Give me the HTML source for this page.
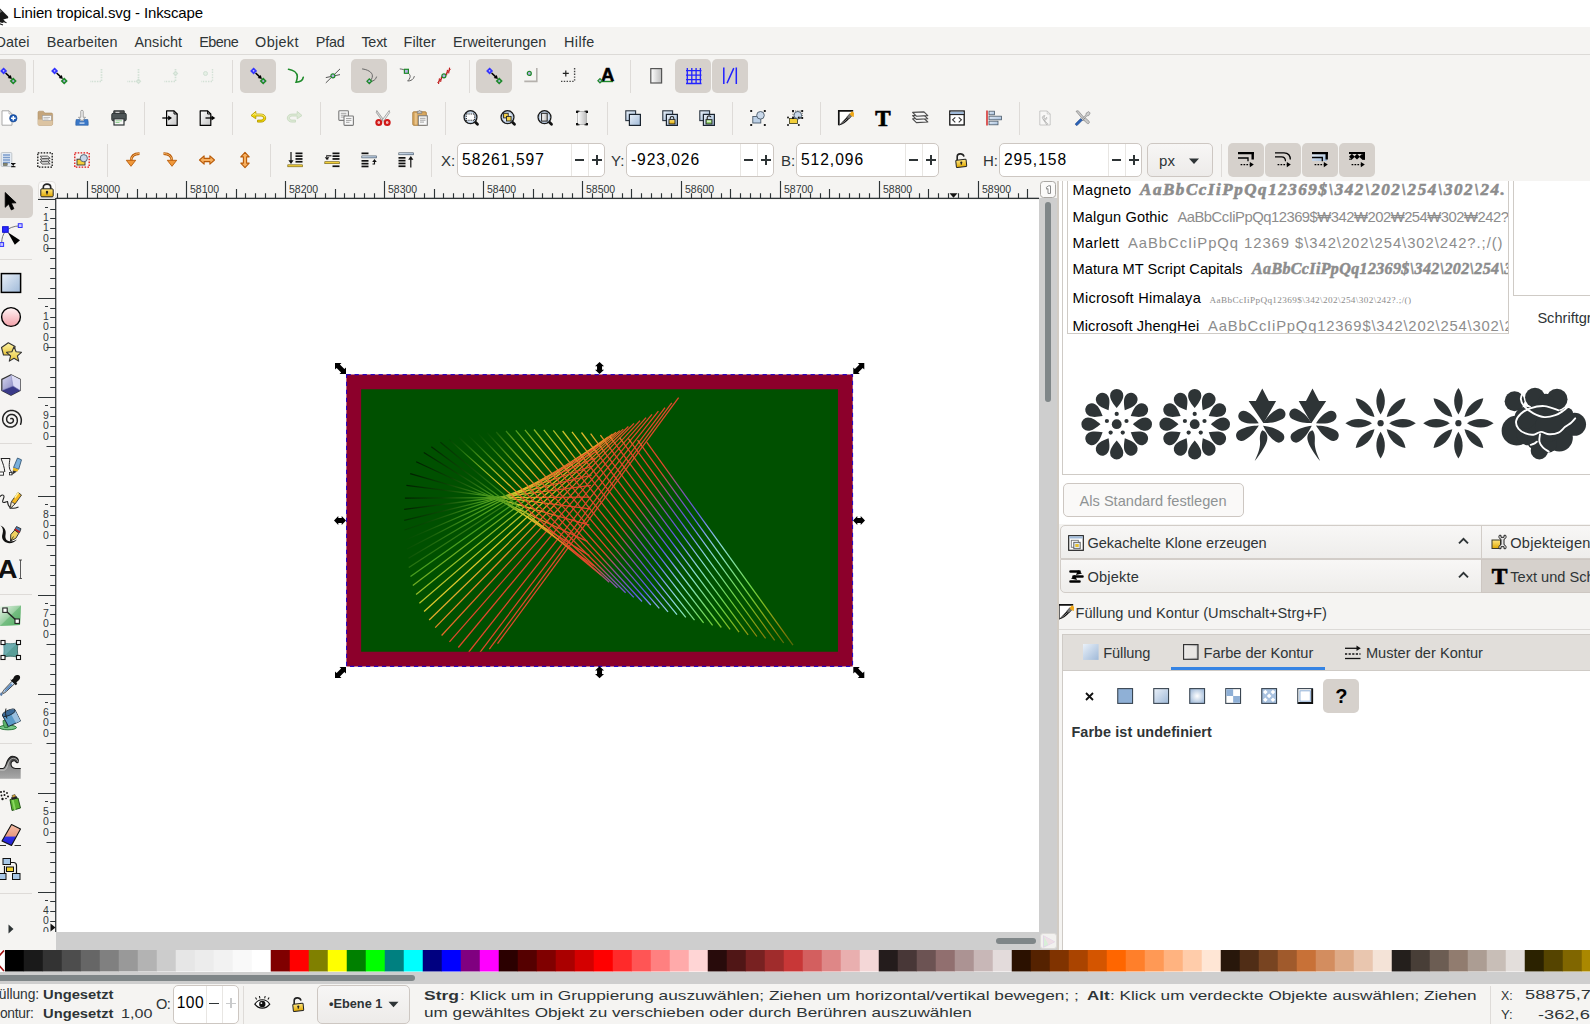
<!DOCTYPE html>
<html><head><meta charset="utf-8"><title>Linien tropical.svg - Inkscape</title>
<style>
html,body{margin:0;padding:0;}
body{width:1590px;height:1024px;overflow:hidden;position:relative;background:#f5f4f2;font-family:"Liberation Sans",sans-serif;}
.b{position:absolute;display:block;}
.t{position:absolute;white-space:nowrap;display:block;}
svg{overflow:visible}
</style></head><body>
<div class="b" style="left:0.00px;top:0.00px;width:1590.00px;height:27.00px;background:#fff"></div>
<div class="b" style="left:0.00px;top:54.00px;width:1590.00px;height:1.00px;background:#dcdad7"></div>
<svg class="b" style="left:-15.00px;top:4.00px;" width="24" height="22" viewBox="0 0 24 22"><path d="M12 1.500L23 12.500c.8 1-.2 2-1.200 2l-3.500 1 2 2-3 1.500-3.500-1-2.500 2.500-4-2.500L2 17c-1.500-.5-2-2-.8-3.200z" fill="#1a1a1a"/><path d="M12 2.500l5 5-2 1.500-2-1-2.500 1.500-1.500-2z" fill="#fff" opacity=".35"/><path d="M18.500 17.500l3 1.200M14 19.500l4 1.500" stroke="#222" stroke-width="1.200"/></svg>
<span class="t" style="left:13.00px;top:5.40px;font-size:15.00px;line-height:15.00px;letter-spacing:-0.114px;color:#000;">Linien tropical.svg - Inkscape</span>
<span class="t" style="left:-4.60px;top:34.51px;font-size:14.40px;line-height:14.40px;letter-spacing:0.114px;color:#2e3436;">Datei</span>
<span class="t" style="left:46.70px;top:34.51px;font-size:14.40px;line-height:14.40px;letter-spacing:0.132px;color:#2e3436;">Bearbeiten</span>
<span class="t" style="left:134.40px;top:34.51px;font-size:14.40px;line-height:14.40px;letter-spacing:0.065px;color:#2e3436;">Ansicht</span>
<span class="t" style="left:199.20px;top:34.51px;font-size:14.40px;line-height:14.40px;letter-spacing:-0.491px;color:#2e3436;">Ebene</span>
<span class="t" style="left:255.10px;top:34.51px;font-size:14.40px;line-height:14.40px;letter-spacing:0.344px;color:#2e3436;">Objekt</span>
<span class="t" style="left:315.70px;top:34.51px;font-size:14.40px;line-height:14.40px;letter-spacing:-0.159px;color:#2e3436;">Pfad</span>
<span class="t" style="left:361.40px;top:34.51px;font-size:14.40px;line-height:14.40px;letter-spacing:-0.230px;color:#2e3436;">Text</span>
<span class="t" style="left:403.60px;top:34.51px;font-size:14.40px;line-height:14.40px;letter-spacing:0.031px;color:#2e3436;">Filter</span>
<span class="t" style="left:452.90px;top:34.51px;font-size:14.40px;line-height:14.40px;letter-spacing:0.054px;color:#2e3436;">Erweiterungen</span>
<span class="t" style="left:564.00px;top:34.51px;font-size:14.40px;line-height:14.40px;letter-spacing:0.396px;color:#2e3436;">Hilfe</span>
<div class="b" style="left:1058.60px;top:181.00px;width:4.00px;height:344.00px;background:#fff"></div><div class="b" style="left:1060.00px;top:181.00px;width:530.00px;height:345.00px;background:#fff"></div><div class="b" style="left:1062.00px;top:181.00px;width:1.00px;height:294.00px;background:#cfcbc6"></div><div class="b" style="left:1062.00px;top:474.00px;width:528.00px;height:1.00px;background:#cfcbc6"></div><div class="b" style="left:1067.00px;top:176.00px;width:442.00px;height:158.00px;border:1px solid #cfcbc6;box-sizing:border-box;background:#fff"></div><div class="b" style="left:1513.00px;top:176.00px;width:90.00px;height:120.00px;border:1px solid #cfcbc6;box-sizing:border-box;background:#fff"></div><div class="b" style="left:1059.00px;top:170.00px;width:531.00px;height:11.00px;background:#f5f4f2"></div><div class="b" style="left:1067px;top:176px;width:441px;height:157px;overflow:hidden"><span class="t" style="left:5.50px;top:7.04px;font-size:14.60px;line-height:14.60px;letter-spacing:0.301px;color:#000;">Magneto</span><span class="t" style="left:5.50px;top:33.84px;font-size:14.60px;line-height:14.60px;letter-spacing:0.139px;color:#000;">Malgun Gothic</span><span class="t" style="left:5.50px;top:60.04px;font-size:14.60px;line-height:14.60px;letter-spacing:0.343px;color:#000;">Marlett</span><span class="t" style="left:5.50px;top:85.94px;font-size:14.60px;line-height:14.60px;letter-spacing:0.067px;color:#000;">Matura MT Script Capitals</span><span class="t" style="left:5.50px;top:115.14px;font-size:14.60px;line-height:14.60px;letter-spacing:0.246px;color:#000;">Microsoft Himalaya</span><span class="t" style="left:5.50px;top:142.84px;font-size:14.60px;line-height:14.60px;letter-spacing:0.105px;color:#000;">Microsoft JhengHei</span><span class="t" style="left:73.00px;top:5.21px;font-size:17.00px;line-height:17.00px;letter-spacing:1.550px;font-weight:bold;font-family:'Liberation Serif',serif;color:#8c8c8c;font-style:italic;-webkit-text-stroke:.6px #8c8c8c;">AaBbCcIiPpQq12369$\342\202\254\302\24.</span><span class="t" style="left:110.40px;top:33.67px;font-size:14.80px;line-height:14.80px;letter-spacing:-0.497px;color:#8c8c8c;">AaBbCcIiPpQq12369$₩342₩202₩254₩302₩242?</span><span class="t" style="left:61.00px;top:59.87px;font-size:14.80px;line-height:14.80px;letter-spacing:0.956px;color:#8c8c8c;">AaBbCcIiPpQq 12369 $\342\202\254\302\242?.;/()</span><span class="t" style="left:185.00px;top:85.46px;font-size:16.00px;line-height:16.00px;letter-spacing:0.367px;font-weight:bold;font-family:'Liberation Serif',serif;color:#8c8c8c;font-style:italic;-webkit-text-stroke:.5px #8c8c8c;">AaBbCcIiPpQq12369$\342\202\254\3</span><span class="t" style="left:142.60px;top:119.51px;font-size:9.20px;line-height:9.20px;letter-spacing:0.383px;font-family:'Liberation Serif',serif;color:#8c8c8c;">AaBbCcIiPpQq12369$\342\202\254\302\242?.;/()</span><span class="t" style="left:141.00px;top:142.67px;font-size:14.80px;line-height:14.80px;letter-spacing:0.807px;color:#8c8c8c;">AaBbCcIiPpQq12369$\342\202\254\302\242?</span></div><span class="t" style="left:1537.40px;top:310.54px;font-size:14.60px;line-height:14.60px;color:#2e3436;">Schriftgröße</span><svg class="b" style="left:0.00px;top:0.00px;" width="1590" height="480" viewBox="0 0 1590 480"><g transform="translate(1116.7,424.2)" fill="#2e3436"><path d="M0 -16.2 C-3.3 -20.402 -6.6 -24.222 -6.6 -28.7 A6.6 6.6 0 0 1 6.6 -28.7 C6.6 -24.222 3.3 -20.402 0 -16.2Z" transform="rotate(0)"/><path d="M0 -16.2 C-3.3 -20.402 -6.6 -24.222 -6.6 -28.7 A6.6 6.6 0 0 1 6.6 -28.7 C6.6 -24.222 3.3 -20.402 0 -16.2Z" transform="rotate(30)"/><path d="M0 -16.2 C-3.3 -20.402 -6.6 -24.222 -6.6 -28.7 A6.6 6.6 0 0 1 6.6 -28.7 C6.6 -24.222 3.3 -20.402 0 -16.2Z" transform="rotate(60)"/><path d="M0 -16.2 C-3.3 -20.402 -6.6 -24.222 -6.6 -28.7 A6.6 6.6 0 0 1 6.6 -28.7 C6.6 -24.222 3.3 -20.402 0 -16.2Z" transform="rotate(90)"/><path d="M0 -16.2 C-3.3 -20.402 -6.6 -24.222 -6.6 -28.7 A6.6 6.6 0 0 1 6.6 -28.7 C6.6 -24.222 3.3 -20.402 0 -16.2Z" transform="rotate(120)"/><path d="M0 -16.2 C-3.3 -20.402 -6.6 -24.222 -6.6 -28.7 A6.6 6.6 0 0 1 6.6 -28.7 C6.6 -24.222 3.3 -20.402 0 -16.2Z" transform="rotate(150)"/><path d="M0 -16.2 C-3.3 -20.402 -6.6 -24.222 -6.6 -28.7 A6.6 6.6 0 0 1 6.6 -28.7 C6.6 -24.222 3.3 -20.402 0 -16.2Z" transform="rotate(180)"/><path d="M0 -16.2 C-3.3 -20.402 -6.6 -24.222 -6.6 -28.7 A6.6 6.6 0 0 1 6.6 -28.7 C6.6 -24.222 3.3 -20.402 0 -16.2Z" transform="rotate(210)"/><path d="M0 -16.2 C-3.3 -20.402 -6.6 -24.222 -6.6 -28.7 A6.6 6.6 0 0 1 6.6 -28.7 C6.6 -24.222 3.3 -20.402 0 -16.2Z" transform="rotate(240)"/><path d="M0 -16.2 C-3.3 -20.402 -6.6 -24.222 -6.6 -28.7 A6.6 6.6 0 0 1 6.6 -28.7 C6.6 -24.222 3.3 -20.402 0 -16.2Z" transform="rotate(270)"/><path d="M0 -16.2 C-3.3 -20.402 -6.6 -24.222 -6.6 -28.7 A6.6 6.6 0 0 1 6.6 -28.7 C6.6 -24.222 3.3 -20.402 0 -16.2Z" transform="rotate(300)"/><path d="M0 -16.2 C-3.3 -20.402 -6.6 -24.222 -6.6 -28.7 A6.6 6.6 0 0 1 6.6 -28.7 C6.6 -24.222 3.3 -20.402 0 -16.2Z" transform="rotate(330)"/><circle r="4.900"/><circle cx="0.00" cy="-10.30" r="2.100"/><circle cx="9.80" cy="-3.18" r="2.100"/><circle cx="6.05" cy="8.33" r="2.100"/><circle cx="-6.05" cy="8.33" r="2.100"/><circle cx="-9.80" cy="-3.18" r="2.100"/></g><g transform="translate(1194.7,424.2)" fill="#2e3436"><path d="M0 -16.2 C-3.3 -20.402 -6.6 -24.222 -6.6 -28.7 A6.6 6.6 0 0 1 6.6 -28.7 C6.6 -24.222 3.3 -20.402 0 -16.2Z" transform="rotate(0)"/><path d="M0 -16.2 C-3.3 -20.402 -6.6 -24.222 -6.6 -28.7 A6.6 6.6 0 0 1 6.6 -28.7 C6.6 -24.222 3.3 -20.402 0 -16.2Z" transform="rotate(30)"/><path d="M0 -16.2 C-3.3 -20.402 -6.6 -24.222 -6.6 -28.7 A6.6 6.6 0 0 1 6.6 -28.7 C6.6 -24.222 3.3 -20.402 0 -16.2Z" transform="rotate(60)"/><path d="M0 -16.2 C-3.3 -20.402 -6.6 -24.222 -6.6 -28.7 A6.6 6.6 0 0 1 6.6 -28.7 C6.6 -24.222 3.3 -20.402 0 -16.2Z" transform="rotate(90)"/><path d="M0 -16.2 C-3.3 -20.402 -6.6 -24.222 -6.6 -28.7 A6.6 6.6 0 0 1 6.6 -28.7 C6.6 -24.222 3.3 -20.402 0 -16.2Z" transform="rotate(120)"/><path d="M0 -16.2 C-3.3 -20.402 -6.6 -24.222 -6.6 -28.7 A6.6 6.6 0 0 1 6.6 -28.7 C6.6 -24.222 3.3 -20.402 0 -16.2Z" transform="rotate(150)"/><path d="M0 -16.2 C-3.3 -20.402 -6.6 -24.222 -6.6 -28.7 A6.6 6.6 0 0 1 6.6 -28.7 C6.6 -24.222 3.3 -20.402 0 -16.2Z" transform="rotate(180)"/><path d="M0 -16.2 C-3.3 -20.402 -6.6 -24.222 -6.6 -28.7 A6.6 6.6 0 0 1 6.6 -28.7 C6.6 -24.222 3.3 -20.402 0 -16.2Z" transform="rotate(210)"/><path d="M0 -16.2 C-3.3 -20.402 -6.6 -24.222 -6.6 -28.7 A6.6 6.6 0 0 1 6.6 -28.7 C6.6 -24.222 3.3 -20.402 0 -16.2Z" transform="rotate(240)"/><path d="M0 -16.2 C-3.3 -20.402 -6.6 -24.222 -6.6 -28.7 A6.6 6.6 0 0 1 6.6 -28.7 C6.6 -24.222 3.3 -20.402 0 -16.2Z" transform="rotate(270)"/><path d="M0 -16.2 C-3.3 -20.402 -6.6 -24.222 -6.6 -28.7 A6.6 6.6 0 0 1 6.6 -28.7 C6.6 -24.222 3.3 -20.402 0 -16.2Z" transform="rotate(300)"/><path d="M0 -16.2 C-3.3 -20.402 -6.6 -24.222 -6.6 -28.7 A6.6 6.6 0 0 1 6.6 -28.7 C6.6 -24.222 3.3 -20.402 0 -16.2Z" transform="rotate(330)"/><circle r="4.900"/><circle cx="0.00" cy="-10.30" r="2.100"/><circle cx="9.80" cy="-3.18" r="2.100"/><circle cx="6.05" cy="8.33" r="2.100"/><circle cx="-6.05" cy="8.33" r="2.100"/><circle cx="-9.80" cy="-3.18" r="2.100"/></g><g transform="translate(1261,424.2)" fill="#2e3436"><path d="M1.300 -35.800L7.800 -23.200h7.300L2.500 -1L-12.400 -23.200h7.200z"/><path d="M0 -2.5 C-2.75 -7.34 -5.5 -11.74 -5.5 -19 A5.5 5.5 0 0 1 5.5 -19 C5.5 -11.74 2.75 -7.34 0 -2.5Z" transform="rotate(-65)"/><path d="M0 -2.5 C-2.75 -7.89 -5.5 -12.79 -5.5 -21.5 A5.5 5.5 0 0 1 5.5 -21.5 C5.5 -12.79 2.75 -7.89 0 -2.5Z" transform="rotate(62)"/><path d="M0 -2.5 C-2.8 -8.11 -5.6 -13.21 -5.6 -22.4 A5.6 5.6 0 0 1 5.6 -22.4 C5.6 -13.21 2.8 -8.11 0 -2.5Z" transform="rotate(-120)"/><path d="M0 -2.5 C-2.75 -8 -5.5 -13 -5.5 -22 A5.5 5.5 0 0 1 5.5 -22 C5.5 -13 2.75 -8 0 -2.5Z" transform="rotate(126)"/><path d="M1.500 6c4 1.500 5.800 5.500 4.500 10.500-1.300 5-6 12.500-12.300 20.300 3.800-8 5.800-14 5.300-20-.4-4.500.3-9.300 2.500-10.800z"/></g><g transform="translate(1313.8,424.2) scale(-1,1)" fill="#2e3436"><path d="M1.300 -35.800L7.800 -23.200h7.300L2.500 -1L-12.400 -23.200h7.200z"/><path d="M0 -2.5 C-2.75 -7.34 -5.5 -11.74 -5.5 -19 A5.5 5.5 0 0 1 5.5 -19 C5.5 -11.74 2.75 -7.34 0 -2.5Z" transform="rotate(-65)"/><path d="M0 -2.5 C-2.75 -7.89 -5.5 -12.79 -5.5 -21.5 A5.5 5.5 0 0 1 5.5 -21.5 C5.5 -12.79 2.75 -7.89 0 -2.5Z" transform="rotate(62)"/><path d="M0 -2.5 C-2.8 -8.11 -5.6 -13.21 -5.6 -22.4 A5.6 5.6 0 0 1 5.6 -22.4 C5.6 -13.21 2.8 -8.11 0 -2.5Z" transform="rotate(-120)"/><path d="M0 -2.5 C-2.75 -8 -5.5 -13 -5.5 -22 A5.5 5.5 0 0 1 5.5 -22 C5.5 -13 2.75 -8 0 -2.5Z" transform="rotate(126)"/><path d="M1.500 6c4 1.500 5.800 5.500 4.500 10.500-1.300 5-6 12.500-12.300 20.300 3.800-8 5.800-14 5.300-20-.4-4.500.3-9.300 2.500-10.800z"/></g><g transform="translate(1380.6,423.2)" fill="#2e3436"><path d="M0 -8.6 C-6 -17.91 -5.28 -27.885 0 -35.2 C5.28 -27.885 6 -17.91 0 -8.6Z" transform="rotate(0)"/><path d="M0 -8.6 C-6 -17.91 -5.28 -27.885 0 -35.2 C5.28 -27.885 6 -17.91 0 -8.6Z" transform="rotate(45)"/><path d="M0 -8.6 C-6 -17.91 -5.28 -27.885 0 -35.2 C5.28 -27.885 6 -17.91 0 -8.6Z" transform="rotate(90)"/><path d="M0 -8.6 C-6 -17.91 -5.28 -27.885 0 -35.2 C5.28 -27.885 6 -17.91 0 -8.6Z" transform="rotate(135)"/><path d="M0 -8.6 C-6 -17.91 -5.28 -27.885 0 -35.2 C5.28 -27.885 6 -17.91 0 -8.6Z" transform="rotate(180)"/><path d="M0 -8.6 C-6 -17.91 -5.28 -27.885 0 -35.2 C5.28 -27.885 6 -17.91 0 -8.6Z" transform="rotate(225)"/><path d="M0 -8.6 C-6 -17.91 -5.28 -27.885 0 -35.2 C5.28 -27.885 6 -17.91 0 -8.6Z" transform="rotate(270)"/><path d="M0 -8.6 C-6 -17.91 -5.28 -27.885 0 -35.2 C5.28 -27.885 6 -17.91 0 -8.6Z" transform="rotate(315)"/><circle r="3.100"/></g><g transform="translate(1458.4,423.2)" fill="#2e3436"><path d="M0 -8.6 C-6 -17.91 -5.28 -27.885 0 -35.2 C5.28 -27.885 6 -17.91 0 -8.6Z" transform="rotate(0)"/><path d="M0 -8.6 C-6 -17.91 -5.28 -27.885 0 -35.2 C5.28 -27.885 6 -17.91 0 -8.6Z" transform="rotate(45)"/><path d="M0 -8.6 C-6 -17.91 -5.28 -27.885 0 -35.2 C5.28 -27.885 6 -17.91 0 -8.6Z" transform="rotate(90)"/><path d="M0 -8.6 C-6 -17.91 -5.28 -27.885 0 -35.2 C5.28 -27.885 6 -17.91 0 -8.6Z" transform="rotate(135)"/><path d="M0 -8.6 C-6 -17.91 -5.28 -27.885 0 -35.2 C5.28 -27.885 6 -17.91 0 -8.6Z" transform="rotate(180)"/><path d="M0 -8.6 C-6 -17.91 -5.28 -27.885 0 -35.2 C5.28 -27.885 6 -17.91 0 -8.6Z" transform="rotate(225)"/><path d="M0 -8.6 C-6 -17.91 -5.28 -27.885 0 -35.2 C5.28 -27.885 6 -17.91 0 -8.6Z" transform="rotate(270)"/><path d="M0 -8.6 C-6 -17.91 -5.28 -27.885 0 -35.2 C5.28 -27.885 6 -17.91 0 -8.6Z" transform="rotate(315)"/><circle r="3.100"/></g><g transform="translate(1340,380) scale(0.157233)"><circle cx="1110" cy="135" r="63" fill="#2e3436"/><circle cx="1122" cy="322" r="94" fill="#2e3436"/><circle cx="1200" cy="335" r="80" fill="#2e3436"/><circle cx="1395" cy="368" r="86" fill="#2e3436"/><circle cx="1492" cy="282" r="73" fill="#2e3436"/><circle cx="1240" cy="112" r="63" fill="#2e3436"/><circle cx="1380" cy="122" r="67" fill="#2e3436"/><circle cx="1300" cy="240" r="110" fill="#2e3436"/><circle cx="1268" cy="450" r="55" fill="#2e3436"/><circle cx="1320" cy="405" r="60" fill="#2e3436"/><circle cx="1445" cy="215" r="38" fill="#2e3436"/><circle cx="1180" cy="240" r="70" fill="#2e3436"/><circle cx="1310" cy="140" r="52" fill="#2e3436"/><circle cx="1420" cy="255" r="62" fill="#2e3436"/><circle cx="1240" cy="390" r="50" fill="#2e3436"/><circle cx="1330" cy="300" r="90" fill="#2e3436"/><path d="M1168 68C1165.0 76.7 1149.3 103.3 1150 120C1150.7 136.7 1158.7 152.7 1172 168C1185.3 183.3 1208.7 200.7 1230 212C1251.3 223.3 1276.7 234.0 1300 236C1323.3 238.0 1350.0 230.7 1370 224C1390.0 217.3 1407.0 204.7 1420 196C1433.0 187.3 1443.3 176.0 1448 172" fill="none" stroke="#fff" stroke-width="12" stroke-linecap="round" stroke-linejoin="round"/><path d="M1392 193C1376.7 188.5 1330.3 168.2 1300 166C1269.7 163.8 1235.0 171.8 1210 180C1185.0 188.2 1165.0 201.3 1150 215C1135.0 228.7 1122.5 246.2 1120 262C1117.5 277.8 1125.0 297.0 1135 310C1145.0 323.0 1164.2 333.7 1180 340C1195.8 346.3 1213.7 349.7 1230 348C1246.3 346.3 1261.3 330.5 1278 330C1294.7 329.5 1311.3 344.2 1330 345C1348.7 345.8 1373.0 342.8 1390 335C1407.0 327.2 1418.7 308.5 1432 298C1445.3 287.5 1459.3 281.0 1470 272C1480.7 263.0 1491.7 248.7 1496 244" fill="none" stroke="#fff" stroke-width="12" stroke-linecap="round" stroke-linejoin="round"/><path d="M1272 345C1271.3 352.8 1265.0 378.2 1268 392C1271.0 405.8 1280.0 417.3 1290 428C1300.0 438.7 1321.7 451.3 1328 456" fill="none" stroke="#fff" stroke-width="12" stroke-linecap="round" stroke-linejoin="round"/><path d="M1213 412C1216.7 410.8 1228.5 408.3 1235 405C1241.5 401.7 1249.2 394.2 1252 392" fill="none" stroke="#fff" stroke-width="12" stroke-linecap="round" stroke-linejoin="round"/></g></svg><div class="b" style="left:1062.50px;top:483.00px;width:181.00px;height:33.50px;border:1px solid #cdc7c2;border-radius:5px;box-sizing:border-box;background:#faf9f8"></div><span class="t" style="left:1079.50px;top:494.04px;font-size:14.60px;line-height:14.60px;letter-spacing:0.012px;color:#8f9394;">Als Standard festlegen</span><div class="b" style="left:1058.60px;top:524.00px;width:532.00px;height:426.00px;background:#f5f4f2"></div><div class="b" style="left:1059.50px;top:525.00px;width:422.00px;height:33.50px;background:linear-gradient(#f8f7f6,#eeedeb);border:1px solid #d2cdc8;box-sizing:border-box;border-radius:5px 0 0 0"></div><div class="b" style="left:1481.00px;top:525.00px;width:120.00px;height:33.50px;background:linear-gradient(#f8f7f6,#eeedeb);border:1px solid #d2cdc8;box-sizing:border-box;"></div><div class="b" style="left:1059.50px;top:559.00px;width:422.00px;height:33.50px;background:linear-gradient(#f8f7f6,#eeedeb);border:1px solid #d2cdc8;box-sizing:border-box;border-radius:0 0 0 5px"></div><div class="b" style="left:1481.00px;top:559.00px;width:120.00px;height:33.50px;background:#d6d1cc;border:1px solid #cdc7c2;box-sizing:border-box"></div><svg class="b" style="left:1067.50px;top:534.50px;" width="16" height="16" viewBox="0 0 16 16"><rect x=".7" y=".7" width="14.600" height="14.600" fill="#fff" stroke="#222" stroke-width="1.200"/><rect x="1.300" y="1.300" width="13.400" height="2.200" fill="#9fb9d8"/><rect x="3.300" y="5.300" width="7" height="7" fill="none" stroke="#777" stroke-width=".9"/><rect x="5.800" y="7.300" width="6.400" height="6.400" fill="#dfe8f2" stroke="#555" stroke-width=".9"/><rect x="7.300" y="9" width="3.400" height="3" fill="#e8c030"/></svg><span class="t" style="left:1087.40px;top:535.64px;font-size:14.60px;line-height:14.60px;letter-spacing:-0.033px;color:#2e3436;">Gekachelte Klone erzeugen</span><svg class="b" style="left:1068.50px;top:568.50px;" width="15" height="15" viewBox="0 0 15 15"><path d="M1.500 2.500h9M4.500 7.500h9M1.500 12.500h9" stroke="#000" stroke-width="2.600" stroke-linecap="round"/><path d="M9 1l4 3.500-6 1.500zM6 6l-4 3.500 6 1.500z" fill="#000"/></svg><span class="t" style="left:1087.40px;top:569.64px;font-size:14.60px;line-height:14.60px;letter-spacing:0.186px;color:#2e3436;">Objekte</span><svg class="b" style="left:1458.00px;top:537.30px;" width="11" height="7.5" viewBox="0 0 11 7.5"><path d="M1 6.300L5.500 1.800l4.500 4.500" fill="none" stroke="#2e3436" stroke-width="1.900"/></svg><svg class="b" style="left:1458.00px;top:571.30px;" width="11" height="7.5" viewBox="0 0 11 7.5"><path d="M1 6.300L5.500 1.800l4.500 4.500" fill="none" stroke="#2e3436" stroke-width="1.900"/></svg><svg class="b" style="left:1490.50px;top:533.50px;" width="17" height="17" viewBox="0 0 17 17"><rect x="1" y="6" width="8.500" height="8.500" fill="url(#gLk)" stroke="#3a3a2a" stroke-width="1"/><path d="M8.300 1.300c-.9 1.700-.2 3.400 1.700 4v5.400c-1.900.6-2.600 2.300-1.700 4l1.700 0v-2h3v2l1.700 0c.9-1.700.2-3.400-1.700-4V5.300c1.900-.6 2.600-2.300 1.700-4l-1.700 0v2h-3v-2z" fill="#e4e4e4" stroke="#222" stroke-width="1" stroke-linejoin="round"/></svg><span class="t" style="left:1510.30px;top:535.64px;font-size:14.60px;line-height:14.60px;letter-spacing:0.218px;color:#2e3436;">Objekteigens</span><svg class="b" style="left:1490.50px;top:567.50px;" width="17" height="17" viewBox="0 0 17 17"><text x="8.500" y="16" text-anchor="middle" font-family="Liberation Serif" font-weight="bold" font-size="23.500" fill="#000" stroke="#000" stroke-width=".7">T</text></svg><span class="t" style="left:1510.30px;top:569.64px;font-size:14.60px;line-height:14.60px;color:#2e3436;">Text und Schriftart</span><svg class="b" width="0" height="0" style="left:0;top:0"><defs>
<linearGradient id="gB" x1="0" y1="0" x2="1" y2="1"><stop offset="0" stop-color="#eaf1f9"/><stop offset="1" stop-color="#9fb9d8"/></linearGradient>
<linearGradient id="gG" x1="0" y1="0" x2="1" y2="1"><stop offset="0" stop-color="#ffffff"/><stop offset="1" stop-color="#c4c4c4"/></linearGradient>
<linearGradient id="gGh" x1="0" y1="0" x2="1" y2="0"><stop offset="0" stop-color="#ffffff"/><stop offset="1" stop-color="#bdbdbd"/></linearGradient>
<linearGradient id="gP" x1="0" y1="0" x2="0" y2="1"><stop offset="0" stop-color="#fff5f5"/><stop offset="1" stop-color="#f3a0a8"/></linearGradient>
<linearGradient id="gY" x1="0" y1="0" x2="0" y2="1"><stop offset="0" stop-color="#fff6a8"/><stop offset="1" stop-color="#e8c43a"/></linearGradient>
<linearGradient id="gO" x1="0" y1="0" x2="0" y2="1"><stop offset="0" stop-color="#f7b56a"/><stop offset="1" stop-color="#d9701a"/></linearGradient>
<linearGradient id="gGr" x1="0" y1="0" x2="1" y2="1"><stop offset="0" stop-color="#e8f5e8"/><stop offset="1" stop-color="#4aa85a"/></linearGradient>
<radialGradient id="gR" cx="0.5" cy="0.5" r="0.6"><stop offset="0" stop-color="#ffffff"/><stop offset="1" stop-color="#9fb9d8"/></radialGradient>
<linearGradient id="gBx" x1="0" y1="0" x2="1" y2="1"><stop offset="0" stop-color="#d8d8f0"/><stop offset="1" stop-color="#6a6ab0"/></linearGradient>
<linearGradient id="gLk" x1="0" y1="0" x2="0" y2="1"><stop offset="0" stop-color="#ffe680"/><stop offset="1" stop-color="#e0a800"/></linearGradient>
<linearGradient id="gEr" x1="0" y1="0" x2="0" y2="1"><stop offset="0" stop-color="#f7c0a8"/><stop offset="0.55" stop-color="#e89a80"/><stop offset="0.6" stop-color="#3030e8"/><stop offset="1" stop-color="#2020d0"/></linearGradient>
</defs></svg><svg class="b" style="left:1058.00px;top:604.00px;" width="16" height="16" viewBox="0 0 16 16"><defs><linearGradient id="gFi" x1="0" y1="1" x2="1" y2="0"><stop offset="0" stop-color="#000"/><stop offset=".5" stop-color="#fff"/></linearGradient></defs><path d="M.8.800h14.400L.8 15.200z" fill="#fff"/><path d="M.8 15.200V.8h14.400" fill="none" stroke="#111" stroke-width="1.700"/><path d="M.8 15.500L9.200 6.800l2 2C8.500 12.200 5.200 14.500.8 15.500z" fill="#111"/><path d="M3.500 13.500C6 12 8 10.300 9.800 8.200" stroke="#999" stroke-width=".8" fill="none"/><path d="M8.800 7.200l2.900-3.400 2.200 2-2.900 3.300z" fill="#777" stroke="#222" stroke-width=".6"/><path d="M11.500 4l2.500-2.700 2 1.400-.2 4.300-2.200-.8z" fill="#f0a818"/></svg><span class="t" style="left:1075.50px;top:605.64px;font-size:14.60px;line-height:14.60px;letter-spacing:0.018px;color:#2e3436;">Füllung und Kontur (Umschalt+Strg+F)</span><div class="b" style="left:1059.00px;top:628.50px;width:531.00px;height:1.00px;background:#dcdad7"></div><div class="b" style="left:1062.00px;top:634.00px;width:528.00px;height:316.00px;background:#fff;border-left:1px solid #cfcbc6;border-top:1px solid #cfcbc6;box-sizing:border-box"></div><div class="b" style="left:1063.00px;top:635.00px;width:527.00px;height:36.00px;background:#e1deda;border-bottom:1px solid #cfcbc6;box-sizing:border-box"></div><div class="b" style="left:1171.30px;top:666.50px;width:153.80px;height:3.80px;background:#3584e4"></div><svg class="b" style="left:1083.00px;top:644.20px;" width="15.6" height="15.9" viewBox="0 0 15.6 15.9"><rect width="15.600" height="15.900" fill="url(#gB)"/></svg><span class="t" style="left:1103.30px;top:646.04px;font-size:14.60px;line-height:14.60px;letter-spacing:-0.138px;color:#2e3436;">Füllung</span><svg class="b" style="left:1183.20px;top:644.20px;" width="15.6" height="15.9" viewBox="0 0 15.6 15.9"><rect x=".6" y=".6" width="14.400" height="14.700" fill="url(#gGh)" stroke="#333" stroke-width="1.200"/><rect x="2.200" y="2.200" width="11.200" height="11.500" fill="#e9e7e4"/></svg><span class="t" style="left:1203.50px;top:646.04px;font-size:14.60px;line-height:14.60px;letter-spacing:-0.039px;color:#2e3436;">Farbe der Kontur</span><svg class="b" style="left:1344.80px;top:644.20px;" width="16" height="16" viewBox="0 0 16 16"><path d="M0 4.300h12" stroke="#111" stroke-width="1.300"/><path d="M15.800 4.300L11.500 1.500v5.600z" fill="#111"/><path d="M0 10h15.500" stroke="#111" stroke-width="1.300" stroke-dasharray="2.200 1.400"/><path d="M0 14.500h15.500" stroke="#111" stroke-width="1.300"/></svg><span class="t" style="left:1365.90px;top:646.04px;font-size:14.60px;line-height:14.60px;letter-spacing:0.018px;color:#2e3436;">Muster der Kontur</span><svg class="b" style="left:1085.00px;top:691.50px;" width="9" height="9" viewBox="0 0 9 9"><path d="M1 1l7 7M8 1l-7 7" stroke="#111" stroke-width="1.800"/></svg><svg class="b" style="left:1116.90px;top:688.00px;" width="16.3" height="16" viewBox="0 0 16 16"><rect x=".6" y=".6" width="14.800" height="14.800" fill="#8fb0d6" stroke="#3a4652" stroke-width="1.100"/></svg><svg class="b" style="left:1152.90px;top:688.00px;" width="16.3" height="16" viewBox="0 0 16 16"><rect x=".6" y=".6" width="14.800" height="14.800" fill="url(#gB)" stroke="#3a4652" stroke-width="1.100"/></svg><svg class="b" style="left:1189.30px;top:688.00px;" width="16.3" height="16" viewBox="0 0 16 16"><rect x=".6" y=".6" width="14.800" height="14.800" fill="url(#gR)" stroke="#3a4652" stroke-width="1.100"/></svg><svg class="b" style="left:1224.90px;top:688.00px;" width="16.3" height="16" viewBox="0 0 16 16"><rect x=".6" y=".6" width="14.800" height="14.800" fill="#fff" stroke="#3a4652" stroke-width="1.100"/><rect x="1.200" y="1.200" width="6.800" height="6.800" fill="#8fb0d6"/><rect x="8" y="8" width="6.800" height="6.800" fill="#8fb0d6"/></svg><svg class="b" style="left:1260.90px;top:688.00px;" width="16.3" height="16" viewBox="0 0 16 16"><rect x=".6" y=".6" width="14.800" height="14.800" fill="#a9c2e0" stroke="#3a4652" stroke-width="1.100"/><path d="M4.2 1.8l2.300 2.300-2.300 2.300-2.300-2.300z" fill="#fff"/><path d="M4.2 9.4l2.300 2.300-2.300 2.300-2.300-2.300z" fill="#fff"/><path d="M11.8 1.8l2.300 2.300-2.300 2.300-2.300-2.300z" fill="#fff"/><path d="M11.8 9.4l2.300 2.300-2.300 2.300-2.300-2.300z" fill="#fff"/><path d="M8 5.600l2.300 2.300L8 10.200 5.700 7.900z" fill="#fff"/></svg><svg class="b" style="left:1297.00px;top:688.00px;" width="16.3" height="16" viewBox="0 0 16 16"><rect x=".6" y=".6" width="14.800" height="14.800" fill="#fff" stroke="#3a4652" stroke-width="1.100"/><rect x="2.800" y="2.800" width="10.400" height="10.400" fill="none" stroke="#8fb0d6" stroke-width="1"/><path d="M15 1v14H1" fill="none" stroke="#111" stroke-width="1.800"/></svg><div class="b" style="left:1323.40px;top:679.40px;width:35.70px;height:33.20px;background:#d6d1cc;border-radius:5px"></div><span class="t" style="left:1335.30px;top:686.37px;font-size:20.00px;line-height:20.00px;font-weight:bold;color:#000;">?</span><span class="t" style="left:1071.40px;top:725.11px;font-size:14.40px;line-height:14.40px;letter-spacing:0.101px;font-weight:bold;color:#2e3436;">Farbe ist undefiniert</span>
<div class="b" style="left:-10.00px;top:59.00px;width:36.00px;height:34.00px;background:#d6d1cc;border-radius:5px"></div>
<div class="b" style="left:33.00px;top:60.00px;width:1.00px;height:33.00px;background:#dedbd8"></div>
<div class="b" style="left:240.00px;top:59.00px;width:36.00px;height:34.00px;background:#d6d1cc;border-radius:5px"></div>
<div class="b" style="left:351.00px;top:59.00px;width:36.00px;height:34.00px;background:#d6d1cc;border-radius:5px"></div>
<div class="b" style="left:476.00px;top:59.00px;width:36.00px;height:34.00px;background:#d6d1cc;border-radius:5px"></div>
<div class="b" style="left:675.00px;top:59.00px;width:35.70px;height:34.00px;background:#d6d1cc;border-radius:5px"></div>
<div class="b" style="left:712.10px;top:59.00px;width:35.80px;height:34.00px;background:#d6d1cc;border-radius:5px"></div>
<div class="b" style="left:232.00px;top:60.00px;width:1.00px;height:33.00px;background:#dedbd8"></div>
<div class="b" style="left:468.50px;top:60.00px;width:1.00px;height:33.00px;background:#dedbd8"></div>
<div class="b" style="left:630.00px;top:60.00px;width:1.00px;height:33.00px;background:#dedbd8"></div>
<svg class="b" style="left:0.00px;top:68.00px;" width="16" height="16" viewBox="0 0 16 16"><path d="M3.6 0.6l2.3 2.3l-2.3 2.3l-2.3 -2.3z" fill="#c4c0ff" stroke="#3434ff" stroke-width="1.7"/><path d="M5.600 5l4.600 4.400" stroke="#000" stroke-width="1.600"/><path d="M11.900 11.100l-4.200-1 3.100-3.200z" fill="#000"/><path d="M13.2 10.6l2.4 2.4l-2.4 2.4l-2.4 -2.4z" fill="#b9b0e8" stroke="#1e8a2a" stroke-width="1.6"/></svg>
<svg class="b" style="left:51.00px;top:68.00px;" width="16" height="16" viewBox="0 0 16 16"><path d="M3.6 0.6l2.3 2.3l-2.3 2.3l-2.3 -2.3z" fill="#c4c0ff" stroke="#3434ff" stroke-width="1.7"/><path d="M5.600 5l4.600 4.400" stroke="#000" stroke-width="1.600"/><path d="M11.900 11.100l-4.200-1 3.100-3.200z" fill="#000"/><path d="M13.2 10.6l2.4 2.4l-2.4 2.4l-2.4 -2.4z" fill="#b9b0e8" stroke="#1e8a2a" stroke-width="1.6"/></svg>
<svg class="b" style="left:88.00px;top:68.00px;" width="16" height="16" viewBox="0 0 16 16"><path d="M13.500 1v12.500H2" fill="none" stroke="#d2e0d5" stroke-width="1.700" stroke-dasharray="1.500 1.100"/></svg>
<svg class="b" style="left:125.00px;top:68.00px;" width="16" height="16" viewBox="0 0 16 16"><path d="M13.500 1v12.500H2" fill="none" stroke="#d2e0d5" stroke-width="1.700" stroke-dasharray="1.500 1.100"/><path d="M13.5 11.3l2 2l-2 2l-2 -2z" fill="#e4efe4" stroke="#d2e0d5" stroke-width="1.2"/></svg>
<svg class="b" style="left:162.00px;top:68.00px;" width="16" height="16" viewBox="0 0 16 16"><path d="M13.500 1v12.500H2" fill="none" stroke="#d2e0d5" stroke-width="1.700" stroke-dasharray="1.500 1.100"/><path d="M13.5 3.5l2 2l-2 2l-2 -2z" fill="#e4efe4" stroke="#d2e0d5" stroke-width="1.2"/></svg>
<svg class="b" style="left:199.00px;top:68.00px;" width="16" height="16" viewBox="0 0 16 16"><path d="M13.500 1v12.500H2" fill="none" stroke="#d2e0d5" stroke-width="1.400" stroke-dasharray="1.400 1.200"/><circle cx="6.500" cy="5.500" r="2" fill="#e4efe4" stroke="#d2e0d5"/></svg>
<svg class="b" style="left:250.00px;top:68.00px;" width="16" height="16" viewBox="0 0 16 16"><path d="M3.6 0.6l2.3 2.3l-2.3 2.3l-2.3 -2.3z" fill="#c4c0ff" stroke="#3434ff" stroke-width="1.7"/><path d="M5.600 5l4.600 4.400" stroke="#000" stroke-width="1.600"/><path d="M11.900 11.100l-4.200-1 3.100-3.200z" fill="#000"/><path d="M13.2 10.6l2.4 2.4l-2.4 2.4l-2.4 -2.4z" fill="#b9b0e8" stroke="#1e8a2a" stroke-width="1.6"/></svg>
<svg class="b" style="left:287.00px;top:68.00px;" width="16" height="16" viewBox="0 0 16 16"><path d="M1.5 1.3C6 2 10.3 4.6 10.3 8.6c0 2.4-.5 4-1.2 5.6 3.2 0 6.6-1.6 7.2-5" fill="none" stroke="#1e8a2a" stroke-width="1.6" stroke-linecap="round"/></svg>
<svg class="b" style="left:324.00px;top:68.00px;" width="16" height="16" viewBox="0 0 16 16"><path d="M1.8 14.9L16 .9M1.8 9.6L16 6.6" stroke="#555" stroke-width="1" fill="none"/><circle cx="8.9" cy="7.8" r="2" fill="#b9b0e8" stroke="#1e8a2a" stroke-width="1.2"/></svg>
<svg class="b" style="left:361.00px;top:68.00px;" width="16" height="16" viewBox="0 0 16 16"><path d="M1.1.9c5 .6 10.3 3 10.3 7 0 2.400-1.2 4-3 5.500 3.5.3 6.600-1.600 7.200-4.800" fill="none" stroke="#666" stroke-width="1"/><path d="M8.3 10.9l2.3 2.3l-2.3 2.3l-2.3 -2.3z" fill="#b9b0e8" stroke="#1e8a2a" stroke-width="1.3"/></svg>
<svg class="b" style="left:398.00px;top:68.00px;" width="16" height="16" viewBox="0 0 16 16"><path d="M1.800.9c3 .3 5 .8 6.600 2.400 2.500 2.600 4.500 3.500 3.500 6.500-.5 1.500-1.500 2.600-2.300 3.200 3.200.2 6.200-1.700 6.800-4.900" fill="none" stroke="#666" stroke-width="1"/><rect x="6.400" y="1.300" width="4" height="4" fill="#b9b0e8" stroke="#1e8a2a" stroke-width="1.2"/></svg>
<svg class="b" style="left:435.00px;top:68.00px;" width="16" height="16" viewBox="0 0 16 16"><path d="M2.500 14.900L15.600.9" stroke="#c01818" stroke-width="1"/><path d="M3.500 16l1-5.600M5.600 13.900l1-5.600M11.500 7.400l1-5.600M13.600 5.300l1-5.600" stroke="#c01818" stroke-width="1.100"/><circle cx="8.900" cy="7.800" r="2" fill="#b9b0e8" stroke="#1e8a2a" stroke-width="1.200"/></svg>
<svg class="b" style="left:486.00px;top:68.00px;" width="16" height="16" viewBox="0 0 16 16"><path d="M3.6 0.6l2.3 2.3l-2.3 2.3l-2.3 -2.3z" fill="#c4c0ff" stroke="#3434ff" stroke-width="1.7"/><path d="M5.600 5l4.600 4.400" stroke="#000" stroke-width="1.600"/><path d="M11.900 11.100l-4.200-1 3.100-3.200z" fill="#000"/><path d="M13.2 10.6l2.4 2.4l-2.4 2.4l-2.4 -2.4z" fill="#b9b0e8" stroke="#1e8a2a" stroke-width="1.6"/></svg>
<svg class="b" style="left:523.00px;top:68.00px;" width="16" height="16" viewBox="0 0 16 16"><path d="M13.800 0v13.400H1.300" fill="none" stroke="#b5b1ad" stroke-width="1.600"/><circle cx="6.300" cy="5.400" r="2" fill="#b9b0e8" stroke="#1e8a2a" stroke-width="1.200"/></svg>
<svg class="b" style="left:560.00px;top:68.00px;" width="16" height="16" viewBox="0 0 16 16"><path d="M14.600 0v13.400M1 13.400h13.600" fill="none" stroke="#444" stroke-width="1.400" stroke-dasharray="1.400 1.400"/><path d="M5.800 2.400v6M2.800 5.400h6" stroke="#222" stroke-width="1.200"/></svg>
<svg class="b" style="left:597.00px;top:68.00px;" width="16" height="16" viewBox="0 0 16 16"><path d="M2 13.500h14" stroke="#1e8a2a" stroke-width="1.400"/><text x="4" y="13.300" font-family="Liberation Sans" font-weight="bold" font-size="18.500" fill="#000" stroke="#000" stroke-width=".5">A</text><path d="M3 10.6l2.1 2.1l-2.1 2.1l-2.1 -2.1z" fill="#b9b0e8" stroke="#1e8a2a" stroke-width="1.2"/></svg>
<svg class="b" style="left:648.00px;top:68.00px;" width="16" height="16" viewBox="0 0 16 16"><rect x="2.800" y=".6" width="10.800" height="14.400" fill="url(#gGh)" stroke="#555" stroke-width="1.200"/></svg>
<svg class="b" style="left:685.00px;top:68.00px;" width="16" height="16" viewBox="0 0 16 16"><path d="M2.300 0v16M6.800 0v16M11.100 0v16M15.400 0v16M1 2.600h15.500M1 7.200h15.500M1 11.700h15.500M1 15.500h15.500" stroke="#2222ff" stroke-width="1.300" fill="none"/></svg>
<svg class="b" style="left:722.00px;top:68.00px;" width="16" height="16" viewBox="0 0 16 16"><path d="M1.800 -.4v16.400M14.300 -.4v16.400M5 15.200L11.800.1" stroke="#2222ff" stroke-width="1.500" fill="none"/></svg>
<div class="b" style="left:144.00px;top:102.00px;width:1.00px;height:33.00px;background:#dedbd8"></div>
<div class="b" style="left:232.00px;top:102.00px;width:1.00px;height:33.00px;background:#dedbd8"></div>
<div class="b" style="left:320.00px;top:102.00px;width:1.00px;height:33.00px;background:#dedbd8"></div>
<div class="b" style="left:445.00px;top:102.00px;width:1.00px;height:33.00px;background:#dedbd8"></div>
<div class="b" style="left:607.00px;top:102.00px;width:1.00px;height:33.00px;background:#dedbd8"></div>
<div class="b" style="left:732.00px;top:102.00px;width:1.00px;height:33.00px;background:#dedbd8"></div>
<div class="b" style="left:820.00px;top:102.00px;width:1.00px;height:33.00px;background:#dedbd8"></div>
<div class="b" style="left:1019.00px;top:102.00px;width:1.00px;height:33.00px;background:#dedbd8"></div>
<svg class="b" style="left:0.50px;top:110.00px;" width="16" height="16" viewBox="0 0 16 16"><path d="M1 0.8h7l3 3v11.4h-10z" fill="#fff" stroke="#a9a9a9" stroke-width="1" stroke-linejoin="round"/><path d="M8 0.8v3h3" fill="none" stroke="#a9a9a9" stroke-width="0.8"/><circle cx="12.300" cy="8.300" r="3.700" fill="#1c5bb8" stroke="#123f85" stroke-width=".6"/><path d="M12.300 6v4.600M10 8.300h4.600" stroke="#fff" stroke-width="1.500"/></svg>
<svg class="b" style="left:37.00px;top:110.00px;" width="16" height="16" viewBox="0 0 16 16"><path d="M1 2.500c0-.8.500-1.300 1.300-1.300h4l1.500 1.800h6.500c.8 0 1.300.5 1.300 1.300v9.700c0 .8-.5 1.300-1.300 1.300H2.300c-.8 0-1.300-.5-1.300-1.300z" fill="#c4a57c" stroke="#b09066" stroke-width=".6"/><rect x="5.300" y="5.600" width="9" height="5" fill="#f4f4f4" stroke="#999" stroke-width=".5"/><path d="M6.500 7.500h6.500M6.500 9h5" stroke="#aaa" stroke-width=".7"/><path d="M1 9.500h4l1 1.500h9.600v3c0 .8-.5 1.300-1.300 1.300H2.300c-.8 0-1.300-.5-1.300-1.300z" fill="#dcc4a2"/></svg>
<svg class="b" style="left:74.00px;top:110.00px;" width="16" height="16" viewBox="0 0 16 16"><path d="M6.800 1.300c0-.6.500-1 1.200-1s1.200.4 1.200 1v6h2.300L8 10.800 4.500 7.300h2.300z" fill="#f4f4f4" stroke="#8a8a8a" stroke-width=".8" stroke-linejoin="round"/><path d="M2.200 9.500h3.500l.8 1.800h3l.8-1.800h3.500l.4 2.500v3.300H1.800V12z" fill="#3a78c8" stroke="#2a5ca0" stroke-width=".6"/><rect x="5.500" y="12.500" width="5" height="1.200" fill="#dfe9f7"/></svg>
<svg class="b" style="left:111.00px;top:110.00px;" width="16" height="16" viewBox="0 0 16 16"><path d="M2.800.8h10.400v3H2.800z" fill="#555" stroke="#2e3436" stroke-width="1"/><rect x=".8" y="3.300" width="14.400" height="7.500" rx="1.200" fill="#4d5456" stroke="#2e3436" stroke-width="1"/><rect x="4.500" y="1.800" width="4" height="1.200" fill="#ccc"/><rect x="3" y="8.800" width="10" height="6.200" fill="#f6f6f6" stroke="#2e3436" stroke-width="1.200"/><path d="M4.500 10.800h6.500M4.500 12.500h4" stroke="#7fc97f" stroke-width=".8"/></svg>
<svg class="b" style="left:162.00px;top:110.00px;" width="16" height="16" viewBox="0 0 16 16"><path d="M4.6 0.8h7.4l3.2 3.2v11.4h-10.6z" fill="url(#gG)" stroke="#000" stroke-width="1.2" stroke-linejoin="round"/><path d="M12 0.8v3.2h3.2" fill="none" stroke="#000" stroke-width="0.96"/><path d="M.3 8h6.500" stroke="#000" stroke-width="1.300"/><path d="M10 8L6.200 5.400v5.200z" fill="#000"/></svg>
<svg class="b" style="left:199.00px;top:110.00px;" width="16" height="16" viewBox="0 0 16 16"><path d="M1.2 0.8h7.4l3.2 3.2v11.4h-10.6z" fill="url(#gG)" stroke="#000" stroke-width="1.2" stroke-linejoin="round"/><path d="M8.6 0.8v3.2h3.2" fill="none" stroke="#000" stroke-width="0.96"/><path d="M6.500 8h6.800" stroke="#000" stroke-width="1.300"/><path d="M16.300 8l-3.800-2.600v5.200z" fill="#000"/></svg>
<svg class="b" style="left:250.00px;top:110.00px;" width="16" height="16" viewBox="0 0 16 16"><path d="M1 5.500L5.800 1.400v2.700h5.200c2.800 0 4.700 1.700 4.700 4s-2 4-4.700 4H7.500v-2h3.500c1.500 0 2.500-.8 2.500-2s-1-2.100-2.500-2.100H5.800v2.800z" fill="#edd400" stroke="#b59a00" stroke-width=".9" stroke-linejoin="round"/><path d="M2.600 5.400L5.200 3.200v1.600h5.800c2.200 0 3.600 1.200 3.900 2.600" stroke="#fff7a8" stroke-width=".7" fill="none"/></svg>
<svg class="b" style="left:287.00px;top:110.00px;" width="16" height="16" viewBox="0 0 16 16"><g opacity=".28"><path d="M15 5.500L10.200 1.400v2.700H5c-2.800 0-4.700 1.700-4.700 4s2 4 4.700 4h3.500v-2H5c-1.500 0-2.500-.8-2.500-2S3.500 6 5 6h5.200v2.800z" fill="#9fd08a" stroke="#5a9a4a" stroke-width=".9" stroke-linejoin="round"/></g></svg>
<svg class="b" style="left:338.00px;top:110.00px;" width="16" height="16" viewBox="0 0 16 16"><rect x=".8" y=".8" width="9.600" height="9.600" rx=".8" fill="#f8f8f8" stroke="#7a7a7a" stroke-width="1.100"/><path d="M2.800 3.300h5.600M2.800 5.200h5.600M2.800 7.100h3.500" stroke="#9a9a9a" stroke-width=".9"/><rect x="6" y="6" width="9.400" height="9.400" rx=".8" fill="#f8f8f8" stroke="#7a7a7a" stroke-width="1.100"/><path d="M8 8.500h5.400M8 10.400h5.400M8 12.300h3.500" stroke="#9a9a9a" stroke-width=".9"/></svg>
<svg class="b" style="left:375.00px;top:110.00px;" width="16" height="16" viewBox="0 0 16 16"><path d="M1.800.5l7 9.500-1.500 1.200L1.300 2.500z" fill="#d8d8d8" stroke="#8a8a8a" stroke-width=".7"/><path d="M14.200.5l-7 9.500 1.500 1.200 6-8.700z" fill="#eeeeee" stroke="#8a8a8a" stroke-width=".7"/><circle cx="3.800" cy="12.500" r="2.400" fill="none" stroke="#d01818" stroke-width="2.200"/><circle cx="12.200" cy="12.500" r="2.400" fill="none" stroke="#d01818" stroke-width="2.200"/><circle cx="3.800" cy="12.500" r=".9" fill="#f3b0b0"/><circle cx="12.200" cy="12.500" r=".9" fill="#f3b0b0"/></svg>
<svg class="b" style="left:412.00px;top:110.00px;" width="16" height="16" viewBox="0 0 16 16"><rect x=".8" y="1.800" width="13.500" height="13.500" rx="1" fill="#d9a860" stroke="#a87a3a" stroke-width=".9"/><rect x="2.800" y="3" width="2" height="11.500" fill="#e9c48a"/><path d="M5.300 1.300h1.300c0-1 1.900-1 1.900 0h1.300v2H5.300z" fill="#c8c8c8" stroke="#777" stroke-width=".7"/><rect x="6.300" y="5.800" width="9" height="9.500" fill="#f8f8f8" stroke="#777" stroke-width="1"/><path d="M8 8.300h5.500M8 10.200h5.500M8 12.100h4" stroke="#9a9a9a" stroke-width=".9"/></svg>
<svg class="b" style="left:463.00px;top:110.00px;" width="16" height="16" viewBox="0 0 16 16"><path d="M12 11.800l2.500 2.400" stroke="#111" stroke-width="2.800" stroke-linecap="round"/><circle cx="7.500" cy="7.200" r="6.400" fill="#dfe8f2" stroke="#1a1a1a" stroke-width="1.400"/><circle cx="7.500" cy="7.200" r="5.300" fill="none" stroke="#9fb6d0" stroke-width=".8"/><rect x="3.300" y="4" width="8.400" height="6.200" fill="#fff" stroke="#111" stroke-width="1.100" stroke-dasharray="1.100 1.100"/></svg>
<svg class="b" style="left:500.00px;top:110.00px;" width="16" height="16" viewBox="0 0 16 16"><path d="M12 11.800l2.500 2.400" stroke="#111" stroke-width="2.800" stroke-linecap="round"/><circle cx="7.500" cy="7.200" r="6.400" fill="#dfe8f2" stroke="#1a1a1a" stroke-width="1.400"/><circle cx="7.500" cy="7.200" r="5.300" fill="none" stroke="#9fb6d0" stroke-width=".8"/><rect x="3.600" y="3.300" width="4.600" height="4.600" fill="#f5d34a" stroke="#222" stroke-width=".9"/><rect x="6.500" y="6.400" width="4.600" height="4.600" fill="#f5d34a" stroke="#222" stroke-width=".9"/></svg>
<svg class="b" style="left:537.00px;top:110.00px;" width="16" height="16" viewBox="0 0 16 16"><path d="M12 11.800l2.500 2.400" stroke="#111" stroke-width="2.800" stroke-linecap="round"/><circle cx="7.500" cy="7.200" r="6.400" fill="#dfe8f2" stroke="#1a1a1a" stroke-width="1.400"/><circle cx="7.500" cy="7.200" r="5.300" fill="none" stroke="#9fb6d0" stroke-width=".8"/><rect x="4.600" y="3.300" width="5.600" height="7.800" fill="url(#gGh)" stroke="#222" stroke-width="1"/></svg>
<svg class="b" style="left:574.00px;top:110.00px;" width="16" height="16" viewBox="0 0 16 16"><rect x="3.600" y="1.600" width="8.800" height="12.800" fill="url(#gGh)" stroke="#aaa" stroke-width=".8"/><path d="M2 3.2h0v0" fill="none" stroke="#111" stroke-width="1.500"/><rect x="2" y="0.8" width="2.200" height="2.200" fill="#111"/><path d="M14 3.2h0v0" fill="none" stroke="#111" stroke-width="1.500"/><rect x="11.8" y="0.8" width="2.200" height="2.200" fill="#111"/><path d="M2 12.8h0v0" fill="none" stroke="#111" stroke-width="1.500"/><rect x="2" y="13" width="2.200" height="2.200" fill="#111"/><path d="M14 12.8h0v0" fill="none" stroke="#111" stroke-width="1.500"/><rect x="11.8" y="13" width="2.200" height="2.200" fill="#111"/><path d="M2.500 1.200h3M10.500 1.200h3M2.500 14.800h3M10.500 14.800h3" stroke="#111" stroke-width="1"/></svg>
<svg class="b" style="left:625.00px;top:110.00px;" width="16" height="16" viewBox="0 0 16 16"><rect x=".8" y=".8" width="9.800" height="9.800" fill="url(#gB)" stroke="#2a3440" stroke-width="1.100"/><rect x="4.400" y="4.400" width="11" height="11" fill="url(#gB)" stroke="#1a2430" stroke-width="1.200"/></svg>
<svg class="b" style="left:662.00px;top:110.00px;" width="16" height="16" viewBox="0 0 16 16"><rect x=".8" y=".8" width="9.800" height="9.800" fill="url(#gB)" stroke="#2a3440" stroke-width="1.100"/><rect x="4.400" y="4.400" width="11" height="11" fill="url(#gB)" stroke="#1a2430" stroke-width="1.200"/><path d="M8.200 9.800V8.300c0-2.400 3.600-2.400 3.600 0v1.500" fill="none" stroke="#222" stroke-width="1.100"/><rect x="7" y="9.600" width="6" height="4.400" fill="url(#gLk)" stroke="#222" stroke-width=".9"/></svg>
<svg class="b" style="left:699.00px;top:110.00px;" width="16" height="16" viewBox="0 0 16 16"><rect x=".8" y=".8" width="9.800" height="9.800" fill="url(#gB)" stroke="#2a3440" stroke-width="1.100"/><rect x="4.400" y="4.400" width="11" height="11" fill="url(#gB)" stroke="#1a2430" stroke-width="1.200"/><path d="M8.200 9.800V7.600c0-2.200 3.600-2.200 3.600-.4" fill="none" stroke="#222" stroke-width="1.100"/><rect x="7" y="9.600" width="6" height="4.400" fill="#8fd06a" stroke="#222" stroke-width=".9"/><rect x="8" y="10.600" width="4" height="1.200" fill="#e8f8d8"/></svg>
<svg class="b" style="left:750.00px;top:110.00px;" width="16" height="16" viewBox="0 0 16 16"><rect x="2.800" y="6.500" width="8" height="6.500" fill="#bcd0e6" stroke="#4a5a6a" stroke-width=".9"/><circle cx="10.500" cy="5.300" r="3.800" fill="#c9d8ea" stroke="#4a5a6a" stroke-width=".9"/><rect x="0.25" y="0.05" width="1.9" height="1.9" fill="#111"/><rect x="13.85" y="0.05" width="1.9" height="1.9" fill="#111"/><rect x="0.25" y="14.05" width="1.9" height="1.9" fill="#111"/><rect x="13.85" y="14.05" width="1.9" height="1.9" fill="#111"/></svg>
<svg class="b" style="left:787.00px;top:110.00px;" width="16" height="16" viewBox="0 0 16 16"><rect x="2.500" y="8.500" width="8" height="5" fill="#f3cf3a" stroke="#4a4a2a" stroke-width=".9"/><circle cx="10.800" cy="5.300" r="3.800" fill="#c9d8ea" stroke="#4a5a6a" stroke-width=".9"/><rect x="5.05" y="0.05" width="1.9" height="1.9" fill="#111"/><rect x="14.25" y="0.05" width="1.9" height="1.9" fill="#111"/><rect x="5.05" y="7.05" width="1.9" height="1.9" fill="#111"/><rect x="14.25" y="7.05" width="1.9" height="1.9" fill="#111"/><rect x="0.15" y="6.65" width="1.7" height="1.7" fill="#111"/><rect x="10.95" y="6.65" width="1.7" height="1.7" fill="#111"/><rect x="0.15" y="14.15" width="1.7" height="1.7" fill="#111"/><rect x="10.95" y="14.15" width="1.7" height="1.7" fill="#111"/><path d="M6 1h9.200v7H6z" fill="none" stroke="#111" stroke-width=".7" stroke-dasharray="1 1.200"/></svg>
<svg class="b" style="left:838.00px;top:110.00px;" width="16" height="16" viewBox="0 0 16 16"><defs><linearGradient id="gFi" x1="0" y1="1" x2="1" y2="0"><stop offset="0" stop-color="#000"/><stop offset=".5" stop-color="#fff"/></linearGradient></defs><path d="M.8.800h14.400L.8 15.200z" fill="#fff"/><path d="M.8 15.200V.8h14.400" fill="none" stroke="#111" stroke-width="1.700"/><path d="M.8 15.500L9.200 6.800l2 2C8.500 12.200 5.200 14.500.8 15.500z" fill="#111"/><path d="M3.500 13.500C6 12 8 10.300 9.800 8.200" stroke="#999" stroke-width=".8" fill="none"/><path d="M8.800 7.200l2.900-3.400 2.200 2-2.900 3.300z" fill="#777" stroke="#222" stroke-width=".6"/><path d="M11.500 4l2.500-2.700 2 1.400-.2 4.300-2.200-.8z" fill="#f0a818"/></svg>
<svg class="b" style="left:875.00px;top:110.00px;" width="16" height="16" viewBox="0 0 16 16"><text x="8" y="15.500" text-anchor="middle" font-family="Liberation Serif" font-weight="bold" font-size="23" fill="#000" stroke="#000" stroke-width=".7">T</text></svg>
<svg class="b" style="left:912.00px;top:110.00px;" width="16" height="16" viewBox="0 0 16 16"><path d="M.6 8.8l11.400-.5 3.800 3.700-11.400.6z" fill="#f6f6f6" stroke="#4a4a4a" stroke-width="1.100" stroke-linejoin="round"/><path d="M.6 5.6l11.400-.5 3.800 3.700-11.400.6z" fill="#f6f6f6" stroke="#4a4a4a" stroke-width="1.100" stroke-linejoin="round"/><path d="M.6 2.4l11.400-.5 3.800 3.700-11.400.6z" fill="#f6f6f6" stroke="#4a4a4a" stroke-width="1.100" stroke-linejoin="round"/></svg>
<svg class="b" style="left:949.00px;top:110.00px;" width="16" height="16" viewBox="0 0 16 16"><rect x=".8" y="1" width="14.400" height="14" fill="#fff" stroke="#111" stroke-width="1.300"/><rect x="1.500" y="1.700" width="13" height="2.600" fill="#9fb9d8"/><path d="M.8 4.600h14.400" stroke="#111" stroke-width="1"/><path d="M6.300 7.300L3.600 9.800l2.700 2.500M9.700 7.300l2.700 2.500-2.700 2.500" fill="none" stroke="#333" stroke-width="1.100"/></svg>
<svg class="b" style="left:986.00px;top:110.00px;" width="16" height="16" viewBox="0 0 16 16"><path d="M1 .5v15" stroke="#d01818" stroke-width="1.400"/><rect x="3" y="1.200" width="5.500" height="3.600" fill="url(#gB)" stroke="#4a5a6a" stroke-width=".8"/><rect x="3" y="6.200" width="12.500" height="3.600" fill="url(#gB)" stroke="#4a5a6a" stroke-width=".8"/><rect x="3" y="11.200" width="9" height="3.600" fill="url(#gB)" stroke="#4a5a6a" stroke-width=".8"/></svg>
<svg class="b" style="left:1036.60px;top:110.00px;" width="16" height="16" viewBox="0 0 16 16"><g opacity=".6"><path d="M2.8 1h7.4l3 3v11h-10.4z" fill="#fafafa" stroke="#999" stroke-width="0.8" stroke-linejoin="round"/><path d="M10.2 1v3h3" fill="none" stroke="#999" stroke-width="0.64"/><path d="M6 9c-1.500-1.500 0-3.800 2-3.300L6.800 7l.4 1.200 1.200.4L9.700 7.300c.6 2-1.500 3.600-3.200 2.300l4.300 4.300-1 1z" fill="#ddd" stroke="#777" stroke-width=".7"/></g></svg>
<svg class="b" style="left:1074.00px;top:110.00px;" width="16" height="16" viewBox="0 0 16 16"><path d="M2 1.200l2.200-.5 7.500 8.800-1.500 1.500z" fill="#c8c8c8" stroke="#777" stroke-width=".6"/><path d="M9.300 9.800l2-2 3.800 3.500c1.200 1.200-.8 3.200-2 2z" fill="#c8c8c8" stroke="#777" stroke-width=".6"/><path d="M14.800 1.600l-2.600 1.500-.2 1.700-4.800 4.800 1 1 4.800-4.800 1.700-.2L16.200 3z" fill="#d0d0d0" stroke="#777" stroke-width=".6"/><path d="M6.600 8.600l1.700 1.700-5 5c-.8.800-2.500-.9-1.700-1.700z" fill="#2a62b8" stroke="#1a3f80" stroke-width=".6"/></svg>
<div class="b" style="left:107.00px;top:144.00px;width:1.00px;height:33.00px;background:#dedbd8"></div>
<div class="b" style="left:269.50px;top:144.00px;width:1.00px;height:33.00px;background:#dedbd8"></div>
<div class="b" style="left:431.00px;top:144.00px;width:1.00px;height:33.00px;background:#dedbd8"></div>
<div class="b" style="left:1220.50px;top:144.00px;width:1.00px;height:33.00px;background:#dedbd8"></div>
<svg class="b" style="left:0.00px;top:152.00px;" width="16" height="16" viewBox="0 0 16 16"><path d="M1.200 1.500c0-.6.400-1 1-1h8.600c.6 0 1 .4 1 1v12c0 .6-.4 1-1 1H2.200c-.6 0-1-.4-1-1z" fill="#e4ebf4" stroke="#b8bcc0" stroke-width=".8"/><path d="M3 3h7M3 5.500h7M3 8h7M3 10.500h7" stroke="#7a9ccc" stroke-width="1.600"/><rect x="3.200" y="11.200" width="4" height="2.400" fill="#8a8a6a" stroke="#555" stroke-width=".5"/><path d="M11 11.500h4.500M11 14.800h4.500M12.200 11.500l2.100 3.300M14.300 11.500l-2.100 3.300" stroke="#111" stroke-width="1.100"/></svg>
<svg class="b" style="left:37.00px;top:152.00px;" width="16" height="16" viewBox="0 0 16 16"><rect x=".8" y=".8" width="14.400" height="14.400" fill="none" stroke="#111" stroke-width="1.300" stroke-dasharray="1.600 1.300"/><path d="M3.200 9.8l7.400-.1 2.600 2.200-8 .2z" fill="#f4f4f4" stroke="#555" stroke-width="1" stroke-linejoin="round"/><path d="M3.200 7l7.400-.1 2.600 2.200-8 .2z" fill="#f4f4f4" stroke="#555" stroke-width="1" stroke-linejoin="round"/><path d="M3.200 4.2l7.400-.1 2.600 2.200-8 .2z" fill="#f4f4f4" stroke="#555" stroke-width="1" stroke-linejoin="round"/></svg>
<svg class="b" style="left:74.00px;top:152.00px;" width="16" height="16" viewBox="0 0 16 16"><rect x=".8" y=".8" width="14.400" height="14.400" fill="none" stroke="#e01010" stroke-width="1.300" stroke-dasharray="1.600 1.300"/><rect x="3" y="7.200" width="8" height="5.800" fill="#f3cf3a" stroke="#333" stroke-width=".9"/><circle cx="9.800" cy="6.200" r="3.600" fill="#c9d8ea" stroke="#4a5a6a" stroke-width=".9"/></svg>
<svg class="b" style="left:125.00px;top:152.00px;" width="16" height="16" viewBox="0 0 16 16"><path d="M14.500 1.600C9 1.600 6 4.500 6 9.200" fill="none" stroke="#b85a08" stroke-width="2.600"/><path d="M14.500 1.600C9 1.600 6 4.500 6 9.200" fill="none" stroke="#f7b86a" stroke-width="1"/><path d="M1.300 8.300h9.400L6 14.300z" fill="#f0983a" stroke="#b85a08" stroke-width=".9" stroke-linejoin="round"/></svg>
<svg class="b" style="left:162.00px;top:152.00px;" width="16" height="16" viewBox="0 0 16 16"><path d="M1.500 1.600C7 1.600 10 4.500 10 9.200" fill="none" stroke="#b85a08" stroke-width="2.600"/><path d="M1.500 1.600C7 1.600 10 4.500 10 9.200" fill="none" stroke="#f7b86a" stroke-width="1"/><path d="M5.300 8.300h9.400L10 14.300z" fill="#f0983a" stroke="#b85a08" stroke-width=".9" stroke-linejoin="round"/></svg>
<svg class="b" style="left:199.00px;top:152.00px;" width="16" height="16" viewBox="0 0 16 16"><path d="M.5 8l4.600-4.200v2.600h5.800V3.800L15.500 8l-4.600 4.200V9.600H5.100v2.600z" fill="#f7b060" stroke="#b85a08" stroke-width="1.100" stroke-linejoin="round"/></svg>
<svg class="b" style="left:236.50px;top:152.00px;" width="16" height="16" viewBox="0 0 16 16"><path d="M8 .3l4.200 4.600H9.600v6.200h2.600L8 15.700l-4.200-4.600h2.600V4.900H3.800z" fill="#f7b060" stroke="#b85a08" stroke-width="1.100" stroke-linejoin="round"/></svg>
<svg class="b" style="left:287.00px;top:152.00px;" width="16" height="16" viewBox="0 0 16 16"><rect x="8.5" y="0.5" width="7" height="1.700" fill="#111"/><rect x="8.5" y="3.3" width="7" height="1.700" fill="#111"/><rect x="8.5" y="6.1" width="7" height="1.700" fill="#111"/><rect x="8.5" y="8.9" width="7" height="1.700" fill="#111"/><path d="M4 0v9.500" stroke="#111" stroke-width="1.200"/><path d="M4 12L1.400 8.300h5.200z" fill="#111"/><rect x=".8" y="12.800" width="14.700" height="2" fill="#f3cf3a" stroke="#6a5a10" stroke-width=".6"/></svg>
<svg class="b" style="left:324.00px;top:152.00px;" width="16" height="16" viewBox="0 0 16 16"><rect x="8.5" y="0.5" width="7" height="1.700" fill="#111"/><rect x="8.5" y="3.3" width="7" height="1.700" fill="#111"/><rect x="8.5" y="6.1" width="7" height="1.700" fill="#111"/><rect x="8.5" y="13.4" width="7" height="1.700" fill="#111"/><path d="M2.500 3.800h5" stroke="#111" stroke-width="1.100"/><path d="M2.300 2.500v3l2 0v2.600M.8 5.300h4.500L3 8.300z" fill="#111" stroke="none"/><rect x=".8" y="9.700" width="14.700" height="2" fill="#f3cf3a" stroke="#6a5a10" stroke-width=".6"/></svg>
<svg class="b" style="left:361.00px;top:152.00px;" width="16" height="16" viewBox="0 0 16 16"><rect x="0.5" y="0.5" width="7" height="1.700" fill="#111"/><rect x="0.5" y="8" width="7" height="1.700" fill="#111"/><rect x="0.5" y="10.8" width="7" height="1.700" fill="#111"/><rect x="0.5" y="13.6" width="7" height="1.700" fill="#111"/><rect x=".8" y="3.900" width="14.700" height="2" fill="url(#gB)" stroke="#3a4a5a" stroke-width=".6"/><path d="M11.500 12h2v-2.500" fill="none" stroke="#111" stroke-width="1.100"/><path d="M13.500 7l2.300 3h-4.600z" fill="#111"/></svg>
<svg class="b" style="left:398.00px;top:152.00px;" width="16" height="16" viewBox="0 0 16 16"><rect x="0.5" y="5" width="7" height="1.700" fill="#111"/><rect x="0.5" y="7.8" width="7" height="1.700" fill="#111"/><rect x="0.5" y="10.6" width="7" height="1.700" fill="#111"/><rect x="0.5" y="13.4" width="7" height="1.700" fill="#111"/><rect x=".8" y=".8" width="14.700" height="2" fill="url(#gB)" stroke="#3a4a5a" stroke-width=".6"/><path d="M12.800 15.500V7" stroke="#111" stroke-width="1.200"/><path d="M12.800 4l2.600 3.700h-5.200z" fill="#111"/></svg>
<svg class="b" style="left:953.00px;top:152.00px;" width="16" height="16" viewBox="0 0 16 16"><path d="M4.200 8V4.600c0-3.400 5.600-3.600 6.600-.6" fill="none" stroke="#222" stroke-width="1.600" stroke-linecap="round"/><rect x="3" y="7.800" width="10.400" height="7.200" rx=".8" fill="url(#gLk)" stroke="#222" stroke-width="1" transform="rotate(-6 8 11)"/><circle cx="8.300" cy="10.600" r="1.100" fill="#222"/><path d="M8.300 10.600v2.200" stroke="#222" stroke-width="1.100"/></svg>
<div class="b" style="left:457.00px;top:143.00px;width:148.00px;height:34.00px;background:#fff;border:1px solid #cdc7c2;border-radius:5px;box-sizing:border-box"></div>
<div class="b" style="left:571.00px;top:144.00px;width:1.00px;height:32.00px;background:#e8e6e3"></div>
<div class="b" style="left:588.00px;top:144.00px;width:1.00px;height:32.00px;background:#e8e6e3"></div>
<div class="b" style="left:574.80px;top:159.30px;width:9.60px;height:1.60px;background:#2e3436"></div>
<div class="b" style="left:592.00px;top:159.30px;width:9.60px;height:1.60px;background:#2e3436"></div>
<div class="b" style="left:596.00px;top:155.30px;width:1.60px;height:9.60px;background:#2e3436"></div>
<span class="t" style="left:441.00px;top:152.80px;font-size:15.00px;line-height:15.00px;color:#2e3436;">X:</span>
<span class="t" style="left:462.00px;top:152.29px;font-size:15.60px;line-height:15.60px;letter-spacing:1.032px;color:#000;">58261,597</span>
<div class="b" style="left:626.00px;top:143.00px;width:148.00px;height:34.00px;background:#fff;border:1px solid #cdc7c2;border-radius:5px;box-sizing:border-box"></div>
<div class="b" style="left:740.00px;top:144.00px;width:1.00px;height:32.00px;background:#e8e6e3"></div>
<div class="b" style="left:757.00px;top:144.00px;width:1.00px;height:32.00px;background:#e8e6e3"></div>
<div class="b" style="left:743.80px;top:159.30px;width:9.60px;height:1.60px;background:#2e3436"></div>
<div class="b" style="left:761.00px;top:159.30px;width:9.60px;height:1.60px;background:#2e3436"></div>
<div class="b" style="left:765.00px;top:155.30px;width:1.60px;height:9.60px;background:#2e3436"></div>
<span class="t" style="left:611.00px;top:152.80px;font-size:15.00px;line-height:15.00px;color:#2e3436;">Y:</span>
<span class="t" style="left:631.00px;top:152.29px;font-size:15.60px;line-height:15.60px;letter-spacing:0.930px;color:#000;">-923,026</span>
<div class="b" style="left:796.00px;top:143.00px;width:143.00px;height:34.00px;background:#fff;border:1px solid #cdc7c2;border-radius:5px;box-sizing:border-box"></div>
<div class="b" style="left:905.00px;top:144.00px;width:1.00px;height:32.00px;background:#e8e6e3"></div>
<div class="b" style="left:922.00px;top:144.00px;width:1.00px;height:32.00px;background:#e8e6e3"></div>
<div class="b" style="left:908.80px;top:159.30px;width:9.60px;height:1.60px;background:#2e3436"></div>
<div class="b" style="left:926.00px;top:159.30px;width:9.60px;height:1.60px;background:#2e3436"></div>
<div class="b" style="left:930.00px;top:155.30px;width:1.60px;height:9.60px;background:#2e3436"></div>
<span class="t" style="left:781.00px;top:152.80px;font-size:15.00px;line-height:15.00px;color:#2e3436;">B:</span>
<span class="t" style="left:801.00px;top:152.29px;font-size:15.60px;line-height:15.60px;letter-spacing:0.947px;color:#000;">512,096</span>
<div class="b" style="left:999.00px;top:143.00px;width:143.00px;height:34.00px;background:#fff;border:1px solid #cdc7c2;border-radius:5px;box-sizing:border-box"></div>
<div class="b" style="left:1108.00px;top:144.00px;width:1.00px;height:32.00px;background:#e8e6e3"></div>
<div class="b" style="left:1125.00px;top:144.00px;width:1.00px;height:32.00px;background:#e8e6e3"></div>
<div class="b" style="left:1111.80px;top:159.30px;width:9.60px;height:1.60px;background:#2e3436"></div>
<div class="b" style="left:1129.00px;top:159.30px;width:9.60px;height:1.60px;background:#2e3436"></div>
<div class="b" style="left:1133.00px;top:155.30px;width:1.60px;height:9.60px;background:#2e3436"></div>
<span class="t" style="left:983.00px;top:152.80px;font-size:15.00px;line-height:15.00px;color:#2e3436;">H:</span>
<span class="t" style="left:1004.00px;top:152.29px;font-size:15.60px;line-height:15.60px;letter-spacing:0.947px;color:#000;">295,158</span>
<div class="b" style="left:1147.00px;top:143.00px;width:66.00px;height:34.00px;background:linear-gradient(#f7f6f5,#edebe9);border:1px solid #cdc7c2;border-radius:5px;box-sizing:border-box"></div>
<span class="t" style="left:1159.00px;top:152.80px;font-size:15.00px;line-height:15.00px;letter-spacing:0.079px;color:#2e3436;">px</span>
<svg class="b" style="left:1188.00px;top:157.00px;" width="12" height="8" viewBox="0 0 12 8"><path d="M1 1.5h10l-5 5.5z" fill="#2e3436"/></svg>
<div class="b" style="left:1228.00px;top:143.00px;width:36.00px;height:34.00px;background:#d6d1cc;border-radius:5px"></div>
<svg class="b" style="left:1238.00px;top:152.00px;" width="16" height="16" viewBox="0 0 16 16"><path d="M0 1.100h16M14.700 0v7.600" stroke="#000" stroke-width="2.400" fill="none"/><path d="M0 6h10v3.200" stroke="#000" stroke-width="1.300" fill="none"/><path d="M2.600 12.600h9" stroke="#000" stroke-width="1.300" stroke-dasharray="1.700 1.200"/><path d="M15.800 12.600L11.800 10v5.200z" fill="#000"/></svg>
<div class="b" style="left:1265.00px;top:143.00px;width:36.00px;height:34.00px;background:#d6d1cc;border-radius:5px"></div>
<svg class="b" style="left:1275.00px;top:152.00px;" width="16" height="16" viewBox="0 0 16 16"><path d="M0 .8h9c4.500 0 6.300 3 6.300 6.800" stroke="#000" stroke-width="1.300" fill="none"/><path d="M0 4.800h6.500c3 0 4 2 4 4.500" stroke="#000" stroke-width="1.200" fill="none"/><path d="M2.600 12.600h9" stroke="#000" stroke-width="1.300" stroke-dasharray="1.700 1.200"/><path d="M15.800 12.600L11.800 10v5.200z" fill="#000"/></svg>
<div class="b" style="left:1302.00px;top:143.00px;width:36.00px;height:34.00px;background:#d6d1cc;border-radius:5px"></div>
<svg class="b" style="left:1312.00px;top:152.00px;" width="16" height="16" viewBox="0 0 16 16"><rect x="0" y="1" width="15" height="8" fill="url(#gB)"/><path d="M0 1.100h16M14.700 0v7.600" stroke="#000" stroke-width="2.400" fill="none"/><path d="M0 5.500h10.300v3.800" stroke="#000" stroke-width="1.300" fill="none"/><path d="M2.600 12.600h9" stroke="#000" stroke-width="1.300" stroke-dasharray="1.700 1.200"/><path d="M15.800 12.600L11.800 10v5.200z" fill="#000"/></svg>
<div class="b" style="left:1339.00px;top:143.00px;width:36.00px;height:34.00px;background:#d6d1cc;border-radius:5px"></div>
<svg class="b" style="left:1349.00px;top:152.00px;" width="16" height="16" viewBox="0 0 16 16"><path d="M0 1h16M14.900 0v7.600" stroke="#000" stroke-width="2.200" fill="none"/><path d="M2.9 1.8l2.9 2.9l-2.9 2.9l-2.9 -2.9z" fill="#000" stroke="#000" stroke-width="0"/><path d="M8 1.8l2.9 2.9l-2.9 2.9l-2.9 -2.9z" fill="#000" stroke="#000" stroke-width="0"/><path d="M13.1 1.8l2.9 2.9l-2.9 2.9l-2.9 -2.9z" fill="#000" stroke="#000" stroke-width="0"/><path d="M0 7.200h3M13 7.200h3" stroke="#000" stroke-width="1"/><path d="M2.600 12.600h9" stroke="#000" stroke-width="1.300" stroke-dasharray="1.700 1.200"/><path d="M15.800 12.600L11.800 10v5.200z" fill="#000"/></svg>
<div class="b" style="left:-5.00px;top:184.70px;width:38.00px;height:33.00px;background:#d6d1cc;border-radius:5px"></div>
<div class="b" style="left:0.00px;top:259.00px;width:32.00px;height:1.00px;background:#dedbd8"></div>
<div class="b" style="left:0.00px;top:443.00px;width:32.00px;height:1.00px;background:#dedbd8"></div>
<div class="b" style="left:0.00px;top:593.50px;width:32.00px;height:1.00px;background:#dedbd8"></div>
<div class="b" style="left:0.00px;top:743.00px;width:32.00px;height:1.00px;background:#dedbd8"></div>
<div class="b" style="left:0.00px;top:893.00px;width:32.00px;height:1.00px;background:#dedbd8"></div>
<svg class="b" style="left:-1.00px;top:190.00px;" width="24" height="24" viewBox="0 0 24 24"><path d="M6.200 2.500v14.800l3.500-3.200 2.600 5.800 2.600-1.200-2.600-5.600 4.800-.3z" fill="#000" stroke="#000" stroke-width=".8" stroke-linejoin="round"/></svg>
<svg class="b" style="left:-1.00px;top:224.00px;" width="24" height="24" viewBox="0 0 24 24"><path d="M2.700 19C2.700 10 7 2.500 21 1.800" fill="none" stroke="#777" stroke-width="1"/><rect x="3.600" y="2.700" width="5.600" height="5.600" fill="#2828ff" stroke="#1010d0" stroke-width="1"/><rect x="19.300" y="-.3" width="3.800" height="3.800" fill="#c8c8ff" stroke="#3030ff" stroke-width="1"/><rect x=".8" y="18.600" width="3.800" height="3.800" fill="#c8c8ff" stroke="#3030ff" stroke-width="1"/><path d="M8.800 8.300l12.200 7.900-5.200 4.600z" fill="#000"/></svg>
<svg class="b" style="left:-1.00px;top:271.00px;" width="24" height="24" viewBox="0 0 24 24"><rect x="2.400" y="2.600" width="19.200" height="18.800" fill="url(#gB)" stroke="#000" stroke-width="1.500"/></svg>
<svg class="b" style="left:-1.00px;top:305.00px;" width="24" height="24" viewBox="0 0 24 24"><circle cx="12" cy="12" r="9.400" fill="url(#gP)" stroke="#000" stroke-width="1.400"/></svg>
<svg class="b" style="left:-1.00px;top:339.00px;" width="24" height="24" viewBox="0 0 24 24"><path d="M2.500 8.500l6.800-4.800 6.800 3.800-1.500 8.500H4.500z" fill="url(#gY)" stroke="#333" stroke-width="1.100" stroke-linejoin="round"/><path d="M15 7.800l2.100 5 5.400.5-4.100 3.500 1.300 5.300-4.700-2.800-4.700 2.800 1.300-5.300-4.100-3.500 5.400-.5z" fill="url(#gY)" stroke="#333" stroke-width="1.100" stroke-linejoin="round"/></svg>
<svg class="b" style="left:-1.00px;top:373.00px;" width="24" height="24" viewBox="0 0 24 24"><path d="M12 1.800l9.200 4.600v11L12 22.200 2.800 17.400v-11z" fill="url(#gBx)" stroke="#333" stroke-width="1.200" stroke-linejoin="round"/><path d="M12 1.800l9.200 4.600v11L14 13z" fill="#dcdcf4"/><path d="M2.800 17.400L14 13l7.200 4.400L12 22.200z" fill="#3a3a88"/><path d="M12 1.800L14 13M14 13l7.200 4.400M14 13L2.800 17.400" stroke="#8a8ac0" stroke-width=".6" fill="none"/></svg>
<svg class="b" style="left:-1.00px;top:407.00px;" width="24" height="24" viewBox="0 0 24 24"><path d="M11.8 11.6 L12.0 11.5 L12.2 11.4 L12.4 11.4 L12.7 11.4 L13.0 11.4 L13.3 11.5 L13.6 11.7 L13.8 11.9 L14.1 12.2 L14.2 12.5 L14.3 12.9 L14.4 13.3 L14.4 13.7 L14.3 14.2 L14.1 14.6 L13.9 15.0 L13.5 15.3 L13.1 15.7 L12.7 15.9 L12.2 16.1 L11.6 16.2 L11.0 16.2 L10.5 16.1 L9.9 15.9 L9.4 15.5 L8.9 15.1 L8.4 14.6 L8.1 14.1 L7.8 13.4 L7.7 12.7 L7.6 12.0 L7.7 11.3 L7.9 10.5 L8.3 9.8 L8.8 9.2 L9.3 8.6 L10.0 8.1 L10.8 7.8 L11.6 7.5 L12.5 7.4 L13.4 7.5 L14.3 7.7 L15.1 8.0 L15.9 8.5 L16.6 9.2 L17.3 9.9 L17.8 10.8 L18.1 11.7 L18.3 12.8 L18.3 13.8 L18.2 14.9 L17.9 15.9 L17.4 16.9 L16.7 17.8 L15.9 18.6 L14.9 19.2 L13.9 19.7 L12.7 20.0 L11.5 20.1 L10.3 20.1 L9.1 19.8 L8.0 19.3 L6.9 18.7 L5.9 17.8 L5.1 16.8 L4.4 15.6 L4.0 14.4 L3.7 13.1 L3.7 11.7 L3.9 10.3 L4.3 9.0 L4.9 7.7 L5.8 6.5 L6.8 5.5 L8.0 4.7 L9.4 4.0 L10.8 3.6 L12.4 3.5 L13.9 3.5 L15.4 3.9 L16.9 4.5 L18.3 5.3 L19.5 6.4 L20.5 7.6 L21.3 9.0 L21.9 10.6 L22.3 12.2 L22.3 13.9 L22.1 15.6 L21.6 17.3" fill="none" stroke="#222" stroke-width="1.500" stroke-linecap="round" stroke-linejoin="round"/></svg>
<svg class="b" style="left:-1.00px;top:455.00px;" width="24" height="24" viewBox="0 0 24 24"><path d="M2 3.500h9c-1 6-1.500 10.500 1.500 13.500" fill="none" stroke="#222" stroke-width="1"/><path d="M2 3.500c2 5 3.500 9 3.800 13.500" fill="none" stroke="#222" stroke-width="1"/><rect x=".5" y="17" width="4" height="3.200" fill="#fff" stroke="#222" stroke-width=".9"/><rect x="10.500" y="17.500" width="2.400" height="2.400" fill="#fff" stroke="#222" stroke-width=".8"/><path d="M14.500 12.500l4-9.500 4 1.800-2.800 9.500z" fill="#7ab0dc" stroke="#2a4a6a" stroke-width=".8"/><path d="M14.200 12.800l5.300 1.500-1 2.200-4.600-.8z" fill="#e8b820"/><path d="M13.900 15.500l4 .9-5 3.500z" fill="#333"/></svg>
<svg class="b" style="left:-1.00px;top:489.00px;" width="24" height="24" viewBox="0 0 24 24"><path d="M.5 8c3-3.500 5.500-2 4 1.500-1 2.500-1.500 4 .5 4 1.500 0 2-1 3.500-1 .5 5 3 9 11 5.500" fill="none" stroke="#222" stroke-width="1.100"/><path d="M11 19.500l1.500-7 6.500-9 3.500 2.500-6.500 9z" fill="#f5b820" stroke="#333" stroke-width=".9" stroke-linejoin="round"/><path d="M11 19.500l1.500-7 3.500 2.500z" fill="#f4e8d0" stroke="#333" stroke-width=".8"/><path d="M15 8l4-5 1.200 1-4 5.500z" fill="#fff2a0"/></svg>
<svg class="b" style="left:-1.00px;top:523.00px;" width="24" height="24" viewBox="0 0 24 24"><path d="M1.500 2.500c4 1.500 6 5 5 9.500-.6 3.200.8 5.800 4 6.200 2.200.3 5-.2 7.500-1.800-2.500 3.300-7 4.600-10.500 3.200C3.500 18 2.300 14.500 3.500 11 4.500 7.500 4 4.500 1.500 2.500z" fill="#111"/><path d="M11.500 18l.3-6.500 4-4.500 4 3.300-3 5z" fill="#f0d060" stroke="#222" stroke-width=".9" stroke-linejoin="round"/><path d="M11.500 18l3-4.500" stroke="#222" stroke-width=".8"/><path d="M15.500 7l2-3.500 4.500 2.200-1.500 4z" fill="#4a7ab0" stroke="#222" stroke-width=".8"/><path d="M16 6.200l4.800 3" stroke="#d01818" stroke-width="1.400"/></svg>
<svg class="b" style="left:-1.00px;top:557.00px;" width="24" height="24" viewBox="0 0 24 24"><text x="-1.500" y="21" font-family="Liberation Sans" font-weight="bold" font-size="26" fill="#111" textLength="20" lengthAdjust="spacingAndGlyphs">A</text><path d="M21.500 3v18.500M20 3h3M20 21.500h3" stroke="#333" stroke-width=".8" fill="none"/></svg>
<svg class="b" style="left:-1.00px;top:604.00px;" width="24" height="24" viewBox="0 0 24 24"><path d="M1 2.500l21-1-1 19.500-20 1z" fill="url(#gGr)"/><path d="M1 22L22 1.500 21 21z" fill="#5ab06a" opacity=".55"/><path d="M6.500 6.500l11.500 10.500" stroke="#222" stroke-width="1.500"/><rect x="3.800" y="4" width="4.400" height="4.400" fill="#fff" stroke="#222" stroke-width="1.100"/><rect x="16" y="15" width="4.400" height="4.400" fill="#fff" stroke="#222" stroke-width="1.100"/></svg>
<svg class="b" style="left:-1.00px;top:638.00px;" width="24" height="24" viewBox="0 0 24 24"><path d="M4 4.500c5 2 10 1.500 15.500 0-1.500 5-1.500 10 0 15-5-1.500-10-2-15.500 0 2-5 2-10 0-15z" fill="#5a9e98" stroke="#2a5a58" stroke-width=".8"/><path d="M4 4.500c5 2 10 1.500 15.500 0-4 3-9 8-15.500 15z" fill="#7ab8c0" opacity=".6"/><rect x="2" y="2.5" width="4" height="4" fill="#fff" stroke="#111" stroke-width="1.100"/><rect x="17.5" y="2.5" width="4" height="4" fill="#fff" stroke="#111" stroke-width="1.100"/><rect x="2" y="17.5" width="4" height="4" fill="#fff" stroke="#111" stroke-width="1.100"/><rect x="17.5" y="17.5" width="4" height="4" fill="#fff" stroke="#111" stroke-width="1.100"/></svg>
<svg class="b" style="left:-1.00px;top:673.00px;" width="24" height="24" viewBox="0 0 24 24"><path d="M3.800 20.500c-.8-1.500.8-3 1.500-4l8-8.500 2.500 2.500-8.500 8c-1 .8-2 1.800-3.500 2z" fill="#c8dcf0" stroke="#333" stroke-width=".9"/><path d="M5 19c1-3 5-6 7-8.500l1.500 1.500C11 14 8 18 5 19z" fill="#5a8ac0"/><path d="M12.500 7l1.800-1.500c.5-2.500 3-4.500 5.500-3.200 2.400 1.400 1.200 4.500-1 5.700l-1.500 1.800 1 1-1.500 1.500-5.800-5.800z" fill="#111"/><path d="M3.200 21.500c0 1.300-1.800 1.300-1.800 0 0-.8.900-2 .9-2s.9 1.200.9 2z" fill="#5a8ac0" stroke="#2a4a7a" stroke-width=".5"/></svg>
<svg class="b" style="left:-1.00px;top:707.00px;" width="24" height="24" viewBox="0 0 24 24"><ellipse cx="9" cy="20.500" rx="8.500" ry="2.300" fill="#7ac88a" stroke="#1a6a2a" stroke-width=".9"/><path d="M4 13.500c0 2.500.5 5 1.500 7h3.500c-1-2-1.200-4-1-7z" fill="#5ab06a" stroke="#1a6a2a" stroke-width=".7"/><path d="M3.500 8.500l12.500-5.500 5.500 11-12 5.500z" fill="#5a9ac8" stroke="#1a2a3a" stroke-width="1" stroke-linejoin="round"/><path d="M11 5.200l5-2.200 5.500 11-4.500 2z" fill="#9ac0e0"/><ellipse cx="9.700" cy="5.800" rx="6.800" ry="2.600" transform="rotate(-24 9.700 5.800)" fill="#3a6a98" stroke="#1a2a3a" stroke-width=".9"/><path d="M7 1.500c-1 3-.5 7 1 10" fill="none" stroke="#222" stroke-width="1"/></svg>
<svg class="b" style="left:-1.00px;top:755.00px;" width="24" height="24" viewBox="0 0 24 24"><defs><linearGradient id="gTw" x1="0" y1="0" x2="0" y2="1"><stop offset="0" stop-color="#2a2a2a"/><stop offset=".45" stop-color="#8a8a8a"/><stop offset="1" stop-color="#a8a8a8"/></linearGradient></defs><path d="M0 13.500h4c1.800 0 2.800-3 4-6.800C9.500 3 11.500 1.200 13.700 1.200c3.200 0 5.800 2.400 5.800 5 0 1.300-1.200 1.700-1.900 1.300-.9-.9-1.200-1.800-2.500-1.800-1.800 0-3.200 1.500-3.100 3.600.1 2.200 1.800 4 4.400 4.200h5.300V23.800H0z" fill="url(#gTw)"/><path d="M0 13.500h4c1.800 0 2.800-3 4-6.800C9.500 3 11.500 1.200 13.700 1.200c3.200 0 5.800 2.400 5.800 5 0 1.300-1.200 1.700-1.900 1.300-.9-.9-1.200-1.800-2.500-1.800-1.800 0-3.200 1.500-3.100 3.600.1 2.200 1.800 4 4.400 4.200h5.300" fill="none" stroke="#1a1a1a" stroke-width="1.100"/><path d="M.5 14.200h3.800c2.300-.3 3.300-3.300 4.500-7 1.300-3.300 3-4.800 4.900-4.800 2.600 0 4.600 1.800 4.900 3.700" fill="none" stroke="#f5f4f2" stroke-width=".7" opacity=".8" transform="translate(.6,.9)"/></svg>
<svg class="b" style="left:-1.00px;top:789.00px;" width="24" height="24" viewBox="0 0 24 24"><path d="M11 10.500l8-1.500 2.500 10-8.500 2.500z" fill="#5ab030" stroke="#1a4a10" stroke-width=".9" stroke-linejoin="round"/><path d="M13.500 10l2.500 11" stroke="#8ad860" stroke-width="1.800"/><path d="M12 8.500l5.500-1.500.8 2.500-5.500 1.500z" fill="#222"/><path d="M13 6.500l3-1 .6 2-3 1z" fill="#f0b830" stroke="#333" stroke-width=".6"/><circle cx="2" cy="3" r="1" fill="#111"/><circle cx="5" cy="2.5" r="0.9" fill="#111"/><circle cx="8" cy="4" r="0.9" fill="#111"/><circle cx="2.5" cy="6.5" r="0.9" fill="#111"/><circle cx="5.5" cy="6" r="1" fill="#111"/><circle cx="9" cy="7.5" r="1" fill="#111"/><circle cx="3.5" cy="10" r="1.2" fill="#111"/><circle cx="7" cy="9.5" r="0.8" fill="#111"/></svg>
<svg class="b" style="left:-1.00px;top:823.00px;" width="24" height="24" viewBox="0 0 24 24"><path d="M12.500 1.500l9 4.500-9 16.500-9.500-4.500z" fill="url(#gEr)" stroke="#111" stroke-width="1.100" stroke-linejoin="round" /><path d="M0 22.500h7M15.500 22.500h6.500" stroke="#333" stroke-width="1"/></svg>
<svg class="b" style="left:-1.00px;top:857.00px;" width="24" height="24" viewBox="0 0 24 24"><path d="M9 5.500h5.500c2 0 3 1 3 3V17M5.500 9v8" fill="none" stroke="#111" stroke-width="1.200"/><rect x="4" y="1.500" width="7.500" height="6" fill="#a8c8e8" stroke="#111" stroke-width="1"/><rect x="7.500" y="10" width="7" height="4.500" fill="#f0d030" stroke="#111" stroke-width="1"/><rect x="-.5" y="16.500" width="7.500" height="6" fill="#a8c8e8" stroke="#111" stroke-width="1"/><rect x="13.500" y="16.500" width="7.500" height="6" fill="#a8c8e8" stroke="#111" stroke-width="1"/></svg>
<svg class="b" style="left:8.00px;top:924.00px;" width="6" height="10" viewBox="0 0 6 10"><path d="M0.5 0.5l5 4.5-5 4.5z" fill="#2e3436"/></svg>
<div class="b" style="left:57.00px;top:200.00px;width:982.00px;height:732.00px;background:#fff"></div>
<div class="b" style="left:0;top:0;width:1058px;height:932px;overflow:hidden"><svg class="b" style="left:0.00px;top:0.00px;" width="1590" height="1024" viewBox="0 0 1590 1024"><path d="M57.5 193.2V198M67.5 193.2V198M77.5 193.2V198M87.5 181V198M97.5 193.2V198M107.5 193.2V198M117.5 193.2V198M127.5 193.2V198M137.5 189V198M146.5 193.2V198M156.5 193.2V198M166.5 193.2V198M176.5 193.2V198M186.5 181V198M196.5 193.2V198M206.5 193.2V198M216.5 193.2V198M226.5 193.2V198M236.5 189V198M245.5 193.2V198M255.5 193.2V198M265.5 193.2V198M275.5 193.2V198M285.5 181V198M295.5 193.2V198M305.5 193.2V198M315.5 193.2V198M325.5 193.2V198M335.5 189V198M344.5 193.2V198M354.5 193.2V198M364.5 193.2V198M374.5 193.2V198M384.5 181V198M394.5 193.2V198M404.5 193.2V198M414.5 193.2V198M424.5 193.2V198M434.5 189V198M443.5 193.2V198M453.5 193.2V198M463.5 193.2V198M473.5 193.2V198M483.5 181V198M493.5 193.2V198M503.5 193.2V198M513.5 193.2V198M523.5 193.2V198M533.5 189V198M542.5 193.2V198M552.5 193.2V198M562.5 193.2V198M572.5 193.2V198M582.5 181V198M592.5 193.2V198M602.5 193.2V198M612.5 193.2V198M622.5 193.2V198M631.5 189V198M641.5 193.2V198M651.5 193.2V198M661.5 193.2V198M671.5 193.2V198M681.5 181V198M691.5 193.2V198M701.5 193.2V198M711.5 193.2V198M721.5 193.2V198M730.5 189V198M740.5 193.2V198M750.5 193.2V198M760.5 193.2V198M770.5 193.2V198M780.5 181V198M790.5 193.2V198M800.5 193.2V198M810.5 193.2V198M820.5 193.2V198M829.5 189V198M839.5 193.2V198M849.5 193.2V198M859.5 193.2V198M869.5 193.2V198M879.5 181V198M889.5 193.2V198M899.5 193.2V198M909.5 193.2V198M919.5 193.2V198M928.5 189V198M938.5 193.2V198M948.5 193.2V198M958.5 193.2V198M968.5 193.2V198M978.5 181V198M988.5 193.2V198M998.5 193.2V198M1008.5 193.2V198M1018.5 193.2V198M1027.5 189V198" stroke="#2e3436" stroke-width="1.15" fill="none"/><rect x="56" y="197.700" width="983" height="1.300" fill="#2e3436"/><rect x="38" y="198.900" width="18" height="1.100" fill="#2e3436"/><path d="M50.2 209.5H56M50.2 218.5H56M50.2 228.5H56M50.2 238.5H56M46.5 248.5H56M50.2 258.5H56M50.2 268.5H56M50.2 278.5H56M50.2 288.5H56M38 298.5H56M50.2 308.5H56M50.2 317.5H56M50.2 327.5H56M50.2 337.5H56M46.5 347.5H56M50.2 357.5H56M50.2 367.5H56M50.2 377.5H56M50.2 387.5H56M38 397.5H56M50.2 407.5H56M50.2 416.5H56M50.2 426.5H56M50.2 436.5H56M46.5 446.5H56M50.2 456.5H56M50.2 466.5H56M50.2 476.5H56M50.2 486.5H56M38 496.5H56M50.2 506.5H56M50.2 515.5H56M50.2 525.5H56M50.2 535.5H56M46.5 545.5H56M50.2 555.5H56M50.2 565.5H56M50.2 575.5H56M50.2 585.5H56M38 595.5H56M50.2 605.5H56M50.2 614.5H56M50.2 624.5H56M50.2 634.5H56M46.5 644.5H56M50.2 654.5H56M50.2 664.5H56M50.2 674.5H56M50.2 684.5H56M38 694.5H56M50.2 703.5H56M50.2 713.5H56M50.2 723.5H56M50.2 733.5H56M46.5 743.5H56M50.2 753.5H56M50.2 763.5H56M50.2 773.5H56M50.2 783.5H56M38 793.5H56M50.2 802.5H56M50.2 812.5H56M50.2 822.5H56M50.2 832.5H56M46.5 842.5H56M50.2 852.5H56M50.2 862.5H56M50.2 872.5H56M50.2 882.5H56M38 892.5H56M50.2 901.5H56M50.2 911.5H56M50.2 921.5H56" stroke="#2e3436" stroke-width="1.15" fill="none"/><rect x="55.100" y="198" width="1.200" height="734" fill="#2e3436"/><path d="M949.500 193.300h8l-4 4.500z" fill="#111"/><path d="M50.500 923.500v8l5-4z" fill="#111"/></svg><span class="t" style="left:90.90px;top:182.98px;font-size:11.60px;line-height:11.60px;color:#33383a;transform:scaleX(0.9057);transform-origin:0 0;">58000</span><span class="t" style="left:189.88px;top:182.98px;font-size:11.60px;line-height:11.60px;color:#33383a;transform:scaleX(0.9057);transform-origin:0 0;">58100</span><span class="t" style="left:288.86px;top:182.98px;font-size:11.60px;line-height:11.60px;color:#33383a;transform:scaleX(0.9057);transform-origin:0 0;">58200</span><span class="t" style="left:387.84px;top:182.98px;font-size:11.60px;line-height:11.60px;color:#33383a;transform:scaleX(0.9057);transform-origin:0 0;">58300</span><span class="t" style="left:486.82px;top:182.98px;font-size:11.60px;line-height:11.60px;color:#33383a;transform:scaleX(0.9057);transform-origin:0 0;">58400</span><span class="t" style="left:585.80px;top:182.98px;font-size:11.60px;line-height:11.60px;color:#33383a;transform:scaleX(0.9057);transform-origin:0 0;">58500</span><span class="t" style="left:684.78px;top:182.98px;font-size:11.60px;line-height:11.60px;color:#33383a;transform:scaleX(0.9057);transform-origin:0 0;">58600</span><span class="t" style="left:783.76px;top:182.98px;font-size:11.60px;line-height:11.60px;color:#33383a;transform:scaleX(0.9057);transform-origin:0 0;">58700</span><span class="t" style="left:882.74px;top:182.98px;font-size:11.60px;line-height:11.60px;color:#33383a;transform:scaleX(0.9057);transform-origin:0 0;">58800</span><span class="t" style="left:981.72px;top:182.98px;font-size:11.60px;line-height:11.60px;color:#33383a;transform:scaleX(0.9057);transform-origin:0 0;">58900</span><div class="b" style="left:45.00px;top:207.20px;width:3.00px;height:1.10px;background:#33383a"></div><span class="t" style="left:43.20px;top:211.18px;font-size:11.60px;line-height:11.60px;color:#33383a;transform:scaleX(0.9000);transform-origin:0 0;">1</span><span class="t" style="left:43.20px;top:221.48px;font-size:11.60px;line-height:11.60px;color:#33383a;transform:scaleX(0.9000);transform-origin:0 0;">1</span><span class="t" style="left:43.20px;top:231.78px;font-size:11.60px;line-height:11.60px;color:#33383a;transform:scaleX(0.9000);transform-origin:0 0;">0</span><span class="t" style="left:43.20px;top:242.08px;font-size:11.60px;line-height:11.60px;color:#33383a;transform:scaleX(0.9000);transform-origin:0 0;">0</span><div class="b" style="left:45.00px;top:306.18px;width:3.00px;height:1.10px;background:#33383a"></div><span class="t" style="left:43.20px;top:310.16px;font-size:11.60px;line-height:11.60px;color:#33383a;transform:scaleX(0.9000);transform-origin:0 0;">1</span><span class="t" style="left:43.20px;top:320.46px;font-size:11.60px;line-height:11.60px;color:#33383a;transform:scaleX(0.9000);transform-origin:0 0;">0</span><span class="t" style="left:43.20px;top:330.76px;font-size:11.60px;line-height:11.60px;color:#33383a;transform:scaleX(0.9000);transform-origin:0 0;">0</span><span class="t" style="left:43.20px;top:341.06px;font-size:11.60px;line-height:11.60px;color:#33383a;transform:scaleX(0.9000);transform-origin:0 0;">0</span><div class="b" style="left:45.00px;top:405.16px;width:3.00px;height:1.10px;background:#33383a"></div><span class="t" style="left:43.20px;top:409.14px;font-size:11.60px;line-height:11.60px;color:#33383a;transform:scaleX(0.9000);transform-origin:0 0;">9</span><span class="t" style="left:43.20px;top:419.44px;font-size:11.60px;line-height:11.60px;color:#33383a;transform:scaleX(0.9000);transform-origin:0 0;">0</span><span class="t" style="left:43.20px;top:429.74px;font-size:11.60px;line-height:11.60px;color:#33383a;transform:scaleX(0.9000);transform-origin:0 0;">0</span><div class="b" style="left:45.00px;top:504.14px;width:3.00px;height:1.10px;background:#33383a"></div><span class="t" style="left:43.20px;top:508.12px;font-size:11.60px;line-height:11.60px;color:#33383a;transform:scaleX(0.9000);transform-origin:0 0;">8</span><span class="t" style="left:43.20px;top:518.42px;font-size:11.60px;line-height:11.60px;color:#33383a;transform:scaleX(0.9000);transform-origin:0 0;">0</span><span class="t" style="left:43.20px;top:528.72px;font-size:11.60px;line-height:11.60px;color:#33383a;transform:scaleX(0.9000);transform-origin:0 0;">0</span><div class="b" style="left:45.00px;top:603.12px;width:3.00px;height:1.10px;background:#33383a"></div><span class="t" style="left:43.20px;top:607.10px;font-size:11.60px;line-height:11.60px;color:#33383a;transform:scaleX(0.9000);transform-origin:0 0;">7</span><span class="t" style="left:43.20px;top:617.40px;font-size:11.60px;line-height:11.60px;color:#33383a;transform:scaleX(0.9000);transform-origin:0 0;">0</span><span class="t" style="left:43.20px;top:627.70px;font-size:11.60px;line-height:11.60px;color:#33383a;transform:scaleX(0.9000);transform-origin:0 0;">0</span><div class="b" style="left:45.00px;top:702.10px;width:3.00px;height:1.10px;background:#33383a"></div><span class="t" style="left:43.20px;top:706.08px;font-size:11.60px;line-height:11.60px;color:#33383a;transform:scaleX(0.9000);transform-origin:0 0;">6</span><span class="t" style="left:43.20px;top:716.38px;font-size:11.60px;line-height:11.60px;color:#33383a;transform:scaleX(0.9000);transform-origin:0 0;">0</span><span class="t" style="left:43.20px;top:726.68px;font-size:11.60px;line-height:11.60px;color:#33383a;transform:scaleX(0.9000);transform-origin:0 0;">0</span><div class="b" style="left:45.00px;top:801.08px;width:3.00px;height:1.10px;background:#33383a"></div><span class="t" style="left:43.20px;top:805.06px;font-size:11.60px;line-height:11.60px;color:#33383a;transform:scaleX(0.9000);transform-origin:0 0;">5</span><span class="t" style="left:43.20px;top:815.36px;font-size:11.60px;line-height:11.60px;color:#33383a;transform:scaleX(0.9000);transform-origin:0 0;">0</span><span class="t" style="left:43.20px;top:825.66px;font-size:11.60px;line-height:11.60px;color:#33383a;transform:scaleX(0.9000);transform-origin:0 0;">0</span><div class="b" style="left:45.00px;top:900.06px;width:3.00px;height:1.10px;background:#33383a"></div><span class="t" style="left:43.20px;top:904.04px;font-size:11.60px;line-height:11.60px;color:#33383a;transform:scaleX(0.9000);transform-origin:0 0;">4</span><span class="t" style="left:43.20px;top:914.34px;font-size:11.60px;line-height:11.60px;color:#33383a;transform:scaleX(0.9000);transform-origin:0 0;">0</span><span class="t" style="left:43.20px;top:924.64px;font-size:11.60px;line-height:11.60px;color:#33383a;transform:scaleX(0.9000);transform-origin:0 0;">0</span></div>
<svg class="b" style="left:0.00px;top:0.00px;" width="1060" height="940" viewBox="0 0 1060 940"><defs><linearGradient id="L0" gradientUnits="userSpaceOnUse" x1="497.5" y1="643.7" x2="678.6" y2="397.7"><stop offset="0.000" stop-color="rgb(226,72,42)"/><stop offset="0.100" stop-color="rgb(226,72,42)"/><stop offset="0.200" stop-color="rgb(226,72,42)"/><stop offset="0.300" stop-color="rgb(226,72,42)"/><stop offset="0.400" stop-color="rgb(226,72,42)"/><stop offset="0.500" stop-color="rgb(226,72,42)"/><stop offset="0.600" stop-color="rgb(226,72,42)"/><stop offset="0.700" stop-color="rgb(226,72,42)"/><stop offset="0.800" stop-color="rgb(226,72,42)"/><stop offset="0.900" stop-color="rgb(226,72,42)"/><stop offset="1.000" stop-color="rgb(226,72,42)"/></linearGradient><linearGradient id="L1" gradientUnits="userSpaceOnUse" x1="489.3" y1="649.2" x2="671.8" y2="402.8"><stop offset="0.000" stop-color="rgb(226,72,42)"/><stop offset="0.100" stop-color="rgb(226,72,42)"/><stop offset="0.200" stop-color="rgb(226,72,42)"/><stop offset="0.300" stop-color="rgb(226,72,42)"/><stop offset="0.400" stop-color="rgb(226,72,42)"/><stop offset="0.500" stop-color="rgb(226,72,42)"/><stop offset="0.600" stop-color="rgb(226,72,42)"/><stop offset="0.700" stop-color="rgb(226,72,42)"/><stop offset="0.800" stop-color="rgb(226,72,42)"/><stop offset="0.900" stop-color="rgb(226,72,42)"/><stop offset="1.000" stop-color="rgb(226,72,42)"/></linearGradient><linearGradient id="L2" gradientUnits="userSpaceOnUse" x1="479.9" y1="652.5" x2="665.0" y2="407.7"><stop offset="0.000" stop-color="rgb(226,72,42)"/><stop offset="0.100" stop-color="rgb(226,72,42)"/><stop offset="0.200" stop-color="rgb(226,72,42)"/><stop offset="0.300" stop-color="rgb(226,72,42)"/><stop offset="0.400" stop-color="rgb(226,72,42)"/><stop offset="0.500" stop-color="rgb(226,72,42)"/><stop offset="0.600" stop-color="rgb(226,72,42)"/><stop offset="0.700" stop-color="rgb(226,72,42)"/><stop offset="0.800" stop-color="rgb(226,72,42)"/><stop offset="0.900" stop-color="rgb(226,72,42)"/><stop offset="1.000" stop-color="rgb(226,72,42)"/></linearGradient><linearGradient id="L3" gradientUnits="userSpaceOnUse" x1="468.8" y1="652.0" x2="658.4" y2="411.2"><stop offset="0.000" stop-color="rgb(226,72,42)"/><stop offset="0.100" stop-color="rgb(226,72,42)"/><stop offset="0.200" stop-color="rgb(226,72,42)"/><stop offset="0.300" stop-color="rgb(226,72,42)"/><stop offset="0.400" stop-color="rgb(226,72,42)"/><stop offset="0.500" stop-color="rgb(226,72,42)"/><stop offset="0.600" stop-color="rgb(226,72,42)"/><stop offset="0.700" stop-color="rgb(226,72,42)"/><stop offset="0.800" stop-color="rgb(226,72,42)"/><stop offset="0.900" stop-color="rgb(226,72,42)"/><stop offset="1.000" stop-color="rgb(226,72,42)"/></linearGradient><linearGradient id="L4" gradientUnits="userSpaceOnUse" x1="458.3" y1="647.5" x2="652.0" y2="414.3"><stop offset="0.000" stop-color="rgb(226,72,42)"/><stop offset="0.100" stop-color="rgb(226,72,42)"/><stop offset="0.200" stop-color="rgb(226,72,42)"/><stop offset="0.300" stop-color="rgb(226,72,42)"/><stop offset="0.400" stop-color="rgb(226,72,42)"/><stop offset="0.500" stop-color="rgb(226,72,42)"/><stop offset="0.600" stop-color="rgb(226,72,42)"/><stop offset="0.700" stop-color="rgb(226,72,42)"/><stop offset="0.800" stop-color="rgb(226,72,42)"/><stop offset="0.900" stop-color="rgb(226,72,42)"/><stop offset="1.000" stop-color="rgb(226,72,42)"/></linearGradient><linearGradient id="L5" gradientUnits="userSpaceOnUse" x1="449.5" y1="641.9" x2="646.0" y2="417.7"><stop offset="0.000" stop-color="rgb(226,72,42)"/><stop offset="0.100" stop-color="rgb(226,72,42)"/><stop offset="0.200" stop-color="rgb(226,72,42)"/><stop offset="0.300" stop-color="rgb(226,72,42)"/><stop offset="0.400" stop-color="rgb(226,72,42)"/><stop offset="0.500" stop-color="rgb(226,72,42)"/><stop offset="0.600" stop-color="rgb(226,72,42)"/><stop offset="0.700" stop-color="rgb(226,72,42)"/><stop offset="0.800" stop-color="rgb(226,72,42)"/><stop offset="0.900" stop-color="rgb(226,72,42)"/><stop offset="1.000" stop-color="rgb(226,72,42)"/></linearGradient><linearGradient id="L6" gradientUnits="userSpaceOnUse" x1="441.6" y1="635.5" x2="640.0" y2="420.6"><stop offset="0.000" stop-color="rgb(229,105,41)"/><stop offset="0.100" stop-color="rgb(229,105,41)"/><stop offset="0.200" stop-color="rgb(229,105,41)"/><stop offset="0.300" stop-color="rgb(229,105,41)"/><stop offset="0.400" stop-color="rgb(229,105,41)"/><stop offset="0.500" stop-color="rgb(229,105,41)"/><stop offset="0.600" stop-color="rgb(228,98,41)"/><stop offset="0.700" stop-color="rgb(227,91,41)"/><stop offset="0.800" stop-color="rgb(227,85,41)"/><stop offset="0.900" stop-color="rgb(226,78,41)"/><stop offset="1.000" stop-color="rgb(226,72,42)"/></linearGradient><linearGradient id="L7" gradientUnits="userSpaceOnUse" x1="435.2" y1="627.6" x2="634.0" y2="423.4"><stop offset="0.000" stop-color="rgb(232,138,40)"/><stop offset="0.100" stop-color="rgb(232,138,40)"/><stop offset="0.200" stop-color="rgb(232,138,40)"/><stop offset="0.300" stop-color="rgb(232,138,40)"/><stop offset="0.400" stop-color="rgb(232,138,40)"/><stop offset="0.500" stop-color="rgb(232,138,40)"/><stop offset="0.600" stop-color="rgb(230,124,40)"/><stop offset="0.700" stop-color="rgb(229,111,40)"/><stop offset="0.800" stop-color="rgb(228,98,41)"/><stop offset="0.900" stop-color="rgb(227,85,41)"/><stop offset="1.000" stop-color="rgb(226,72,42)"/></linearGradient><linearGradient id="L8" gradientUnits="userSpaceOnUse" x1="429.2" y1="620.0" x2="628.4" y2="426.5"><stop offset="0.000" stop-color="rgb(227,169,42)"/><stop offset="0.100" stop-color="rgb(227,169,42)"/><stop offset="0.200" stop-color="rgb(227,169,42)"/><stop offset="0.300" stop-color="rgb(227,169,42)"/><stop offset="0.400" stop-color="rgb(227,169,42)"/><stop offset="0.500" stop-color="rgb(227,169,42)"/><stop offset="0.600" stop-color="rgb(230,150,40)"/><stop offset="0.700" stop-color="rgb(231,131,40)"/><stop offset="0.800" stop-color="rgb(229,111,40)"/><stop offset="0.900" stop-color="rgb(227,91,41)"/><stop offset="1.000" stop-color="rgb(226,72,42)"/></linearGradient><linearGradient id="L9" gradientUnits="userSpaceOnUse" x1="424.1" y1="611.5" x2="623.3" y2="429.1"><stop offset="0.000" stop-color="rgb(222,200,44)"/><stop offset="0.100" stop-color="rgb(222,200,44)"/><stop offset="0.200" stop-color="rgb(222,200,44)"/><stop offset="0.300" stop-color="rgb(222,200,44)"/><stop offset="0.400" stop-color="rgb(222,200,44)"/><stop offset="0.500" stop-color="rgb(222,200,44)"/><stop offset="0.600" stop-color="rgb(225,177,42)"/><stop offset="0.700" stop-color="rgb(229,154,41)"/><stop offset="0.800" stop-color="rgb(231,131,40)"/><stop offset="0.900" stop-color="rgb(229,107,40)"/><stop offset="1.000" stop-color="rgb(227,83,41)"/></linearGradient><linearGradient id="L10" gradientUnits="userSpaceOnUse" x1="419.4" y1="603.3" x2="619.8" y2="430.6"><stop offset="0.000" stop-color="rgb(186,195,42)"/><stop offset="0.100" stop-color="rgb(186,195,42)"/><stop offset="0.200" stop-color="rgb(186,195,42)"/><stop offset="0.300" stop-color="rgb(186,195,42)"/><stop offset="0.400" stop-color="rgb(186,195,42)"/><stop offset="0.500" stop-color="rgb(186,195,42)"/><stop offset="0.600" stop-color="rgb(223,191,43)"/><stop offset="0.700" stop-color="rgb(227,167,41)"/><stop offset="0.800" stop-color="rgb(231,144,40)"/><stop offset="0.900" stop-color="rgb(230,119,40)"/><stop offset="1.000" stop-color="rgb(228,94,41)"/></linearGradient><linearGradient id="L11" gradientUnits="userSpaceOnUse" x1="416.1" y1="594.5" x2="616.0" y2="432.3"><stop offset="0.000" stop-color="rgb(150,190,40)"/><stop offset="0.100" stop-color="rgb(150,190,40)"/><stop offset="0.200" stop-color="rgb(150,190,40)"/><stop offset="0.300" stop-color="rgb(150,190,40)"/><stop offset="0.400" stop-color="rgb(150,190,40)"/><stop offset="0.500" stop-color="rgb(150,190,40)"/><stop offset="0.600" stop-color="rgb(207,198,43)"/><stop offset="0.700" stop-color="rgb(225,181,42)"/><stop offset="0.800" stop-color="rgb(229,156,41)"/><stop offset="0.900" stop-color="rgb(231,131,40)"/><stop offset="1.000" stop-color="rgb(229,105,41)"/></linearGradient><linearGradient id="L12" gradientUnits="userSpaceOnUse" x1="412.8" y1="585.5" x2="612.5" y2="434.0"><stop offset="0.000" stop-color="rgb(112,174,35)"/><stop offset="0.100" stop-color="rgb(112,174,35)"/><stop offset="0.200" stop-color="rgb(112,174,35)"/><stop offset="0.300" stop-color="rgb(112,174,35)"/><stop offset="0.400" stop-color="rgb(112,174,35)"/><stop offset="0.500" stop-color="rgb(112,174,35)"/><stop offset="0.600" stop-color="rgb(173,193,41)"/><stop offset="0.700" stop-color="rgb(222,194,43)"/><stop offset="0.800" stop-color="rgb(227,169,42)"/><stop offset="0.900" stop-color="rgb(231,143,40)"/><stop offset="1.000" stop-color="rgb(230,115,40)"/></linearGradient><linearGradient id="L13" gradientUnits="userSpaceOnUse" x1="410.5" y1="576.6" x2="608.0" y2="437.0"><stop offset="0.000" stop-color="rgb(74,158,30)"/><stop offset="0.100" stop-color="rgb(74,158,30)"/><stop offset="0.200" stop-color="rgb(74,158,30)"/><stop offset="0.300" stop-color="rgb(74,158,30)"/><stop offset="0.400" stop-color="rgb(74,158,30)"/><stop offset="0.500" stop-color="rgb(74,158,30)"/><stop offset="0.600" stop-color="rgb(139,185,38)"/><stop offset="0.700" stop-color="rgb(202,197,42)"/><stop offset="0.800" stop-color="rgb(225,181,42)"/><stop offset="0.900" stop-color="rgb(229,154,41)"/><stop offset="1.000" stop-color="rgb(231,127,40)"/></linearGradient><linearGradient id="L14" gradientUnits="userSpaceOnUse" x1="408.8" y1="567.5" x2="604.0" y2="440.5"><stop offset="0.000" stop-color="rgb(48,122,20)" stop-opacity="0.80"/><stop offset="0.100" stop-color="rgb(48,122,20)" stop-opacity="0.88"/><stop offset="0.200" stop-color="rgb(48,122,20)" stop-opacity="0.96"/><stop offset="0.300" stop-color="rgb(48,122,20)"/><stop offset="0.400" stop-color="rgb(48,122,20)"/><stop offset="0.500" stop-color="rgb(48,122,20)"/><stop offset="0.600" stop-color="rgb(110,173,34)"/><stop offset="0.700" stop-color="rgb(175,193,41)"/><stop offset="0.800" stop-color="rgb(223,192,43)"/><stop offset="0.900" stop-color="rgb(227,165,41)"/><stop offset="1.000" stop-color="rgb(232,138,40)"/></linearGradient><linearGradient id="L15" gradientUnits="userSpaceOnUse" x1="408.5" y1="558.2" x2="600.5" y2="445.0"><stop offset="0.000" stop-color="rgb(22,87,10)" stop-opacity="0.60"/><stop offset="0.100" stop-color="rgb(36,106,15)" stop-opacity="0.76"/><stop offset="0.200" stop-color="rgb(50,126,21)" stop-opacity="0.92"/><stop offset="0.300" stop-color="rgb(65,145,26)"/><stop offset="0.400" stop-color="rgb(80,160,30)"/><stop offset="0.500" stop-color="rgb(96,167,33)"/><stop offset="0.600" stop-color="rgb(222,200,44)"/><stop offset="0.700" stop-color="rgb(230,148,40)"/><stop offset="0.720" stop-color="rgb(232,138,40)"/><stop offset="0.800" stop-color="rgb(228,97,41)"/><stop offset="0.850" stop-color="rgb(226,72,42)"/><stop offset="0.900" stop-color="rgb(226,72,42)"/><stop offset="1.000" stop-color="rgb(226,72,42)"/></linearGradient><linearGradient id="L16" gradientUnits="userSpaceOnUse" x1="407.0" y1="549.0" x2="597.5" y2="451.0"><stop offset="0.000" stop-color="rgb(16,78,7)" stop-opacity="0.42"/><stop offset="0.100" stop-color="rgb(31,99,13)" stop-opacity="0.66"/><stop offset="0.200" stop-color="rgb(47,121,19)" stop-opacity="0.89"/><stop offset="0.300" stop-color="rgb(62,142,25)"/><stop offset="0.400" stop-color="rgb(78,159,30)"/><stop offset="0.500" stop-color="rgb(96,167,33)"/><stop offset="0.600" stop-color="rgb(222,200,44)"/><stop offset="0.700" stop-color="rgb(230,148,40)"/><stop offset="0.720" stop-color="rgb(232,138,40)"/><stop offset="0.800" stop-color="rgb(228,97,41)"/><stop offset="0.850" stop-color="rgb(226,72,42)"/><stop offset="0.900" stop-color="rgb(226,72,42)"/><stop offset="1.000" stop-color="rgb(226,72,42)"/></linearGradient><linearGradient id="L17" gradientUnits="userSpaceOnUse" x1="405.5" y1="540.0" x2="595.0" y2="458.0"><stop offset="0.000" stop-color="rgb(10,70,5)" stop-opacity="0.25"/><stop offset="0.100" stop-color="rgb(26,92,11)" stop-opacity="0.55"/><stop offset="0.200" stop-color="rgb(43,115,18)" stop-opacity="0.85"/><stop offset="0.300" stop-color="rgb(59,138,24)"/><stop offset="0.400" stop-color="rgb(77,159,30)"/><stop offset="0.500" stop-color="rgb(96,167,33)"/><stop offset="0.600" stop-color="rgb(222,200,44)"/><stop offset="0.700" stop-color="rgb(230,148,40)"/><stop offset="0.720" stop-color="rgb(232,138,40)"/><stop offset="0.800" stop-color="rgb(228,97,41)"/><stop offset="0.850" stop-color="rgb(226,72,42)"/><stop offset="0.900" stop-color="rgb(226,72,42)"/><stop offset="1.000" stop-color="rgb(226,72,42)"/></linearGradient><linearGradient id="L18" gradientUnits="userSpaceOnUse" x1="404.5" y1="530.0" x2="593.0" y2="466.0"><stop offset="0.000" stop-color="rgb(6,54,3)" stop-opacity="0.50"/><stop offset="0.100" stop-color="rgb(9,67,4)" stop-opacity="0.70"/><stop offset="0.200" stop-color="rgb(27,94,11)" stop-opacity="0.90"/><stop offset="0.300" stop-color="rgb(49,124,20)"/><stop offset="0.400" stop-color="rgb(71,154,29)"/><stop offset="0.500" stop-color="rgb(96,167,33)"/><stop offset="0.600" stop-color="rgb(222,200,44)"/><stop offset="0.700" stop-color="rgb(230,148,40)"/><stop offset="0.720" stop-color="rgb(232,138,40)"/><stop offset="0.800" stop-color="rgb(228,97,41)"/><stop offset="0.850" stop-color="rgb(226,72,42)"/><stop offset="0.900" stop-color="rgb(226,72,42)"/><stop offset="1.000" stop-color="rgb(226,72,42)"/></linearGradient><linearGradient id="L19" gradientUnits="userSpaceOnUse" x1="404.2" y1="520.4" x2="591.7" y2="475.2"><stop offset="0.000" stop-color="rgb(1,38,0)" stop-opacity="0.75"/><stop offset="0.100" stop-color="rgb(6,54,3)" stop-opacity="0.85"/><stop offset="0.200" stop-color="rgb(12,73,5)" stop-opacity="0.95"/><stop offset="0.300" stop-color="rgb(39,110,16)"/><stop offset="0.400" stop-color="rgb(66,147,26)"/><stop offset="0.500" stop-color="rgb(96,167,33)"/><stop offset="0.600" stop-color="rgb(222,200,44)"/><stop offset="0.700" stop-color="rgb(230,148,40)"/><stop offset="0.720" stop-color="rgb(232,138,40)"/><stop offset="0.800" stop-color="rgb(228,97,41)"/><stop offset="0.850" stop-color="rgb(226,72,42)"/><stop offset="0.900" stop-color="rgb(226,72,42)"/><stop offset="1.000" stop-color="rgb(226,72,42)"/></linearGradient><linearGradient id="L20" gradientUnits="userSpaceOnUse" x1="404.2" y1="509.4" x2="591.0" y2="485.3"><stop offset="0.000" stop-color="rgb(1,36,0)"/><stop offset="0.100" stop-color="rgb(5,53,2)"/><stop offset="0.200" stop-color="rgb(11,71,5)"/><stop offset="0.300" stop-color="rgb(38,109,16)"/><stop offset="0.400" stop-color="rgb(65,146,26)"/><stop offset="0.500" stop-color="rgb(96,167,33)"/><stop offset="0.600" stop-color="rgb(222,200,44)"/><stop offset="0.700" stop-color="rgb(230,148,40)"/><stop offset="0.720" stop-color="rgb(232,138,40)"/><stop offset="0.800" stop-color="rgb(228,97,41)"/><stop offset="0.850" stop-color="rgb(226,72,42)"/><stop offset="0.900" stop-color="rgb(226,72,42)"/><stop offset="1.000" stop-color="rgb(226,72,42)"/></linearGradient><linearGradient id="L21" gradientUnits="userSpaceOnUse" x1="404.9" y1="498.2" x2="589.4" y2="497.0"><stop offset="0.000" stop-color="rgb(1,34,0)"/><stop offset="0.100" stop-color="rgb(5,52,2)"/><stop offset="0.200" stop-color="rgb(9,69,4)"/><stop offset="0.300" stop-color="rgb(37,107,15)"/><stop offset="0.400" stop-color="rgb(65,146,26)"/><stop offset="0.500" stop-color="rgb(96,167,33)"/><stop offset="0.600" stop-color="rgb(222,200,44)"/><stop offset="0.700" stop-color="rgb(230,148,40)"/><stop offset="0.720" stop-color="rgb(232,138,40)"/><stop offset="0.800" stop-color="rgb(228,97,41)"/><stop offset="0.850" stop-color="rgb(226,72,42)"/><stop offset="0.900" stop-color="rgb(226,72,42)"/><stop offset="1.000" stop-color="rgb(226,72,42)"/></linearGradient><linearGradient id="L22" gradientUnits="userSpaceOnUse" x1="406.4" y1="485.4" x2="590.2" y2="508.8"><stop offset="0.000" stop-color="rgb(0,33,0)"/><stop offset="0.100" stop-color="rgb(5,50,2)"/><stop offset="0.200" stop-color="rgb(9,68,4)"/><stop offset="0.300" stop-color="rgb(36,106,15)"/><stop offset="0.400" stop-color="rgb(64,145,26)"/><stop offset="0.500" stop-color="rgb(96,167,33)"/><stop offset="0.600" stop-color="rgb(222,200,44)"/><stop offset="0.700" stop-color="rgb(230,148,40)"/><stop offset="0.720" stop-color="rgb(232,138,40)"/><stop offset="0.800" stop-color="rgb(228,97,41)"/><stop offset="0.850" stop-color="rgb(226,72,42)"/><stop offset="0.900" stop-color="rgb(226,72,42)"/><stop offset="1.000" stop-color="rgb(226,72,42)"/></linearGradient><linearGradient id="L23" gradientUnits="userSpaceOnUse" x1="410.2" y1="473.6" x2="589.4" y2="525.2"><stop offset="0.000" stop-color="rgb(0,31,0)"/><stop offset="0.100" stop-color="rgb(4,49,2)"/><stop offset="0.200" stop-color="rgb(9,67,4)"/><stop offset="0.300" stop-color="rgb(35,104,14)"/><stop offset="0.400" stop-color="rgb(64,144,26)"/><stop offset="0.500" stop-color="rgb(96,167,33)"/><stop offset="0.600" stop-color="rgb(222,200,44)"/><stop offset="0.700" stop-color="rgb(230,148,40)"/><stop offset="0.720" stop-color="rgb(232,138,40)"/><stop offset="0.800" stop-color="rgb(228,97,41)"/><stop offset="0.850" stop-color="rgb(226,72,42)"/><stop offset="0.900" stop-color="rgb(226,72,42)"/><stop offset="1.000" stop-color="rgb(226,72,42)"/></linearGradient><linearGradient id="L24" gradientUnits="userSpaceOnUse" x1="416.2" y1="461.8" x2="587.8" y2="541.6"><stop offset="0.000" stop-color="rgb(0,30,0)"/><stop offset="0.100" stop-color="rgb(4,48,2)"/><stop offset="0.200" stop-color="rgb(9,66,4)"/><stop offset="0.300" stop-color="rgb(34,103,14)"/><stop offset="0.400" stop-color="rgb(63,143,25)"/><stop offset="0.500" stop-color="rgb(96,167,33)"/><stop offset="0.600" stop-color="rgb(222,200,44)"/><stop offset="0.700" stop-color="rgb(230,148,40)"/><stop offset="0.720" stop-color="rgb(232,138,40)"/><stop offset="0.800" stop-color="rgb(228,97,41)"/><stop offset="0.850" stop-color="rgb(226,72,42)"/><stop offset="0.900" stop-color="rgb(226,72,42)"/><stop offset="1.000" stop-color="rgb(226,72,42)"/></linearGradient><linearGradient id="L25" gradientUnits="userSpaceOnUse" x1="423.8" y1="452.5" x2="589.4" y2="555.6"><stop offset="0.000" stop-color="rgb(0,34,0)"/><stop offset="0.100" stop-color="rgb(5,51,2)"/><stop offset="0.200" stop-color="rgb(9,69,4)"/><stop offset="0.300" stop-color="rgb(36,106,15)"/><stop offset="0.400" stop-color="rgb(65,145,26)"/><stop offset="0.500" stop-color="rgb(96,167,33)"/><stop offset="0.600" stop-color="rgb(222,200,44)"/><stop offset="0.700" stop-color="rgb(230,148,40)"/><stop offset="0.720" stop-color="rgb(232,138,40)"/><stop offset="0.800" stop-color="rgb(228,97,41)"/><stop offset="0.850" stop-color="rgb(226,72,42)"/><stop offset="0.900" stop-color="rgb(226,72,42)"/><stop offset="1.000" stop-color="rgb(226,72,42)"/></linearGradient><linearGradient id="L26" gradientUnits="userSpaceOnUse" x1="431.3" y1="446.7" x2="594.0" y2="566.0"><stop offset="0.000" stop-color="rgb(1,38,0)"/><stop offset="0.100" stop-color="rgb(6,54,3)"/><stop offset="0.200" stop-color="rgb(12,73,5)"/><stop offset="0.300" stop-color="rgb(39,110,16)"/><stop offset="0.400" stop-color="rgb(66,147,26)"/><stop offset="0.500" stop-color="rgb(96,167,33)"/><stop offset="0.600" stop-color="rgb(222,200,44)"/><stop offset="0.700" stop-color="rgb(230,148,40)"/><stop offset="0.720" stop-color="rgb(232,138,40)"/><stop offset="0.800" stop-color="rgb(228,97,41)"/><stop offset="0.850" stop-color="rgb(226,72,42)"/><stop offset="0.900" stop-color="rgb(226,72,42)"/><stop offset="1.000" stop-color="rgb(226,72,42)"/></linearGradient><linearGradient id="L27" gradientUnits="userSpaceOnUse" x1="440.4" y1="442.2" x2="601.0" y2="575.0"><stop offset="0.000" stop-color="rgb(3,42,1)" stop-opacity="0.75"/><stop offset="0.100" stop-color="rgb(7,58,3)" stop-opacity="0.85"/><stop offset="0.200" stop-color="rgb(16,78,7)" stop-opacity="0.95"/><stop offset="0.300" stop-color="rgb(41,113,17)"/><stop offset="0.400" stop-color="rgb(67,149,27)"/><stop offset="0.500" stop-color="rgb(96,167,33)"/><stop offset="0.600" stop-color="rgb(222,200,44)"/><stop offset="0.700" stop-color="rgb(230,148,40)"/><stop offset="0.720" stop-color="rgb(232,138,40)"/><stop offset="0.800" stop-color="rgb(228,97,41)"/><stop offset="0.850" stop-color="rgb(226,72,42)"/><stop offset="0.900" stop-color="rgb(226,72,42)"/><stop offset="1.000" stop-color="rgb(226,72,42)"/></linearGradient><linearGradient id="L28" gradientUnits="userSpaceOnUse" x1="449.4" y1="439.6" x2="609.2" y2="582.3"><stop offset="0.000" stop-color="rgb(6,56,3)" stop-opacity="0.50"/><stop offset="0.100" stop-color="rgb(61,141,25)" stop-opacity="0.70"/><stop offset="0.200" stop-color="rgb(147,188,39)" stop-opacity="0.90"/><stop offset="0.300" stop-color="rgb(222,196,43)"/><stop offset="0.341" stop-color="rgb(225,181,42)"/><stop offset="0.400" stop-color="rgb(229,111,40)"/><stop offset="0.431" stop-color="rgb(226,72,42)"/><stop offset="0.500" stop-color="rgb(226,72,42)"/><stop offset="0.600" stop-color="rgb(226,72,42)"/><stop offset="0.700" stop-color="rgb(226,72,42)"/><stop offset="0.800" stop-color="rgb(226,72,42)"/><stop offset="0.880" stop-color="rgb(226,72,42)"/><stop offset="0.890" stop-color="rgb(215,74,55)"/><stop offset="0.900" stop-color="rgb(209,75,64)"/><stop offset="0.910" stop-color="rgb(203,77,72)"/><stop offset="0.920" stop-color="rgb(197,78,79)"/><stop offset="0.930" stop-color="rgb(192,79,86)"/><stop offset="0.940" stop-color="rgb(186,80,94)"/><stop offset="0.950" stop-color="rgb(179,80,104)"/><stop offset="0.960" stop-color="rgb(173,80,112)"/><stop offset="0.970" stop-color="rgb(167,80,121)"/><stop offset="0.980" stop-color="rgb(161,81,129)"/><stop offset="0.990" stop-color="rgb(155,81,138)"/><stop offset="1.000" stop-color="rgb(149,81,146)"/></linearGradient><linearGradient id="L29" gradientUnits="userSpaceOnUse" x1="458.5" y1="437.0" x2="617.4" y2="587.8"><stop offset="0.000" stop-color="rgb(10,70,5)" stop-opacity="0.33"/><stop offset="0.100" stop-color="rgb(83,162,31)" stop-opacity="0.59"/><stop offset="0.200" stop-color="rgb(168,192,41)" stop-opacity="0.86"/><stop offset="0.300" stop-color="rgb(223,188,43)"/><stop offset="0.319" stop-color="rgb(225,181,42)"/><stop offset="0.400" stop-color="rgb(227,83,41)"/><stop offset="0.409" stop-color="rgb(226,72,42)"/><stop offset="0.500" stop-color="rgb(226,72,42)"/><stop offset="0.600" stop-color="rgb(226,72,42)"/><stop offset="0.700" stop-color="rgb(226,72,42)"/><stop offset="0.800" stop-color="rgb(226,72,42)"/><stop offset="0.844" stop-color="rgb(226,72,42)"/><stop offset="0.857" stop-color="rgb(211,75,60)"/><stop offset="0.870" stop-color="rgb(202,77,73)"/><stop offset="0.883" stop-color="rgb(193,79,84)"/><stop offset="0.896" stop-color="rgb(184,80,97)"/><stop offset="0.900" stop-color="rgb(181,80,102)"/><stop offset="0.909" stop-color="rgb(174,80,111)"/><stop offset="0.922" stop-color="rgb(164,81,125)"/><stop offset="0.935" stop-color="rgb(155,81,138)"/><stop offset="0.948" stop-color="rgb(146,81,150)"/><stop offset="0.961" stop-color="rgb(138,82,161)"/><stop offset="0.974" stop-color="rgb(134,83,167)"/><stop offset="0.987" stop-color="rgb(131,83,173)"/><stop offset="1.000" stop-color="rgb(127,84,179)"/></linearGradient><linearGradient id="L30" gradientUnits="userSpaceOnUse" x1="467.5" y1="434.6" x2="625.6" y2="592.7"><stop offset="0.000" stop-color="rgb(12,72,5)" stop-opacity="0.15"/><stop offset="0.100" stop-color="rgb(91,165,32)" stop-opacity="0.49"/><stop offset="0.200" stop-color="rgb(180,194,41)" stop-opacity="0.83"/><stop offset="0.299" stop-color="rgb(225,181,42)"/><stop offset="0.300" stop-color="rgb(225,179,42)"/><stop offset="0.389" stop-color="rgb(226,72,42)"/><stop offset="0.400" stop-color="rgb(226,72,42)"/><stop offset="0.500" stop-color="rgb(226,72,42)"/><stop offset="0.600" stop-color="rgb(226,72,42)"/><stop offset="0.700" stop-color="rgb(226,72,42)"/><stop offset="0.800" stop-color="rgb(226,72,42)"/><stop offset="0.808" stop-color="rgb(226,72,42)"/><stop offset="0.824" stop-color="rgb(207,76,66)"/><stop offset="0.840" stop-color="rgb(195,78,82)"/><stop offset="0.856" stop-color="rgb(182,80,100)"/><stop offset="0.872" stop-color="rgb(168,80,120)"/><stop offset="0.888" stop-color="rgb(155,81,138)"/><stop offset="0.900" stop-color="rgb(145,81,151)"/><stop offset="0.904" stop-color="rgb(142,81,155)"/><stop offset="0.920" stop-color="rgb(135,82,166)"/><stop offset="0.936" stop-color="rgb(130,84,174)"/><stop offset="0.952" stop-color="rgb(124,85,182)"/><stop offset="0.968" stop-color="rgb(119,86,190)"/><stop offset="0.984" stop-color="rgb(114,87,198)"/><stop offset="1.000" stop-color="rgb(109,88,205)"/></linearGradient><linearGradient id="L31" gradientUnits="userSpaceOnUse" x1="478.1" y1="433.6" x2="633.8" y2="597.4"><stop offset="0.000" stop-color="rgb(14,75,6)" stop-opacity="0.22"/><stop offset="0.100" stop-color="rgb(101,169,33)" stop-opacity="0.54"/><stop offset="0.200" stop-color="rgb(197,196,42)" stop-opacity="0.85"/><stop offset="0.273" stop-color="rgb(225,181,42)"/><stop offset="0.300" stop-color="rgb(230,149,40)"/><stop offset="0.363" stop-color="rgb(226,72,42)"/><stop offset="0.400" stop-color="rgb(226,72,42)"/><stop offset="0.500" stop-color="rgb(226,72,42)"/><stop offset="0.600" stop-color="rgb(226,72,42)"/><stop offset="0.700" stop-color="rgb(226,72,42)"/><stop offset="0.771" stop-color="rgb(226,72,42)"/><stop offset="0.790" stop-color="rgb(203,76,71)"/><stop offset="0.800" stop-color="rgb(196,78,81)"/><stop offset="0.810" stop-color="rgb(187,80,93)"/><stop offset="0.829" stop-color="rgb(169,80,118)"/><stop offset="0.848" stop-color="rgb(152,81,142)"/><stop offset="0.867" stop-color="rgb(138,82,162)"/><stop offset="0.886" stop-color="rgb(130,83,173)"/><stop offset="0.900" stop-color="rgb(125,84,181)"/><stop offset="0.905" stop-color="rgb(123,85,184)"/><stop offset="0.924" stop-color="rgb(117,86,194)"/><stop offset="0.943" stop-color="rgb(110,88,204)"/><stop offset="0.962" stop-color="rgb(104,89,213)"/><stop offset="0.981" stop-color="rgb(98,90,222)"/><stop offset="1.000" stop-color="rgb(92,92,232)"/></linearGradient><linearGradient id="L32" gradientUnits="userSpaceOnUse" x1="487.0" y1="432.7" x2="642.0" y2="601.5"><stop offset="0.000" stop-color="rgb(16,78,7)" stop-opacity="0.30"/><stop offset="0.100" stop-color="rgb(111,173,34)" stop-opacity="0.58"/><stop offset="0.200" stop-color="rgb(213,198,43)" stop-opacity="0.86"/><stop offset="0.251" stop-color="rgb(225,181,42)"/><stop offset="0.300" stop-color="rgb(230,123,40)"/><stop offset="0.341" stop-color="rgb(226,72,42)"/><stop offset="0.400" stop-color="rgb(226,72,42)"/><stop offset="0.500" stop-color="rgb(226,72,42)"/><stop offset="0.600" stop-color="rgb(226,72,42)"/><stop offset="0.700" stop-color="rgb(226,72,42)"/><stop offset="0.735" stop-color="rgb(226,72,42)"/><stop offset="0.757" stop-color="rgb(201,77,74)"/><stop offset="0.779" stop-color="rgb(182,80,100)"/><stop offset="0.800" stop-color="rgb(163,81,127)"/><stop offset="0.801" stop-color="rgb(162,81,128)"/><stop offset="0.823" stop-color="rgb(143,81,155)"/><stop offset="0.846" stop-color="rgb(133,83,170)"/><stop offset="0.868" stop-color="rgb(125,85,182)"/><stop offset="0.890" stop-color="rgb(117,86,193)"/><stop offset="0.900" stop-color="rgb(114,87,198)"/><stop offset="0.912" stop-color="rgb(110,88,204)"/><stop offset="0.934" stop-color="rgb(102,89,215)"/><stop offset="0.956" stop-color="rgb(95,91,226)"/><stop offset="0.978" stop-color="rgb(97,101,232)"/><stop offset="1.000" stop-color="rgb(111,123,235)"/></linearGradient><linearGradient id="L33" gradientUnits="userSpaceOnUse" x1="496.2" y1="432.0" x2="650.8" y2="605.0"><stop offset="0.000" stop-color="rgb(35,105,14)" stop-opacity="0.65"/><stop offset="0.100" stop-color="rgb(133,183,37)" stop-opacity="0.79"/><stop offset="0.200" stop-color="rgb(222,194,43)" stop-opacity="0.93"/><stop offset="0.231" stop-color="rgb(225,181,42)" stop-opacity="0.97"/><stop offset="0.300" stop-color="rgb(228,97,41)"/><stop offset="0.321" stop-color="rgb(226,72,42)"/><stop offset="0.400" stop-color="rgb(226,72,42)"/><stop offset="0.500" stop-color="rgb(226,72,42)"/><stop offset="0.600" stop-color="rgb(226,72,42)"/><stop offset="0.699" stop-color="rgb(226,72,42)"/><stop offset="0.700" stop-color="rgb(224,72,43)"/><stop offset="0.724" stop-color="rgb(199,77,77)"/><stop offset="0.749" stop-color="rgb(177,80,107)"/><stop offset="0.774" stop-color="rgb(155,81,138)"/><stop offset="0.799" stop-color="rgb(137,82,163)"/><stop offset="0.800" stop-color="rgb(137,82,164)"/><stop offset="0.824" stop-color="rgb(128,84,177)"/><stop offset="0.850" stop-color="rgb(119,86,190)"/><stop offset="0.875" stop-color="rgb(111,88,203)"/><stop offset="0.900" stop-color="rgb(103,89,215)"/><stop offset="0.900" stop-color="rgb(102,89,215)"/><stop offset="0.925" stop-color="rgb(95,91,227)"/><stop offset="0.950" stop-color="rgb(100,106,233)"/><stop offset="0.975" stop-color="rgb(115,130,235)"/><stop offset="1.000" stop-color="rgb(130,154,238)"/></linearGradient><linearGradient id="L34" gradientUnits="userSpaceOnUse" x1="506.0" y1="431.0" x2="659.3" y2="608.3"><stop offset="0.000" stop-color="rgb(54,131,22)"/><stop offset="0.100" stop-color="rgb(155,190,40)"/><stop offset="0.200" stop-color="rgb(224,186,43)"/><stop offset="0.211" stop-color="rgb(225,181,42)"/><stop offset="0.300" stop-color="rgb(226,73,41)"/><stop offset="0.301" stop-color="rgb(226,72,42)"/><stop offset="0.400" stop-color="rgb(226,72,42)"/><stop offset="0.500" stop-color="rgb(226,72,42)"/><stop offset="0.600" stop-color="rgb(226,72,42)"/><stop offset="0.663" stop-color="rgb(226,72,42)"/><stop offset="0.691" stop-color="rgb(196,78,80)"/><stop offset="0.700" stop-color="rgb(190,79,89)"/><stop offset="0.719" stop-color="rgb(172,80,114)"/><stop offset="0.747" stop-color="rgb(148,81,148)"/><stop offset="0.775" stop-color="rgb(133,83,170)"/><stop offset="0.800" stop-color="rgb(124,85,183)"/><stop offset="0.803" stop-color="rgb(123,85,185)"/><stop offset="0.831" stop-color="rgb(113,87,199)"/><stop offset="0.860" stop-color="rgb(104,89,212)"/><stop offset="0.888" stop-color="rgb(95,91,226)"/><stop offset="0.900" stop-color="rgb(92,91,231)"/><stop offset="0.916" stop-color="rgb(101,106,233)"/><stop offset="0.944" stop-color="rgb(117,133,236)"/><stop offset="0.972" stop-color="rgb(133,159,238)"/><stop offset="1.000" stop-color="rgb(140,181,235)"/></linearGradient><linearGradient id="L35" gradientUnits="userSpaceOnUse" x1="515.8" y1="430.3" x2="668.0" y2="611.9"><stop offset="0.000" stop-color="rgb(74,158,30)"/><stop offset="0.100" stop-color="rgb(176,193,41)"/><stop offset="0.190" stop-color="rgb(225,181,42)"/><stop offset="0.200" stop-color="rgb(226,170,42)"/><stop offset="0.280" stop-color="rgb(226,72,42)"/><stop offset="0.300" stop-color="rgb(226,72,42)"/><stop offset="0.400" stop-color="rgb(226,72,42)"/><stop offset="0.500" stop-color="rgb(226,72,42)"/><stop offset="0.600" stop-color="rgb(226,72,42)"/><stop offset="0.627" stop-color="rgb(226,72,42)"/><stop offset="0.658" stop-color="rgb(194,78,83)"/><stop offset="0.689" stop-color="rgb(166,80,122)"/><stop offset="0.700" stop-color="rgb(157,81,135)"/><stop offset="0.720" stop-color="rgb(141,81,158)"/><stop offset="0.751" stop-color="rgb(129,84,176)"/><stop offset="0.782" stop-color="rgb(118,86,192)"/><stop offset="0.800" stop-color="rgb(112,87,201)"/><stop offset="0.813" stop-color="rgb(108,88,207)"/><stop offset="0.844" stop-color="rgb(98,90,222)"/><stop offset="0.876" stop-color="rgb(98,102,233)"/><stop offset="0.900" stop-color="rgb(112,125,235)"/><stop offset="0.907" stop-color="rgb(116,132,236)"/><stop offset="0.938" stop-color="rgb(134,160,239)"/><stop offset="0.969" stop-color="rgb(140,184,233)"/><stop offset="1.000" stop-color="rgb(140,205,225)"/></linearGradient><linearGradient id="L36" gradientUnits="userSpaceOnUse" x1="524.9" y1="429.8" x2="677.0" y2="614.6"><stop offset="0.000" stop-color="rgb(99,168,33)"/><stop offset="0.100" stop-color="rgb(197,196,42)"/><stop offset="0.171" stop-color="rgb(225,181,42)"/><stop offset="0.200" stop-color="rgb(230,148,40)"/><stop offset="0.261" stop-color="rgb(226,72,42)"/><stop offset="0.300" stop-color="rgb(226,72,42)"/><stop offset="0.400" stop-color="rgb(226,72,42)"/><stop offset="0.500" stop-color="rgb(226,72,42)"/><stop offset="0.590" stop-color="rgb(226,72,42)"/><stop offset="0.600" stop-color="rgb(216,74,54)"/><stop offset="0.625" stop-color="rgb(192,79,86)"/><stop offset="0.659" stop-color="rgb(161,81,129)"/><stop offset="0.693" stop-color="rgb(137,82,164)"/><stop offset="0.700" stop-color="rgb(134,83,168)"/><stop offset="0.727" stop-color="rgb(124,85,182)"/><stop offset="0.761" stop-color="rgb(113,87,200)"/><stop offset="0.795" stop-color="rgb(102,89,216)"/><stop offset="0.800" stop-color="rgb(100,90,218)"/><stop offset="0.829" stop-color="rgb(92,92,232)"/><stop offset="0.863" stop-color="rgb(112,125,235)"/><stop offset="0.898" stop-color="rgb(132,157,238)"/><stop offset="0.900" stop-color="rgb(133,159,238)"/><stop offset="0.932" stop-color="rgb(140,183,234)"/><stop offset="0.966" stop-color="rgb(140,207,224)"/><stop offset="1.000" stop-color="rgb(140,230,215)"/></linearGradient><linearGradient id="L37" gradientUnits="userSpaceOnUse" x1="534.0" y1="429.5" x2="685.8" y2="617.4"><stop offset="0.000" stop-color="rgb(124,179,36)"/><stop offset="0.100" stop-color="rgb(217,199,43)"/><stop offset="0.152" stop-color="rgb(225,181,42)"/><stop offset="0.200" stop-color="rgb(230,124,40)"/><stop offset="0.242" stop-color="rgb(226,72,42)"/><stop offset="0.300" stop-color="rgb(226,72,42)"/><stop offset="0.400" stop-color="rgb(226,72,42)"/><stop offset="0.500" stop-color="rgb(226,72,42)"/><stop offset="0.554" stop-color="rgb(226,72,42)"/><stop offset="0.591" stop-color="rgb(188,80,92)"/><stop offset="0.600" stop-color="rgb(180,80,103)"/><stop offset="0.629" stop-color="rgb(153,81,141)"/><stop offset="0.666" stop-color="rgb(131,83,172)"/><stop offset="0.700" stop-color="rgb(118,86,191)"/><stop offset="0.703" stop-color="rgb(117,86,193)"/><stop offset="0.740" stop-color="rgb(105,89,212)"/><stop offset="0.777" stop-color="rgb(92,91,230)"/><stop offset="0.800" stop-color="rgb(104,112,234)"/><stop offset="0.814" stop-color="rgb(113,127,235)"/><stop offset="0.851" stop-color="rgb(136,163,239)"/><stop offset="0.889" stop-color="rgb(140,192,230)"/><stop offset="0.900" stop-color="rgb(140,200,227)"/><stop offset="0.926" stop-color="rgb(140,218,219)"/><stop offset="0.963" stop-color="rgb(136,228,197)"/><stop offset="1.000" stop-color="rgb(130,225,167)"/></linearGradient><linearGradient id="L38" gradientUnits="userSpaceOnUse" x1="543.8" y1="429.8" x2="694.5" y2="620.1"><stop offset="0.000" stop-color="rgb(150,190,40)"/><stop offset="0.100" stop-color="rgb(223,193,43)"/><stop offset="0.131" stop-color="rgb(225,181,42)"/><stop offset="0.200" stop-color="rgb(228,98,41)"/><stop offset="0.221" stop-color="rgb(226,72,42)"/><stop offset="0.300" stop-color="rgb(226,72,42)"/><stop offset="0.400" stop-color="rgb(226,72,42)"/><stop offset="0.500" stop-color="rgb(226,72,42)"/><stop offset="0.518" stop-color="rgb(226,72,42)"/><stop offset="0.558" stop-color="rgb(183,80,99)"/><stop offset="0.598" stop-color="rgb(144,81,153)"/><stop offset="0.600" stop-color="rgb(143,81,155)"/><stop offset="0.639" stop-color="rgb(125,84,181)"/><stop offset="0.679" stop-color="rgb(110,88,203)"/><stop offset="0.700" stop-color="rgb(103,89,214)"/><stop offset="0.719" stop-color="rgb(96,91,224)"/><stop offset="0.759" stop-color="rgb(109,120,234)"/><stop offset="0.799" stop-color="rgb(134,161,239)"/><stop offset="0.800" stop-color="rgb(135,162,239)"/><stop offset="0.839" stop-color="rgb(140,194,229)"/><stop offset="0.880" stop-color="rgb(140,224,217)"/><stop offset="0.900" stop-color="rgb(137,228,203)"/><stop offset="0.920" stop-color="rgb(134,227,186)"/><stop offset="0.960" stop-color="rgb(127,223,152)"/><stop offset="1.000" stop-color="rgb(121,220,119)"/></linearGradient><linearGradient id="L39" gradientUnits="userSpaceOnUse" x1="553.3" y1="430.3" x2="703.6" y2="622.8"><stop offset="0.000" stop-color="rgb(174,193,41)"/><stop offset="0.100" stop-color="rgb(224,184,43)"/><stop offset="0.109" stop-color="rgb(225,181,42)"/><stop offset="0.199" stop-color="rgb(226,72,42)"/><stop offset="0.200" stop-color="rgb(226,72,42)"/><stop offset="0.300" stop-color="rgb(226,72,42)"/><stop offset="0.400" stop-color="rgb(226,72,42)"/><stop offset="0.482" stop-color="rgb(226,72,42)"/><stop offset="0.500" stop-color="rgb(207,76,66)"/><stop offset="0.525" stop-color="rgb(177,80,106)"/><stop offset="0.568" stop-color="rgb(137,82,163)"/><stop offset="0.600" stop-color="rgb(124,85,182)"/><stop offset="0.611" stop-color="rgb(120,86,189)"/><stop offset="0.655" stop-color="rgb(103,89,214)"/><stop offset="0.698" stop-color="rgb(99,103,233)"/><stop offset="0.700" stop-color="rgb(100,106,233)"/><stop offset="0.741" stop-color="rgb(128,151,238)"/><stop offset="0.784" stop-color="rgb(140,190,231)"/><stop offset="0.800" stop-color="rgb(140,202,226)"/><stop offset="0.827" stop-color="rgb(140,224,217)"/><stop offset="0.870" stop-color="rgb(133,226,183)"/><stop offset="0.900" stop-color="rgb(128,224,157)"/><stop offset="0.914" stop-color="rgb(126,223,145)"/><stop offset="0.957" stop-color="rgb(119,219,108)"/><stop offset="1.000" stop-color="rgb(112,216,72)"/></linearGradient><linearGradient id="L40" gradientUnits="userSpaceOnUse" x1="562.6" y1="431.0" x2="712.6" y2="625.3"><stop offset="0.000" stop-color="rgb(198,196,42)"/><stop offset="0.088" stop-color="rgb(225,181,42)"/><stop offset="0.100" stop-color="rgb(227,167,41)"/><stop offset="0.178" stop-color="rgb(226,72,42)"/><stop offset="0.200" stop-color="rgb(226,72,42)"/><stop offset="0.300" stop-color="rgb(226,72,42)"/><stop offset="0.400" stop-color="rgb(226,72,42)"/><stop offset="0.446" stop-color="rgb(226,72,42)"/><stop offset="0.492" stop-color="rgb(175,80,110)"/><stop offset="0.500" stop-color="rgb(167,80,121)"/><stop offset="0.538" stop-color="rgb(135,82,166)"/><stop offset="0.584" stop-color="rgb(117,86,194)"/><stop offset="0.600" stop-color="rgb(111,87,202)"/><stop offset="0.630" stop-color="rgb(100,90,219)"/><stop offset="0.677" stop-color="rgb(107,117,234)"/><stop offset="0.700" stop-color="rgb(122,142,237)"/><stop offset="0.723" stop-color="rgb(137,166,239)"/><stop offset="0.769" stop-color="rgb(140,203,225)"/><stop offset="0.800" stop-color="rgb(140,227,216)"/><stop offset="0.815" stop-color="rgb(137,228,204)"/><stop offset="0.861" stop-color="rgb(129,224,163)"/><stop offset="0.900" stop-color="rgb(123,221,130)"/><stop offset="0.908" stop-color="rgb(122,221,124)"/><stop offset="0.954" stop-color="rgb(114,217,85)"/><stop offset="1.000" stop-color="rgb(117,204,58)"/></linearGradient><linearGradient id="L41" gradientUnits="userSpaceOnUse" x1="572.0" y1="431.8" x2="721.3" y2="627.5"><stop offset="0.000" stop-color="rgb(222,200,44)"/><stop offset="0.066" stop-color="rgb(225,181,42)"/><stop offset="0.100" stop-color="rgb(231,142,40)"/><stop offset="0.156" stop-color="rgb(226,72,42)"/><stop offset="0.200" stop-color="rgb(226,72,42)"/><stop offset="0.300" stop-color="rgb(226,72,42)"/><stop offset="0.400" stop-color="rgb(226,72,42)"/><stop offset="0.410" stop-color="rgb(226,72,42)"/><stop offset="0.459" stop-color="rgb(172,80,114)"/><stop offset="0.500" stop-color="rgb(137,82,164)"/><stop offset="0.508" stop-color="rgb(133,83,169)"/><stop offset="0.557" stop-color="rgb(114,87,198)"/><stop offset="0.600" stop-color="rgb(99,90,221)"/><stop offset="0.606" stop-color="rgb(96,91,224)"/><stop offset="0.656" stop-color="rgb(115,130,235)"/><stop offset="0.700" stop-color="rgb(140,175,237)"/><stop offset="0.705" stop-color="rgb(140,179,236)"/><stop offset="0.754" stop-color="rgb(140,217,220)"/><stop offset="0.800" stop-color="rgb(135,227,189)"/><stop offset="0.803" stop-color="rgb(134,227,186)"/><stop offset="0.852" stop-color="rgb(126,223,144)"/><stop offset="0.900" stop-color="rgb(118,219,104)"/><stop offset="0.902" stop-color="rgb(118,219,103)"/><stop offset="0.951" stop-color="rgb(114,211,66)"/><stop offset="1.000" stop-color="rgb(124,191,43)"/></linearGradient><linearGradient id="L42" gradientUnits="userSpaceOnUse" x1="581.5" y1="432.5" x2="730.1" y2="629.4"><stop offset="0.000" stop-color="rgb(224,184,43)"/><stop offset="0.045" stop-color="rgb(225,181,42)"/><stop offset="0.100" stop-color="rgb(230,116,40)"/><stop offset="0.135" stop-color="rgb(226,72,42)"/><stop offset="0.200" stop-color="rgb(226,72,42)"/><stop offset="0.300" stop-color="rgb(226,72,42)"/><stop offset="0.373" stop-color="rgb(226,72,42)"/><stop offset="0.400" stop-color="rgb(200,77,76)"/><stop offset="0.426" stop-color="rgb(170,80,117)"/><stop offset="0.478" stop-color="rgb(131,83,172)"/><stop offset="0.500" stop-color="rgb(123,85,185)"/><stop offset="0.530" stop-color="rgb(111,87,202)"/><stop offset="0.582" stop-color="rgb(93,91,230)"/><stop offset="0.600" stop-color="rgb(101,107,233)"/><stop offset="0.634" stop-color="rgb(124,144,237)"/><stop offset="0.687" stop-color="rgb(140,191,231)"/><stop offset="0.700" stop-color="rgb(140,201,227)"/><stop offset="0.739" stop-color="rgb(139,229,214)"/><stop offset="0.791" stop-color="rgb(131,225,169)"/><stop offset="0.800" stop-color="rgb(129,224,161)"/><stop offset="0.843" stop-color="rgb(122,221,125)"/><stop offset="0.896" stop-color="rgb(114,217,82)"/><stop offset="0.900" stop-color="rgb(113,216,79)"/><stop offset="0.948" stop-color="rgb(119,200,53)"/><stop offset="1.000" stop-color="rgb(130,180,30)"/></linearGradient><linearGradient id="L43" gradientUnits="userSpaceOnUse" x1="590.6" y1="433.6" x2="739.1" y2="632.1"><stop offset="0.000" stop-color="rgb(227,169,42)"/><stop offset="0.024" stop-color="rgb(227,169,42)"/><stop offset="0.100" stop-color="rgb(227,87,41)"/><stop offset="0.114" stop-color="rgb(226,72,42)"/><stop offset="0.200" stop-color="rgb(226,72,42)"/><stop offset="0.300" stop-color="rgb(226,72,42)"/><stop offset="0.337" stop-color="rgb(226,72,42)"/><stop offset="0.392" stop-color="rgb(167,80,121)"/><stop offset="0.400" stop-color="rgb(160,81,130)"/><stop offset="0.448" stop-color="rgb(129,84,175)"/><stop offset="0.500" stop-color="rgb(109,88,205)"/><stop offset="0.503" stop-color="rgb(108,88,206)"/><stop offset="0.558" stop-color="rgb(96,99,232)"/><stop offset="0.600" stop-color="rgb(123,143,237)"/><stop offset="0.613" stop-color="rgb(132,157,238)"/><stop offset="0.669" stop-color="rgb(140,202,226)"/><stop offset="0.700" stop-color="rgb(140,226,216)"/><stop offset="0.724" stop-color="rgb(136,228,198)"/><stop offset="0.779" stop-color="rgb(127,223,151)"/><stop offset="0.800" stop-color="rgb(124,222,134)"/><stop offset="0.834" stop-color="rgb(118,219,106)"/><stop offset="0.890" stop-color="rgb(114,210,66)"/><stop offset="0.900" stop-color="rgb(116,206,61)"/><stop offset="0.945" stop-color="rgb(125,189,40)"/><stop offset="1.000" stop-color="rgb(136,164,24)"/></linearGradient><linearGradient id="L44" gradientUnits="userSpaceOnUse" x1="600.4" y1="435.1" x2="748.1" y2="634.9"><stop offset="0.000" stop-color="rgb(229,153,41)"/><stop offset="0.090" stop-color="rgb(226,72,42)"/><stop offset="0.100" stop-color="rgb(226,72,42)"/><stop offset="0.200" stop-color="rgb(226,72,42)"/><stop offset="0.300" stop-color="rgb(226,72,42)"/><stop offset="0.301" stop-color="rgb(226,72,42)"/><stop offset="0.359" stop-color="rgb(165,80,124)"/><stop offset="0.400" stop-color="rgb(134,83,167)"/><stop offset="0.417" stop-color="rgb(127,84,178)"/><stop offset="0.476" stop-color="rgb(105,89,211)"/><stop offset="0.500" stop-color="rgb(97,90,223)"/><stop offset="0.534" stop-color="rgb(103,110,233)"/><stop offset="0.592" stop-color="rgb(140,170,239)"/><stop offset="0.600" stop-color="rgb(140,176,237)"/><stop offset="0.650" stop-color="rgb(140,214,221)"/><stop offset="0.700" stop-color="rgb(135,227,190)"/><stop offset="0.709" stop-color="rgb(133,226,182)"/><stop offset="0.767" stop-color="rgb(124,222,134)"/><stop offset="0.800" stop-color="rgb(118,219,107)"/><stop offset="0.825" stop-color="rgb(114,217,86)"/><stop offset="0.883" stop-color="rgb(119,200,53)"/><stop offset="0.900" stop-color="rgb(122,194,46)"/><stop offset="0.942" stop-color="rgb(131,177,28)"/><stop offset="1.000" stop-color="rgb(143,147,17)"/></linearGradient><linearGradient id="L45" gradientUnits="userSpaceOnUse" x1="609.8" y1="436.3" x2="756.9" y2="636.5"><stop offset="0.000" stop-color="rgb(232,138,40)"/><stop offset="0.050" stop-color="rgb(226,72,42)"/><stop offset="0.100" stop-color="rgb(226,72,42)"/><stop offset="0.200" stop-color="rgb(226,72,42)"/><stop offset="0.265" stop-color="rgb(226,72,42)"/><stop offset="0.300" stop-color="rgb(193,79,84)"/><stop offset="0.326" stop-color="rgb(162,81,128)"/><stop offset="0.387" stop-color="rgb(125,85,181)"/><stop offset="0.400" stop-color="rgb(120,86,188)"/><stop offset="0.449" stop-color="rgb(103,89,215)"/><stop offset="0.500" stop-color="rgb(104,111,234)"/><stop offset="0.510" stop-color="rgb(110,122,235)"/><stop offset="0.571" stop-color="rgb(140,181,235)"/><stop offset="0.600" stop-color="rgb(140,202,226)"/><stop offset="0.632" stop-color="rgb(140,226,216)"/><stop offset="0.694" stop-color="rgb(130,225,166)"/><stop offset="0.700" stop-color="rgb(129,224,161)"/><stop offset="0.755" stop-color="rgb(120,220,116)"/><stop offset="0.800" stop-color="rgb(113,216,80)"/><stop offset="0.816" stop-color="rgb(113,213,69)"/><stop offset="0.877" stop-color="rgb(124,190,41)"/><stop offset="0.900" stop-color="rgb(129,181,31)"/><stop offset="0.939" stop-color="rgb(137,162,23)"/><stop offset="1.000" stop-color="rgb(150,132,12)"/></linearGradient><linearGradient id="L46" gradientUnits="userSpaceOnUse" x1="619.6" y1="437.7" x2="765.6" y2="638.4"><stop offset="0.000" stop-color="rgb(230,124,40)"/><stop offset="0.050" stop-color="rgb(226,72,42)"/><stop offset="0.100" stop-color="rgb(226,72,42)"/><stop offset="0.200" stop-color="rgb(226,72,42)"/><stop offset="0.229" stop-color="rgb(226,72,42)"/><stop offset="0.293" stop-color="rgb(160,81,130)"/><stop offset="0.300" stop-color="rgb(154,81,139)"/><stop offset="0.357" stop-color="rgb(124,85,183)"/><stop offset="0.400" stop-color="rgb(109,88,206)"/><stop offset="0.421" stop-color="rgb(101,90,217)"/><stop offset="0.486" stop-color="rgb(114,129,235)"/><stop offset="0.500" stop-color="rgb(123,143,237)"/><stop offset="0.550" stop-color="rgb(140,187,232)"/><stop offset="0.600" stop-color="rgb(140,223,217)"/><stop offset="0.614" stop-color="rgb(139,229,210)"/><stop offset="0.679" stop-color="rgb(128,224,157)"/><stop offset="0.700" stop-color="rgb(125,222,140)"/><stop offset="0.743" stop-color="rgb(118,219,105)"/><stop offset="0.800" stop-color="rgb(114,210,65)"/><stop offset="0.807" stop-color="rgb(115,208,62)"/><stop offset="0.871" stop-color="rgb(128,183,34)"/><stop offset="0.900" stop-color="rgb(133,170,26)"/><stop offset="0.936" stop-color="rgb(141,153,19)"/><stop offset="1.000" stop-color="rgb(144,127,11)" stop-opacity="0.92"/></linearGradient><linearGradient id="L47" gradientUnits="userSpaceOnUse" x1="628.4" y1="438.7" x2="774.7" y2="640.3"><stop offset="0.000" stop-color="rgb(229,111,40)"/><stop offset="0.050" stop-color="rgb(226,72,42)"/><stop offset="0.100" stop-color="rgb(226,72,42)"/><stop offset="0.192" stop-color="rgb(226,72,42)"/><stop offset="0.200" stop-color="rgb(219,73,50)"/><stop offset="0.260" stop-color="rgb(159,81,132)"/><stop offset="0.300" stop-color="rgb(133,83,169)"/><stop offset="0.327" stop-color="rgb(122,85,185)"/><stop offset="0.394" stop-color="rgb(99,90,220)"/><stop offset="0.400" stop-color="rgb(97,90,223)"/><stop offset="0.462" stop-color="rgb(118,135,236)"/><stop offset="0.500" stop-color="rgb(140,172,239)"/><stop offset="0.529" stop-color="rgb(140,193,230)"/><stop offset="0.596" stop-color="rgb(137,228,201)"/><stop offset="0.600" stop-color="rgb(136,228,198)"/><stop offset="0.663" stop-color="rgb(126,223,147)"/><stop offset="0.700" stop-color="rgb(121,220,119)"/><stop offset="0.731" stop-color="rgb(116,218,95)"/><stop offset="0.798" stop-color="rgb(118,202,55)"/><stop offset="0.800" stop-color="rgb(119,201,55)"/><stop offset="0.865" stop-color="rgb(131,176,28)"/><stop offset="0.900" stop-color="rgb(138,160,22)"/><stop offset="0.933" stop-color="rgb(144,144,16)"/><stop offset="1.000" stop-color="rgb(138,123,11)" stop-opacity="0.84"/></linearGradient><linearGradient id="L48" gradientUnits="userSpaceOnUse" x1="637.6" y1="440.2" x2="783.7" y2="643.0"><stop offset="0.000" stop-color="rgb(228,98,41)"/><stop offset="0.050" stop-color="rgb(226,72,42)"/><stop offset="0.100" stop-color="rgb(226,72,42)"/><stop offset="0.156" stop-color="rgb(226,72,42)"/><stop offset="0.200" stop-color="rgb(188,80,91)"/><stop offset="0.227" stop-color="rgb(157,81,135)"/><stop offset="0.297" stop-color="rgb(121,85,187)"/><stop offset="0.300" stop-color="rgb(120,86,189)"/><stop offset="0.367" stop-color="rgb(98,90,222)"/><stop offset="0.400" stop-color="rgb(100,105,233)"/><stop offset="0.437" stop-color="rgb(123,142,237)"/><stop offset="0.500" stop-color="rgb(140,194,229)"/><stop offset="0.508" stop-color="rgb(140,199,227)"/><stop offset="0.578" stop-color="rgb(135,227,193)"/><stop offset="0.600" stop-color="rgb(132,226,176)"/><stop offset="0.648" stop-color="rgb(124,222,138)"/><stop offset="0.700" stop-color="rgb(117,218,99)"/><stop offset="0.719" stop-color="rgb(114,217,84)"/><stop offset="0.789" stop-color="rgb(121,196,49)"/><stop offset="0.800" stop-color="rgb(123,192,44)"/><stop offset="0.859" stop-color="rgb(134,168,25)"/><stop offset="0.900" stop-color="rgb(142,149,18)"/><stop offset="0.930" stop-color="rgb(148,135,13)"/><stop offset="1.000" stop-color="rgb(131,118,10)" stop-opacity="0.76"/></linearGradient><linearGradient id="L49" gradientUnits="userSpaceOnUse" x1="646.7" y1="442.1" x2="793.0" y2="645.2"><stop offset="0.000" stop-color="rgb(227,85,41)"/><stop offset="0.050" stop-color="rgb(226,72,42)"/><stop offset="0.100" stop-color="rgb(226,72,42)"/><stop offset="0.120" stop-color="rgb(226,72,42)"/><stop offset="0.193" stop-color="rgb(156,81,137)"/><stop offset="0.200" stop-color="rgb(151,81,144)"/><stop offset="0.267" stop-color="rgb(120,86,189)"/><stop offset="0.300" stop-color="rgb(109,88,205)"/><stop offset="0.340" stop-color="rgb(96,91,225)"/><stop offset="0.400" stop-color="rgb(119,136,236)"/><stop offset="0.413" stop-color="rgb(127,149,237)"/><stop offset="0.487" stop-color="rgb(140,206,224)"/><stop offset="0.500" stop-color="rgb(140,215,221)"/><stop offset="0.560" stop-color="rgb(134,227,184)"/><stop offset="0.600" stop-color="rgb(128,224,154)"/><stop offset="0.633" stop-color="rgb(123,221,128)"/><stop offset="0.700" stop-color="rgb(113,216,79)"/><stop offset="0.707" stop-color="rgb(112,216,74)"/><stop offset="0.780" stop-color="rgb(124,190,42)"/><stop offset="0.800" stop-color="rgb(128,183,34)"/><stop offset="0.853" stop-color="rgb(138,159,22)"/><stop offset="0.900" stop-color="rgb(147,138,14)"/><stop offset="0.927" stop-color="rgb(146,129,11)" stop-opacity="0.95"/><stop offset="1.000" stop-color="rgb(125,114,10)" stop-opacity="0.68"/></linearGradient><clipPath id="cpA"><rect x="361.15" y="389.25" width="476.8" height="262.5"/></clipPath></defs><rect x="346.4" y="374.5" width="506.3" height="292" fill="#8c002b"/><rect x="361.15" y="389.25" width="476.8" height="262.5" fill="#005000"/><g clip-path="url(#cpA)" stroke-width="1.25" fill="none"><path d="M497.5 643.7L678.6 397.7" stroke="url(#L0)"/><path d="M489.3 649.2L671.8 402.8" stroke="url(#L1)"/><path d="M479.9 652.5L665.0 407.7" stroke="url(#L2)"/><path d="M468.8 652.0L658.4 411.2" stroke="url(#L3)"/><path d="M458.3 647.5L652.0 414.3" stroke="url(#L4)"/><path d="M449.5 641.9L646.0 417.7" stroke="url(#L5)"/><path d="M441.6 635.5L640.0 420.6" stroke="url(#L6)"/><path d="M435.2 627.6L634.0 423.4" stroke="url(#L7)"/><path d="M429.2 620.0L628.4 426.5" stroke="url(#L8)"/><path d="M424.1 611.5L623.3 429.1" stroke="url(#L9)"/><path d="M419.4 603.3L619.8 430.6" stroke="url(#L10)"/><path d="M416.1 594.5L616.0 432.3" stroke="url(#L11)"/><path d="M412.8 585.5L612.5 434.0" stroke="url(#L12)"/><path d="M410.5 576.6L608.0 437.0" stroke="url(#L13)"/><path d="M408.8 567.5L604.0 440.5" stroke="url(#L14)"/><path d="M408.5 558.2L600.5 445.0" stroke="url(#L15)"/><path d="M407.0 549.0L597.5 451.0" stroke="url(#L16)"/><path d="M405.5 540.0L595.0 458.0" stroke="url(#L17)"/><path d="M404.5 530.0L593.0 466.0" stroke="url(#L18)"/><path d="M404.2 520.4L591.7 475.2" stroke="url(#L19)"/><path d="M404.2 509.4L591.0 485.3" stroke="url(#L20)"/><path d="M404.9 498.2L589.4 497.0" stroke="url(#L21)"/><path d="M406.4 485.4L590.2 508.8" stroke="url(#L22)"/><path d="M410.2 473.6L589.4 525.2" stroke="url(#L23)"/><path d="M416.2 461.8L587.8 541.6" stroke="url(#L24)"/><path d="M423.8 452.5L589.4 555.6" stroke="url(#L25)"/><path d="M431.3 446.7L594.0 566.0" stroke="url(#L26)"/><path d="M440.4 442.2L601.0 575.0" stroke="url(#L27)"/><path d="M449.4 439.6L609.2 582.3" stroke="url(#L28)"/><path d="M458.5 437.0L617.4 587.8" stroke="url(#L29)"/><path d="M467.5 434.6L625.6 592.7" stroke="url(#L30)"/><path d="M478.1 433.6L633.8 597.4" stroke="url(#L31)"/><path d="M487.0 432.7L642.0 601.5" stroke="url(#L32)"/><path d="M496.2 432.0L650.8 605.0" stroke="url(#L33)"/><path d="M506.0 431.0L659.3 608.3" stroke="url(#L34)"/><path d="M515.8 430.3L668.0 611.9" stroke="url(#L35)"/><path d="M524.9 429.8L677.0 614.6" stroke="url(#L36)"/><path d="M534.0 429.5L685.8 617.4" stroke="url(#L37)"/><path d="M543.8 429.8L694.5 620.1" stroke="url(#L38)"/><path d="M553.3 430.3L703.6 622.8" stroke="url(#L39)"/><path d="M562.6 431.0L712.6 625.3" stroke="url(#L40)"/><path d="M572.0 431.8L721.3 627.5" stroke="url(#L41)"/><path d="M581.5 432.5L730.1 629.4" stroke="url(#L42)"/><path d="M590.6 433.6L739.1 632.1" stroke="url(#L43)"/><path d="M600.4 435.1L748.1 634.9" stroke="url(#L44)"/><path d="M609.8 436.3L756.9 636.5" stroke="url(#L45)"/><path d="M619.6 437.7L765.6 638.4" stroke="url(#L46)"/><path d="M628.4 438.7L774.7 640.3" stroke="url(#L47)"/><path d="M637.6 440.2L783.7 643.0" stroke="url(#L48)"/><path d="M646.7 442.1L793.0 645.2" stroke="url(#L49)"/></g><rect x="346.55" y="374.65" width="506" height="291.7" fill="none" stroke="#2a08c0" stroke-width="1.100" stroke-dasharray="4.300 3.700"/><g transform="translate(335,363) "><path d="M0 0H6.500L4.900 1.600 9.400 6.100 11 4.500V11H4.500L6.100 9.400 1.600 4.900 0 6.500z" fill="#000"/></g><g transform="translate(853.3,363) scale(-1,1) translate(-11,0)"><path d="M0 0H6.500L4.900 1.600 9.400 6.100 11 4.500V11H4.500L6.100 9.400 1.600 4.900 0 6.500z" fill="#000"/></g><g transform="translate(335,667) scale(-1,1) translate(-11,0)"><path d="M0 0H6.500L4.900 1.600 9.400 6.100 11 4.500V11H4.500L6.100 9.400 1.600 4.900 0 6.500z" fill="#000"/></g><g transform="translate(853.3,667) "><path d="M0 0H6.500L4.900 1.600 9.400 6.100 11 4.500V11H4.500L6.100 9.400 1.600 4.900 0 6.500z" fill="#000"/></g><g transform="translate(595.05,362) "><path d="M4.500 0L9 4.300H7v3.400h2L4.500 12 0 7.700h2V4.300H0z" fill="#000"/></g><g transform="translate(595.05,666.3) "><path d="M4.500 0L9 4.300H7v3.400h2L4.500 12 0 7.700h2V4.300H0z" fill="#000"/></g><g transform="translate(334,516) "><path d="M0 4.500L4.300 0v2h3.400V0L12 4.500 7.700 9V7H4.300v2z" fill="#000"/></g><g transform="translate(853,516) "><path d="M0 4.500L4.300 0v2h3.400V0L12 4.500 7.700 9V7H4.300v2z" fill="#000"/></g></svg>
<div class="b" style="left:1039.30px;top:198.00px;width:17.50px;height:735.00px;background:#cecece"></div>
<div class="b" style="left:1056.80px;top:181.00px;width:1.80px;height:769.00px;background:#d2ccc4"></div>
<div class="b" style="left:1045.00px;top:202.00px;width:6.00px;height:200.00px;background:#7f8688;border-radius:3px"></div>
<div class="b" style="left:56.00px;top:932.00px;width:1000.80px;height:18.00px;background:#cecece"></div>
<div class="b" style="left:996.00px;top:937.50px;width:40.00px;height:6.00px;background:#7f8688;border-radius:3px"></div>
<div class="b" style="left:38.00px;top:181.00px;width:18.00px;height:17.00px;background:#fbfaf9;border-radius:4px 4px 0 0;border:1px solid #e4e2df;box-sizing:border-box"></div><svg class="b" style="left:39.00px;top:182.00px;" width="16" height="16" viewBox="0 0 16 16"><path d="M4.300 7V5.200c0-4.200 7.400-4.200 7.400 0V7" fill="none" stroke="#222" stroke-width="1.700"/><rect x="1.800" y="6.800" width="12.400" height="8" rx="1" fill="url(#gLk)" stroke="#222" stroke-width="1"/><circle cx="8" cy="10" r="1.200" fill="#222"/><path d="M8 10v2.500" stroke="#222" stroke-width="1.200"/></svg><div class="b" style="left:1039.80px;top:181.30px;width:16.40px;height:16.80px;background:#fbfaf9;border:1px solid #a9a6a2;border-radius:3.5px;box-sizing:border-box"></div><svg class="b" style="left:1043.00px;top:184.00px;" width="11" height="11" viewBox="0 0 11 11"><path d="M3.300 3.400L5.600 1.800h1.900v7.600H5V4.600l-1.200.7z" fill="#fff" stroke="#8a8a8a" stroke-width="1"/></svg><div class="b" style="left:1039.80px;top:933.00px;width:17.00px;height:16.00px;background:#f2f1ef;border:1px solid #dcdad7;border-radius:3px;box-sizing:border-box"></div><svg class="b" style="left:1042.00px;top:935.00px;" width="14" height="13" viewBox="0 0 14 13"><path d="M1.500 .8l11 6-11 5.500z" fill="#d8efd8" stroke="#e0d0e8" stroke-width=".8"/><path d="M1.500 .8l11 6-6 3z" fill="#f4dce8" opacity=".8"/></svg>
<div class="b" style="left:0.00px;top:950.00px;width:1590.00px;height:21.50px;background:#fff"></div><svg class="b" style="left:0.00px;top:950.00px;" width="1590" height="21.5" viewBox="0 0 1590 21.5"><rect x="4.75" y="0" width="19.3" height="21.500" fill="#000000"/><rect x="23.75" y="0" width="19.3" height="21.500" fill="#1a1a1a"/><rect x="42.75" y="0" width="19.3" height="21.500" fill="#333333"/><rect x="61.75" y="0" width="19.3" height="21.500" fill="#4d4d4d"/><rect x="80.75" y="0" width="19.3" height="21.500" fill="#666666"/><rect x="99.75" y="0" width="19.3" height="21.500" fill="#808080"/><rect x="118.75" y="0" width="19.3" height="21.500" fill="#999999"/><rect x="137.75" y="0" width="19.3" height="21.500" fill="#b3b3b3"/><rect x="156.75" y="0" width="19.3" height="21.500" fill="#cccccc"/><rect x="175.75" y="0" width="19.3" height="21.500" fill="#e6e6e6"/><rect x="194.75" y="0" width="19.3" height="21.500" fill="#ececec"/><rect x="213.75" y="0" width="19.3" height="21.500" fill="#f2f2f2"/><rect x="232.75" y="0" width="19.3" height="21.500" fill="#f9f9f9"/><rect x="251.75" y="0" width="19.3" height="21.500" fill="#ffffff"/><rect x="270.75" y="0" width="19.3" height="21.500" fill="#800000"/><rect x="289.75" y="0" width="19.3" height="21.500" fill="#ff0000"/><rect x="308.75" y="0" width="19.3" height="21.500" fill="#808000"/><rect x="327.75" y="0" width="19.3" height="21.500" fill="#ffff00"/><rect x="346.75" y="0" width="19.3" height="21.500" fill="#008000"/><rect x="365.75" y="0" width="19.3" height="21.500" fill="#00ff00"/><rect x="384.75" y="0" width="19.3" height="21.500" fill="#008080"/><rect x="403.75" y="0" width="19.3" height="21.500" fill="#00ffff"/><rect x="422.75" y="0" width="19.3" height="21.500" fill="#000080"/><rect x="441.75" y="0" width="19.3" height="21.500" fill="#0000ff"/><rect x="460.75" y="0" width="19.3" height="21.500" fill="#800080"/><rect x="479.75" y="0" width="19.3" height="21.500" fill="#ff00ff"/><rect x="498.75" y="0" width="19.3" height="21.500" fill="#2b0000"/><rect x="517.75" y="0" width="19.3" height="21.500" fill="#550000"/><rect x="536.75" y="0" width="19.3" height="21.500" fill="#800000"/><rect x="555.75" y="0" width="19.3" height="21.500" fill="#aa0000"/><rect x="574.75" y="0" width="19.3" height="21.500" fill="#d40000"/><rect x="593.75" y="0" width="19.3" height="21.500" fill="#ff0000"/><rect x="612.75" y="0" width="19.3" height="21.500" fill="#ff2a2a"/><rect x="631.75" y="0" width="19.3" height="21.500" fill="#ff5555"/><rect x="650.75" y="0" width="19.3" height="21.500" fill="#ff8080"/><rect x="669.75" y="0" width="19.3" height="21.500" fill="#ffaaaa"/><rect x="688.75" y="0" width="19.3" height="21.500" fill="#ffd5d5"/><rect x="707.75" y="0" width="19.3" height="21.500" fill="#280b0b"/><rect x="726.75" y="0" width="19.3" height="21.500" fill="#501616"/><rect x="745.75" y="0" width="19.3" height="21.500" fill="#782121"/><rect x="764.75" y="0" width="19.3" height="21.500" fill="#a02c2c"/><rect x="783.75" y="0" width="19.3" height="21.500" fill="#c83737"/><rect x="802.75" y="0" width="19.3" height="21.500" fill="#d35f5f"/><rect x="821.75" y="0" width="19.3" height="21.500" fill="#de8787"/><rect x="840.75" y="0" width="19.3" height="21.500" fill="#e9afaf"/><rect x="859.75" y="0" width="19.3" height="21.500" fill="#f4d7d7"/><rect x="878.75" y="0" width="19.3" height="21.500" fill="#241c1c"/><rect x="897.75" y="0" width="19.3" height="21.500" fill="#483737"/><rect x="916.75" y="0" width="19.3" height="21.500" fill="#6c5353"/><rect x="935.75" y="0" width="19.3" height="21.500" fill="#916f6f"/><rect x="954.75" y="0" width="19.3" height="21.500" fill="#ac9393"/><rect x="973.75" y="0" width="19.3" height="21.500" fill="#c8b7b7"/><rect x="992.75" y="0" width="19.3" height="21.500" fill="#e3dbdb"/><rect x="1011.75" y="0" width="19.3" height="21.500" fill="#2b1100"/><rect x="1030.75" y="0" width="19.3" height="21.500" fill="#552200"/><rect x="1049.75" y="0" width="19.3" height="21.500" fill="#803300"/><rect x="1068.75" y="0" width="19.3" height="21.500" fill="#aa4400"/><rect x="1087.75" y="0" width="19.3" height="21.500" fill="#d45500"/><rect x="1106.75" y="0" width="19.3" height="21.500" fill="#ff6600"/><rect x="1125.75" y="0" width="19.3" height="21.500" fill="#ff7f2a"/><rect x="1144.75" y="0" width="19.3" height="21.500" fill="#ff9955"/><rect x="1163.75" y="0" width="19.3" height="21.500" fill="#ffb380"/><rect x="1182.75" y="0" width="19.3" height="21.500" fill="#ffccaa"/><rect x="1201.75" y="0" width="19.3" height="21.500" fill="#ffe6d5"/><rect x="1220.75" y="0" width="19.3" height="21.500" fill="#28170b"/><rect x="1239.75" y="0" width="19.3" height="21.500" fill="#502d16"/><rect x="1258.75" y="0" width="19.3" height="21.500" fill="#784421"/><rect x="1277.75" y="0" width="19.3" height="21.500" fill="#a05a2c"/><rect x="1296.75" y="0" width="19.3" height="21.500" fill="#c87137"/><rect x="1315.75" y="0" width="19.3" height="21.500" fill="#d38d5f"/><rect x="1334.75" y="0" width="19.3" height="21.500" fill="#deaa87"/><rect x="1353.75" y="0" width="19.3" height="21.500" fill="#e9c6af"/><rect x="1372.75" y="0" width="19.3" height="21.500" fill="#f4e3d7"/><rect x="1391.75" y="0" width="19.3" height="21.500" fill="#241f1c"/><rect x="1410.75" y="0" width="19.3" height="21.500" fill="#483e37"/><rect x="1429.75" y="0" width="19.3" height="21.500" fill="#6c5d53"/><rect x="1448.75" y="0" width="19.3" height="21.500" fill="#917c6f"/><rect x="1467.75" y="0" width="19.3" height="21.500" fill="#ac9d93"/><rect x="1486.75" y="0" width="19.3" height="21.500" fill="#c8beb7"/><rect x="1505.75" y="0" width="19.3" height="21.500" fill="#e3dedb"/><rect x="1524.75" y="0" width="19.3" height="21.500" fill="#2b2200"/><rect x="1543.75" y="0" width="19.3" height="21.500" fill="#554400"/><rect x="1562.75" y="0" width="19.3" height="21.500" fill="#806600"/><rect x="1581.75" y="0" width="19.3" height="21.500" fill="#aa8800"/><rect x="1600.75" y="0" width="19.3" height="21.500" fill="#d4aa00"/><rect x="-15" y="0" width="19.700" height="21.500" fill="#fff"/><path d="M-14 .5L4 21M-14 21L4 .5" stroke="#a01010" stroke-width="1.600" fill="none"/></svg><div class="b" style="left:0.00px;top:971.50px;width:1590.00px;height:12.50px;background:#cecece"></div><div class="b" style="left:-5.00px;top:975.20px;width:420.00px;height:6.00px;background:#7f8688;border-radius:3px"></div><div class="b" style="left:0.00px;top:984.00px;width:1590.00px;height:40.00px;background:#f5f4f2"></div><span class="t" style="left:-9.50px;top:987.72px;font-size:13.80px;line-height:13.80px;letter-spacing:-0.073px;color:#2e3436;">Füllung:</span><span class="t" style="left:43.40px;top:987.89px;font-size:13.60px;line-height:13.60px;font-weight:bold;color:#2e3436;transform:scaleX(1.0838);transform-origin:0 0;">Ungesetzt</span><span class="t" style="left:-9.00px;top:1007.22px;font-size:13.80px;line-height:13.80px;letter-spacing:-0.255px;color:#2e3436;">Kontur:</span><span class="t" style="left:43.40px;top:1007.39px;font-size:13.60px;line-height:13.60px;font-weight:bold;color:#2e3436;transform:scaleX(1.0838);transform-origin:0 0;">Ungesetzt</span><span class="t" style="left:121.40px;top:1007.39px;font-size:13.60px;line-height:13.60px;color:#2e3436;transform:scaleX(1.1868);transform-origin:0 0;">1,00</span><span class="t" style="left:156.00px;top:997.04px;font-size:14.60px;line-height:14.60px;letter-spacing:-0.703px;color:#2e3436;">O:</span><div class="b" style="left:172.70px;top:985.00px;width:66.60px;height:38.50px;background:#fff;border:1px solid #cdc7c2;border-radius:5px;box-sizing:border-box"></div><div class="b" style="left:205.70px;top:986.00px;width:1.00px;height:36.50px;background:#e8e6e3"></div><div class="b" style="left:222.30px;top:986.00px;width:1.00px;height:36.50px;background:#e8e6e3"></div><span class="t" style="left:176.70px;top:995.19px;font-size:15.60px;line-height:15.60px;letter-spacing:0.427px;color:#000;">100</span><div class="b" style="left:209.30px;top:1002.70px;width:9.50px;height:1.50px;background:#2e3436"></div><div class="b" style="left:225.70px;top:1002.70px;width:10.00px;height:1.50px;background:#c9cacb"></div><div class="b" style="left:230.00px;top:998.40px;width:1.50px;height:10.00px;background:#c9cacb"></div><div class="b" style="left:242.70px;top:986.00px;width:1.00px;height:38.00px;background:#dedbd8"></div><svg class="b" style="left:253.50px;top:996.00px;" width="16.5" height="14" viewBox="0 0 17.5 15"><path d="M.8 8.800c4-6.400 12-6.400 16 0-4 5.600-12 5.600-16 0z" fill="#fff" stroke="#111" stroke-width="1.300"/><circle cx="8.800" cy="8.600" r="3.400" fill="#111"/><circle cx="7.800" cy="7.600" r="1" fill="#fff"/><path d="M2.800 3.800L1.500 1.500M6.300 2.500L5.700 0M11.300 2.500l.6-2.500M14.800 3.800l1.300-2.300" stroke="#111" stroke-width="1.100"/></svg><svg class="b" style="left:290.00px;top:996.00px;" width="16" height="16" viewBox="0 0 16 16"><path d="M4.200 8V4.600c0-3.400 5.600-3.600 6.600-.6" fill="none" stroke="#222" stroke-width="1.600" stroke-linecap="round"/><rect x="3" y="7.800" width="10.400" height="7.200" rx=".8" fill="url(#gLk)" stroke="#222" stroke-width="1" transform="rotate(-6 8 11)"/><circle cx="8.300" cy="10.600" r="1.100" fill="#222"/><path d="M8.300 10.600v2.200" stroke="#222" stroke-width="1.100"/></svg><div class="b" style="left:316.70px;top:985.00px;width:93.30px;height:38.50px;background:linear-gradient(#f7f6f5,#edebe9);border:1px solid #cdc7c2;border-radius:5px;box-sizing:border-box"></div><span class="t" style="left:329.30px;top:997.49px;font-size:13.60px;line-height:13.60px;font-weight:bold;color:#2e3436;transform:scaleX(0.9386);transform-origin:0 0;">•Ebene 1</span><svg class="b" style="left:388.00px;top:1001.00px;" width="11" height="7" viewBox="0 0 11 7"><path d="M.5 .8h10L5.500 6.300z" fill="#2e3436"/></svg><span class="t" style="left:424.30px;top:988.66px;font-size:13.40px;line-height:13.40px;font-weight:bold;color:#2e3436;transform:scaleX(1.3054);transform-origin:0 0;">Strg</span><span class="t" style="left:459.80px;top:988.66px;font-size:13.40px;line-height:13.40px;color:#2e3436;transform:scaleX(1.2889);transform-origin:0 0;">: Klick um in Gruppierung auszuwählen; Ziehen um horizontal/vertikal bewegen; ;</span><span class="t" style="left:1086.70px;top:988.66px;font-size:13.40px;line-height:13.40px;font-weight:bold;color:#2e3436;transform:scaleX(1.2646);transform-origin:0 0;">Alt</span><span class="t" style="left:1109.60px;top:988.66px;font-size:13.40px;line-height:13.40px;color:#2e3436;transform:scaleX(1.2826);transform-origin:0 0;">: Klick um verdeckte Objekte auswählen; Ziehen</span><span class="t" style="left:424.30px;top:1006.36px;font-size:13.40px;line-height:13.40px;color:#2e3436;transform:scaleX(1.2821);transform-origin:0 0;">um gewähltes Objekt zu verschieben oder durch Berühren auszuwählen</span><div class="b" style="left:1490.00px;top:986.00px;width:1.00px;height:38.00px;background:#dedbd8"></div><span class="t" style="left:1501.00px;top:988.66px;font-size:13.40px;line-height:13.40px;color:#2e3436;transform:scaleX(0.9237);transform-origin:0 0;">X:</span><span class="t" style="left:1501.00px;top:1007.96px;font-size:13.40px;line-height:13.40px;color:#2e3436;transform:scaleX(0.9810);transform-origin:0 0;">Y:</span><span class="t" style="left:1525.00px;top:988.49px;font-size:13.60px;line-height:13.60px;color:#2e3436;transform:scaleX(1.3404);transform-origin:0 0;">58875,73</span><span class="t" style="left:1538.30px;top:1007.79px;font-size:13.60px;line-height:13.60px;color:#2e3436;transform:scaleX(1.3447);transform-origin:0 0;">-362,64</span>
</body></html>
